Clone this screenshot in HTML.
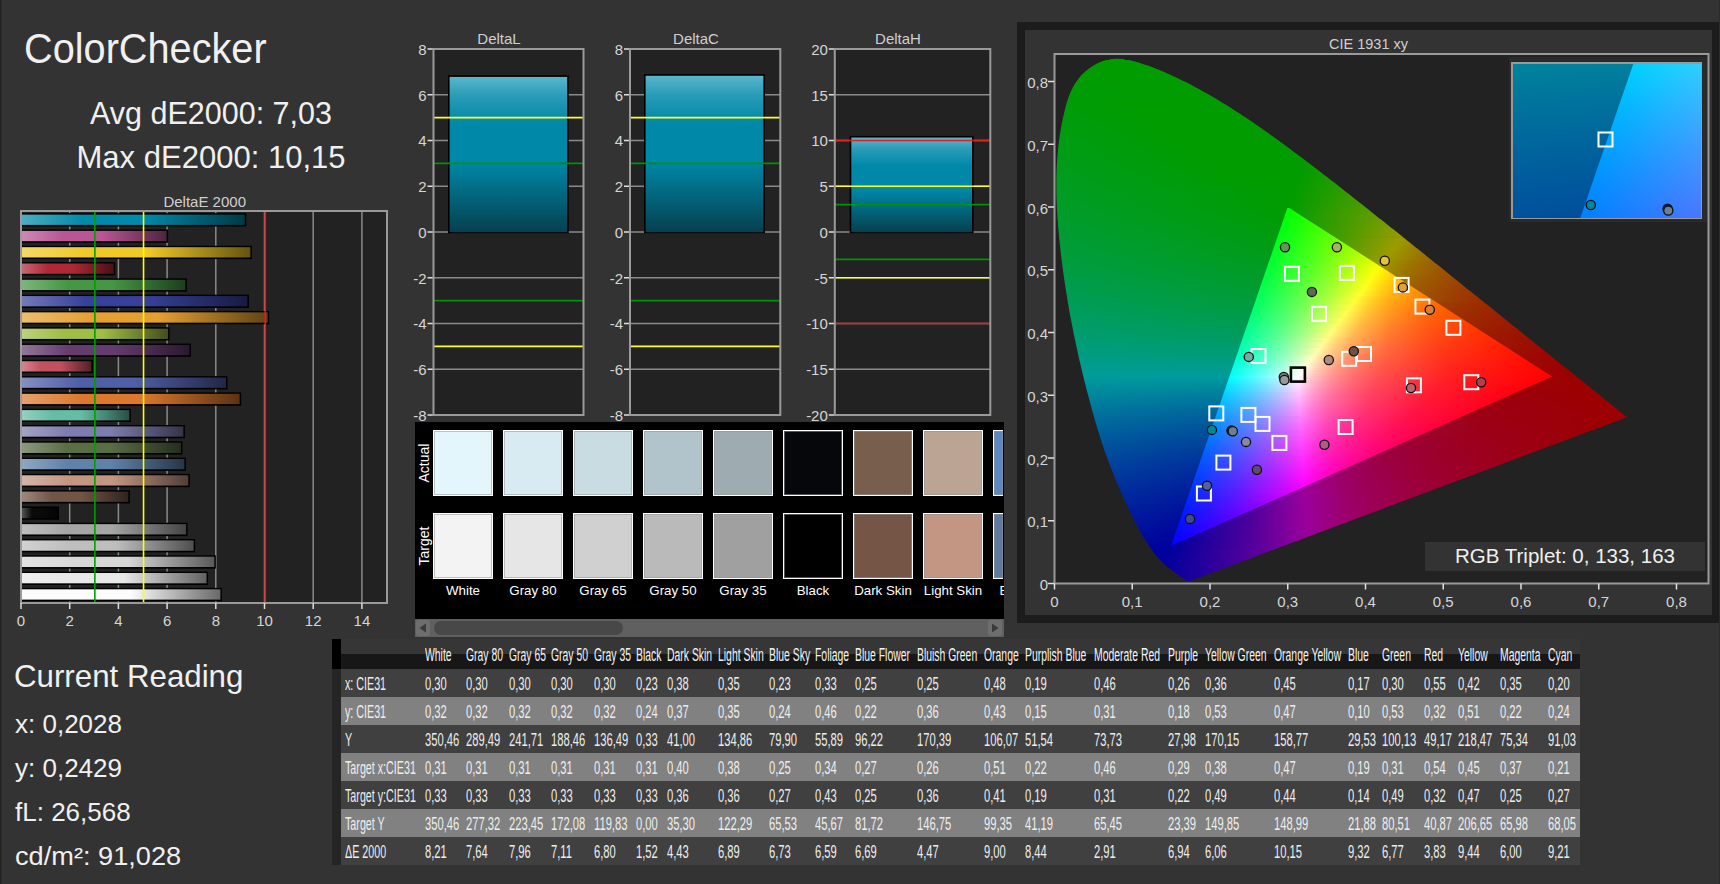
<!DOCTYPE html>
<html><head><meta charset="utf-8"><style>
html,body{margin:0;padding:0}
body{width:1720px;height:884px;background:#333;position:relative;overflow:hidden;font-family:"Liberation Sans", sans-serif}
div{position:absolute}
.t{white-space:nowrap;line-height:1}
svg{position:absolute;left:0;top:0}
</style></head><body>
<div style="left:0;top:0;width:1px;height:884px;background:#222"></div>
<div style="left:1px;top:0;width:1px;height:884px;background:#2b2b2b"></div>
<div style="left:415px;top:422px;width:589px;height:197px;background:#000"></div>
<div style="left:433px;top:430px;width:58px;height:64px;background:#e2f6fc;border:1px solid #fff;border-right-width:1px;box-shadow:inset 0 0 0 1px rgba(150,150,150,0.55)"></div>
<div style="left:433px;top:513px;width:58px;height:64px;background:#f3f3f3;border:1px solid #fff;border-right-width:1px;box-shadow:inset 0 0 0 1px rgba(150,150,150,0.55)"></div>
<div style="left:503px;top:430px;width:58px;height:64px;background:#d8ebf3;border:1px solid #fff;border-right-width:1px;box-shadow:inset 0 0 0 1px rgba(150,150,150,0.55)"></div>
<div style="left:503px;top:513px;width:58px;height:64px;background:#e6e6e6;border:1px solid #fff;border-right-width:1px;box-shadow:inset 0 0 0 1px rgba(150,150,150,0.55)"></div>
<div style="left:573px;top:430px;width:58px;height:64px;background:#c8dce2;border:1px solid #fff;border-right-width:1px;box-shadow:inset 0 0 0 1px rgba(150,150,150,0.55)"></div>
<div style="left:573px;top:513px;width:58px;height:64px;background:#d0d0d0;border:1px solid #fff;border-right-width:1px;box-shadow:inset 0 0 0 1px rgba(150,150,150,0.55)"></div>
<div style="left:643px;top:430px;width:58px;height:64px;background:#b2c4cb;border:1px solid #fff;border-right-width:1px;box-shadow:inset 0 0 0 1px rgba(150,150,150,0.55)"></div>
<div style="left:643px;top:513px;width:58px;height:64px;background:#bababa;border:1px solid #fff;border-right-width:1px;box-shadow:inset 0 0 0 1px rgba(150,150,150,0.55)"></div>
<div style="left:713px;top:430px;width:58px;height:64px;background:#9eabb0;border:1px solid #fff;border-right-width:1px;box-shadow:inset 0 0 0 1px rgba(150,150,150,0.55)"></div>
<div style="left:713px;top:513px;width:58px;height:64px;background:#a0a0a0;border:1px solid #fff;border-right-width:1px;box-shadow:inset 0 0 0 1px rgba(150,150,150,0.55)"></div>
<div style="left:783px;top:430px;width:58px;height:64px;background:#05070b;border:1px solid #fff;border-right-width:1px;box-shadow:inset 0 0 0 1px rgba(150,150,150,0.55)"></div>
<div style="left:783px;top:513px;width:58px;height:64px;background:#000000;border:1px solid #fff;border-right-width:1px;box-shadow:inset 0 0 0 1px rgba(150,150,150,0.55)"></div>
<div style="left:853px;top:430px;width:58px;height:64px;background:#785e4c;border:1px solid #fff;border-right-width:1px;box-shadow:inset 0 0 0 1px rgba(150,150,150,0.55)"></div>
<div style="left:853px;top:513px;width:58px;height:64px;background:#745546;border:1px solid #fff;border-right-width:1px;box-shadow:inset 0 0 0 1px rgba(150,150,150,0.55)"></div>
<div style="left:923px;top:430px;width:58px;height:64px;background:#bca494;border:1px solid #fff;border-right-width:1px;box-shadow:inset 0 0 0 1px rgba(150,150,150,0.55)"></div>
<div style="left:923px;top:513px;width:58px;height:64px;background:#c29682;border:1px solid #fff;border-right-width:1px;box-shadow:inset 0 0 0 1px rgba(150,150,150,0.55)"></div>
<div style="left:993px;top:430px;width:9px;height:64px;background:#5a88c0;border:1px solid #fff;border-right-width:0px;box-shadow:inset 0 0 0 1px rgba(150,150,150,0.55)"></div>
<div style="left:993px;top:513px;width:9px;height:64px;background:#5f7aa0;border:1px solid #fff;border-right-width:0px;box-shadow:inset 0 0 0 1px rgba(150,150,150,0.55)"></div>
<div style="left:415px;top:619px;width:589px;height:18px;background:#606060"></div>
<div style="left:416px;top:620px;width:14px;height:16px;background:#6e6e6e;border-radius:3px"></div>
<div style="left:433.5px;top:621px;width:189px;height:14px;background:#484848;border-radius:7px"></div>
<div style="left:988px;top:620px;width:14px;height:16px;background:#6e6e6e;border-radius:3px"></div>
<div style="left:1017px;top:22px;width:702px;height:600.5px;background:#1c1c1c"></div>
<div style="left:1719px;top:0;width:1px;height:884px;background:#2b2b2b"></div>
<div style="left:1025px;top:30px;width:687px;height:585px;background:#333"></div>
<div style="left:1054px;top:54px;width:655px;height:530px;background:#222"></div>
<div style="left:1054px;top:54px;width:655px;height:530px;clip-path:polygon(135.4px 527.2px,132.3px 526.5px,129.6px 524.8px,127.0px 522.9px,124.4px 521.0px,121.8px 519.2px,119.2px 517.3px,116.6px 515.5px,114.2px 513.5px,111.8px 511.5px,109.5px 509.4px,107.3px 507.2px,105.1px 505.0px,103.1px 502.7px,101.2px 500.4px,99.4px 498.0px,97.6px 495.6px,95.9px 493.2px,94.2px 490.7px,92.6px 488.2px,91.0px 485.8px,89.5px 483.2px,88.0px 480.7px,86.5px 478.2px,85.1px 475.6px,83.7px 473.1px,82.3px 470.5px,81.0px 467.9px,79.6px 465.3px,78.3px 462.8px,77.1px 460.2px,75.8px 457.5px,74.6px 454.9px,73.4px 452.3px,72.1px 449.7px,71.0px 447.1px,69.8px 444.4px,68.6px 441.8px,67.4px 439.2px,66.3px 436.5px,65.1px 433.9px,64.0px 431.2px,62.9px 428.6px,61.8px 425.9px,60.7px 423.3px,59.6px 420.6px,58.5px 418.0px,57.5px 415.3px,56.4px 412.6px,55.4px 409.9px,54.4px 407.3px,53.4px 404.6px,52.4px 401.9px,51.5px 399.2px,50.5px 396.5px,49.6px 393.8px,48.7px 391.1px,47.8px 388.4px,46.9px 385.7px,46.1px 383.0px,45.2px 380.3px,44.4px 377.6px,43.5px 374.9px,42.7px 372.1px,41.9px 369.4px,41.1px 366.7px,40.3px 364.0px,39.6px 361.2px,38.8px 358.5px,38.0px 355.8px,37.3px 353.0px,36.5px 350.3px,35.8px 347.6px,35.1px 344.8px,34.3px 342.1px,33.6px 339.4px,32.9px 336.6px,32.2px 333.9px,31.5px 331.1px,30.8px 328.4px,30.1px 325.7px,29.5px 322.9px,28.8px 320.2px,28.1px 317.4px,27.5px 314.7px,26.8px 311.9px,26.2px 309.2px,25.5px 306.4px,24.9px 303.7px,24.3px 300.9px,23.7px 298.2px,23.1px 295.4px,22.5px 292.7px,21.9px 289.9px,21.3px 287.1px,20.7px 284.4px,20.1px 281.6px,19.6px 278.9px,19.0px 276.1px,18.5px 273.3px,17.9px 270.6px,17.4px 267.8px,16.9px 265.0px,16.3px 262.3px,15.8px 259.5px,15.3px 256.7px,14.8px 254.0px,14.4px 251.2px,13.9px 248.4px,13.4px 245.7px,13.0px 242.9px,12.5px 240.1px,12.1px 237.3px,11.6px 234.6px,11.2px 231.8px,10.8px 229.0px,10.4px 226.2px,10.0px 223.5px,9.6px 220.7px,9.2px 217.9px,8.8px 215.1px,8.4px 212.3px,8.1px 209.6px,7.7px 206.8px,7.4px 204.0px,7.1px 201.2px,6.7px 198.4px,6.4px 195.6px,6.1px 192.8px,5.8px 190.0px,5.5px 187.2px,5.2px 184.4px,5.0px 181.6px,4.7px 178.8px,4.5px 176.0px,4.2px 173.2px,4.0px 170.5px,3.8px 167.7px,3.6px 164.9px,3.4px 162.1px,3.2px 159.3px,3.1px 156.5px,2.9px 153.7px,2.8px 150.9px,2.7px 148.1px,2.6px 145.3px,2.5px 142.5px,2.4px 139.7px,2.4px 136.9px,2.4px 134.1px,2.4px 131.3px,2.4px 128.5px,2.4px 125.7px,2.4px 122.9px,2.5px 120.1px,2.6px 117.3px,2.7px 114.5px,2.8px 111.8px,3.0px 109.0px,3.2px 106.2px,3.3px 103.4px,3.6px 100.6px,3.8px 97.9px,4.1px 95.1px,4.4px 92.3px,4.7px 89.5px,5.0px 86.7px,5.4px 84.0px,5.8px 81.2px,6.3px 78.4px,6.7px 75.6px,7.2px 72.8px,7.7px 70.0px,8.3px 67.3px,8.8px 64.5px,9.5px 61.7px,10.1px 58.9px,10.8px 56.1px,11.5px 53.3px,12.2px 50.5px,13.1px 47.8px,14.0px 45.0px,14.9px 42.3px,16.0px 39.6px,17.1px 36.9px,18.4px 34.3px,19.8px 31.7px,21.3px 29.2px,23.0px 26.7px,24.8px 24.3px,26.7px 22.0px,28.9px 19.7px,31.2px 17.6px,33.7px 15.5px,36.4px 13.5px,39.2px 11.7px,42.1px 10.0px,45.2px 8.6px,48.3px 7.3px,51.5px 6.2px,54.8px 5.5px,58.2px 4.9px,61.6px 4.7px,65.0px 4.7px,68.4px 5.0px,71.9px 5.5px,75.3px 6.1px,78.7px 6.9px,82.1px 7.8px,85.5px 8.8px,88.8px 9.9px,92.1px 11.0px,95.3px 12.1px,98.5px 13.3px,101.6px 14.5px,104.7px 15.7px,107.8px 17.0px,110.8px 18.3px,113.9px 19.7px,116.9px 21.0px,119.8px 22.4px,122.8px 23.8px,125.8px 25.2px,128.7px 26.7px,131.7px 28.1px,134.6px 29.6px,137.6px 31.1px,140.5px 32.7px,143.4px 34.2px,146.3px 35.8px,149.1px 37.4px,152.0px 39.0px,154.8px 40.6px,157.6px 42.2px,160.4px 43.8px,163.2px 45.5px,166.0px 47.2px,168.8px 48.9px,171.5px 50.6px,174.3px 52.3px,177.0px 54.0px,179.7px 55.7px,182.4px 57.5px,185.1px 59.2px,187.8px 61.0px,190.5px 62.8px,193.2px 64.5px,195.8px 66.3px,198.5px 68.1px,201.1px 69.9px,203.8px 71.8px,206.4px 73.6px,209.0px 75.4px,211.6px 77.3px,214.2px 79.1px,216.8px 81.0px,219.4px 82.8px,222.0px 84.7px,224.6px 86.6px,227.2px 88.4px,229.7px 90.3px,232.3px 92.2px,234.8px 94.1px,237.4px 96.0px,239.9px 97.9px,242.5px 99.8px,245.0px 101.7px,247.6px 103.6px,250.1px 105.5px,252.6px 107.4px,255.1px 109.3px,257.7px 111.3px,260.2px 113.2px,262.7px 115.1px,265.2px 117.0px,267.7px 119.0px,270.2px 120.9px,272.7px 122.8px,275.2px 124.8px,277.7px 126.7px,280.2px 128.6px,282.7px 130.6px,285.2px 132.5px,287.7px 134.5px,290.2px 136.4px,292.7px 138.4px,295.2px 140.3px,297.6px 142.3px,300.1px 144.2px,302.6px 146.2px,305.1px 148.2px,307.5px 150.1px,310.0px 152.1px,312.5px 154.0px,315.0px 156.0px,317.4px 158.0px,319.9px 159.9px,322.4px 161.9px,324.8px 163.9px,327.3px 165.8px,329.8px 167.8px,332.3px 169.8px,334.7px 171.7px,337.2px 173.7px,339.7px 175.6px,342.1px 177.6px,344.6px 179.6px,347.1px 181.5px,349.5px 183.5px,352.0px 185.5px,354.4px 187.5px,356.9px 189.4px,359.4px 191.4px,361.8px 193.4px,364.3px 195.3px,366.7px 197.3px,369.2px 199.3px,371.6px 201.3px,374.1px 203.2px,376.6px 205.2px,379.0px 207.2px,381.5px 209.2px,383.9px 211.1px,386.4px 213.1px,388.8px 215.1px,391.3px 217.1px,393.7px 219.1px,396.2px 221.0px,398.6px 223.0px,401.1px 225.0px,403.6px 227.0px,406.0px 228.9px,408.5px 230.9px,410.9px 232.9px,413.4px 234.9px,415.8px 236.8px,418.3px 238.8px,420.7px 240.8px,423.2px 242.8px,425.7px 244.7px,428.1px 246.7px,430.6px 248.7px,433.0px 250.6px,435.5px 252.6px,438.0px 254.6px,440.4px 256.6px,442.9px 258.5px,445.3px 260.5px,447.8px 262.5px,450.2px 264.5px,452.7px 266.4px,455.1px 268.4px,457.6px 270.4px,460.1px 272.4px,462.5px 274.3px,465.0px 276.3px,467.4px 278.3px,469.9px 280.3px,472.3px 282.3px,474.8px 284.2px,477.2px 286.2px,479.7px 288.2px,482.1px 290.2px,484.6px 292.1px,487.0px 294.1px,489.5px 296.1px,492.0px 298.1px,494.4px 300.0px,496.9px 302.0px,499.3px 304.0px,501.8px 305.9px,504.2px 307.9px,506.7px 309.9px,509.2px 311.9px,511.6px 313.8px,514.1px 315.8px,516.6px 317.8px,519.0px 319.7px,521.5px 321.7px,523.9px 323.7px,526.4px 325.7px,528.8px 327.6px,531.3px 329.6px,533.7px 331.6px,536.2px 333.6px,538.6px 335.6px,541.1px 337.5px,543.6px 339.5px,546.0px 341.5px,548.5px 343.4px,550.9px 345.4px,553.4px 347.4px,555.8px 349.4px,558.3px 351.3px,560.7px 353.3px,563.2px 355.3px,565.7px 357.2px,568.1px 359.2px,570.6px 361.2px,573.0px 363.2px)"><div style="left:54.8px;top:4px;width:16.5px;height:2px;background:linear-gradient(90deg,#009c00 0.0px,#009c00 16.5px)"></div><div style="left:46.2px;top:6px;width:36.0px;height:2px;background:linear-gradient(90deg,#009c00 0.0px,#009c00 35.9px)"></div><div style="left:41.2px;top:8px;width:47.9px;height:2px;background:linear-gradient(90deg,#009c00 0.0px,#009c00 47.9px)"></div><div style="left:37.4px;top:10px;width:57.8px;height:2px;background:linear-gradient(90deg,#009c00 0.0px,#009c00 57.8px)"></div><div style="left:34.2px;top:12px;width:66.6px;height:2px;background:linear-gradient(90deg,#009c00 0.0px,#009c00 66.6px)"></div><div style="left:31.4px;top:14px;width:74.5px;height:2px;background:linear-gradient(90deg,#009c00 0.0px,#009c00 74.5px)"></div><div style="left:28.9px;top:16px;width:81.9px;height:2px;background:linear-gradient(90deg,#009c00 0.0px,#009c00 81.9px)"></div><div style="left:26.7px;top:18px;width:88.7px;height:2px;background:linear-gradient(90deg,#009c00 0.0px,#009c00 88.7px)"></div><div style="left:24.7px;top:20px;width:95.1px;height:2px;background:linear-gradient(90deg,#009c00 0.0px,#009c00 95.1px)"></div><div style="left:22.9px;top:22px;width:101.2px;height:2px;background:linear-gradient(90deg,#009c01 0.0px,#009c00 101.2px)"></div><div style="left:21.3px;top:24px;width:107.1px;height:2px;background:linear-gradient(90deg,#009c02 0.0px,#009c00 107.0px)"></div><div style="left:19.8px;top:26px;width:112.6px;height:2px;background:linear-gradient(90deg,#009c02 0.0px,#009c00 112.6px)"></div><div style="left:18.4px;top:28px;width:117.9px;height:2px;background:linear-gradient(90deg,#009c03 0.0px,#009c00 117.9px)"></div><div style="left:17.2px;top:30px;width:123.1px;height:2px;background:linear-gradient(90deg,#009c04 0.0px,#009c00 123.1px)"></div><div style="left:16.1px;top:32px;width:128.0px;height:2px;background:linear-gradient(90deg,#009c04 0.0px,#009c00 128.0px)"></div><div style="left:15.1px;top:34px;width:132.8px;height:2px;background:linear-gradient(90deg,#009c05 0.0px,#009c00 132.7px)"></div><div style="left:14.1px;top:36px;width:137.4px;height:2px;background:linear-gradient(90deg,#009c05 0.0px,#009c00 137.4px)"></div><div style="left:13.2px;top:38px;width:141.8px;height:2px;background:linear-gradient(90deg,#009c06 0.0px,#009c00 141.8px)"></div><div style="left:12.4px;top:40px;width:146.1px;height:2px;background:linear-gradient(90deg,#009c06 0.0px,#009c00 146.1px)"></div><div style="left:11.7px;top:42px;width:150.3px;height:2px;background:linear-gradient(90deg,#009c07 0.0px,#009c00 150.3px)"></div><div style="left:11.0px;top:44px;width:154.4px;height:2px;background:linear-gradient(90deg,#009c08 0.0px,#009c00 154.4px)"></div><div style="left:10.3px;top:46px;width:158.4px;height:2px;background:linear-gradient(90deg,#009c08 0.0px,#009c00 57.4px,#009c00 158.4px)"></div><div style="left:9.7px;top:48px;width:162.3px;height:2px;background:linear-gradient(90deg,#009c09 0.0px,#009c00 61.4px,#009c00 162.3px)"></div><div style="left:9.1px;top:50px;width:166.1px;height:2px;background:linear-gradient(90deg,#009c09 0.0px,#009c00 65.3px,#009c00 166.1px)"></div><div style="left:8.6px;top:52px;width:169.9px;height:2px;background:linear-gradient(90deg,#009c0a 0.0px,#009c00 69.9px,#009c00 169.8px)"></div><div style="left:8.1px;top:54px;width:173.5px;height:2px;background:linear-gradient(90deg,#009c0a 0.0px,#009c00 73.8px,#009c00 173.5px)"></div><div style="left:7.6px;top:56px;width:177.2px;height:2px;background:linear-gradient(90deg,#009c0b 0.0px,#009c00 75.6px,#009c00 177.1px)"></div><div style="left:7.1px;top:58px;width:180.7px;height:2px;background:linear-gradient(90deg,#009c0b 0.0px,#009c00 79.4px,#009c00 180.7px)"></div><div style="left:6.6px;top:60px;width:184.2px;height:2px;background:linear-gradient(90deg,#009c0c 0.0px,#009c00 83.2px,#009c00 184.2px)"></div><div style="left:6.2px;top:62px;width:187.7px;height:2px;background:linear-gradient(90deg,#009c0c 0.0px,#009c00 87.9px,#009c00 187.7px)"></div><div style="left:5.7px;top:64px;width:191.1px;height:2px;background:linear-gradient(90deg,#009c0d 0.0px,#009c00 91.6px,#009c00 191.1px)"></div><div style="left:5.3px;top:66px;width:194.5px;height:2px;background:linear-gradient(90deg,#009c0e 0.0px,#009c00 95.3px,#009c00 194.5px)"></div><div style="left:4.9px;top:68px;width:197.8px;height:2px;background:linear-gradient(90deg,#009c0e 0.0px,#009c00 97.9px,#009c00 197.8px)"></div><div style="left:4.5px;top:70px;width:201.1px;height:2px;background:linear-gradient(90deg,#009c0f 0.0px,#009c00 101.6px,#009c00 201.1px)"></div><div style="left:4.2px;top:72px;width:204.4px;height:2px;background:linear-gradient(90deg,#009c0f 0.0px,#009c00 105.2px,#009c00 204.4px)"></div><div style="left:3.8px;top:74px;width:207.6px;height:2px;background:linear-gradient(90deg,#009c10 0.0px,#009c00 107.8px,#009c00 207.6px)"></div><div style="left:3.5px;top:76px;width:210.8px;height:2px;background:linear-gradient(90deg,#009c10 0.0px,#009c00 111.4px,#009c00 210.8px)"></div><div style="left:3.2px;top:78px;width:213.9px;height:2px;background:linear-gradient(90deg,#009c11 0.0px,#009c00 116.0px,#009c00 213.9px)"></div><div style="left:2.8px;top:80px;width:217.1px;height:2px;background:linear-gradient(90deg,#009c12 0.0px,#009c00 119.5px,#009c00 217.0px)"></div><div style="left:2.6px;top:82px;width:220.1px;height:2px;background:linear-gradient(90deg,#009c12 0.0px,#009c00 123.0px,#009c00 220.1px)"></div><div style="left:2.3px;top:84px;width:223.2px;height:2px;background:linear-gradient(90deg,#009c13 0.0px,#009c00 125.5px,#009c00 223.2px)"></div><div style="left:2.0px;top:86px;width:226.2px;height:2px;background:linear-gradient(90deg,#009c13 0.0px,#009c00 129.0px,#009c00 226.2px)"></div><div style="left:1.8px;top:88px;width:229.2px;height:2px;background:linear-gradient(90deg,#009c14 0.0px,#009c00 131.5px,#009c00 229.2px)"></div><div style="left:1.5px;top:90px;width:232.1px;height:2px;background:linear-gradient(90deg,#009c15 0.0px,#009c00 134.9px,#009c00 232.1px)"></div><div style="left:1.3px;top:92px;width:235.1px;height:2px;background:linear-gradient(90deg,#009c15 0.0px,#009c00 139.5px,#009c00 235.1px)"></div><div style="left:1.1px;top:94px;width:238.0px;height:2px;background:linear-gradient(90deg,#009c16 0.0px,#009c00 142.0px,#009c00 238.0px)"></div><div style="left:0.9px;top:96px;width:240.9px;height:2px;background:linear-gradient(90deg,#009c16 0.0px,#009c00 145.3px,#009c00 240.9px)"></div><div style="left:0.7px;top:98px;width:243.7px;height:2px;background:linear-gradient(90deg,#009c17 0.0px,#009c00 147.8px,#009c00 243.7px)"></div><div style="left:0.5px;top:100px;width:246.6px;height:2px;background:linear-gradient(90deg,#009c18 0.0px,#009c00 151.1px,#009c00 246.6px)"></div><div style="left:0.4px;top:102px;width:249.4px;height:2px;background:linear-gradient(90deg,#009c18 0.0px,#009c00 155.6px,#009c00 249.4px)"></div><div style="left:0.2px;top:104px;width:252.2px;height:2px;background:linear-gradient(90deg,#009c19 0.0px,#009c00 158.9px,#029c00 252.2px)"></div><div style="left:0.1px;top:106px;width:255.0px;height:2px;background:linear-gradient(90deg,#009c19 0.0px,#009c00 161.3px,#049c00 254.9px)"></div><div style="left:0.0px;top:108px;width:257.7px;height:2px;background:linear-gradient(90deg,#009c1a 0.0px,#009c00 165.8px,#009c00 247.7px,#079c00 257.7px)"></div><div style="left:0.0px;top:110px;width:260.3px;height:2px;background:linear-gradient(90deg,#009c1b 0.0px,#009c00 168.9px,#009c00 248.4px,#0a9c00 260.3px)"></div><div style="left:0.0px;top:112px;width:262.9px;height:2px;background:linear-gradient(90deg,#009c1b 0.0px,#009c00 171.3px,#009c00 247.0px,#0d9c00 262.9px)"></div><div style="left:0.0px;top:114px;width:265.6px;height:2px;background:linear-gradient(90deg,#009c1c 0.0px,#009c00 173.7px,#009c00 245.6px,#0f9c00 265.5px)"></div><div style="left:0.0px;top:116px;width:268.2px;height:2px;background:linear-gradient(90deg,#009c1d 0.0px,#009c00 176.8px,#009c00 246.3px,#129c00 268.1px)"></div><div style="left:0.0px;top:118px;width:270.8px;height:2px;background:linear-gradient(90deg,#009c1d 0.0px,#009c00 181.2px,#009c00 244.9px,#159c00 270.8px)"></div><div style="left:0.0px;top:120px;width:273.4px;height:2px;background:linear-gradient(90deg,#009c1e 0.0px,#009c00 183.6px,#009c00 243.4px,#189c00 273.3px)"></div><div style="left:0.0px;top:122px;width:275.9px;height:2px;background:linear-gradient(90deg,#009c1e 0.0px,#009c00 186.0px,#009c00 243.9px,#1b9c00 275.9px)"></div><div style="left:0.0px;top:124px;width:278.5px;height:2px;background:linear-gradient(90deg,#009c1f 0.0px,#009c00 189.0px,#009c00 242.7px,#1e9c00 278.5px)"></div><div style="left:0.0px;top:126px;width:281.1px;height:2px;background:linear-gradient(90deg,#009c20 0.0px,#009c00 193.4px,#009c00 241.2px,#229c00 281.1px)"></div><div style="left:0.0px;top:128px;width:283.7px;height:2px;background:linear-gradient(90deg,#009c20 0.0px,#009c00 195.8px,#009c00 241.7px,#259c00 283.7px)"></div><div style="left:0.0px;top:130px;width:286.3px;height:2px;background:linear-gradient(90deg,#009c21 0.0px,#009c00 198.8px,#009c00 240.5px,#289c00 286.2px)"></div><div style="left:0.0px;top:132px;width:288.8px;height:2px;background:linear-gradient(90deg,#009c22 0.0px,#009c00 203.2px,#009c00 239.0px,#2c9c00 288.8px)"></div><div style="left:0.0px;top:134px;width:291.4px;height:2px;background:linear-gradient(90deg,#009c22 0.0px,#009c00 239.5px,#2f9c00 291.4px)"></div><div style="left:0.0px;top:136px;width:293.9px;height:2px;background:linear-gradient(90deg,#009c23 0.0px,#009c00 237.9px,#339c00 293.9px)"></div><div style="left:0.0px;top:138px;width:296.5px;height:2px;background:linear-gradient(90deg,#009c24 0.0px,#009c00 238.8px,#369c00 296.5px)"></div><div style="left:0.0px;top:140px;width:299.0px;height:2px;background:linear-gradient(90deg,#009c25 0.0px,#009c00 237.2px,#3a9c00 299.0px)"></div><div style="left:0.0px;top:142px;width:301.5px;height:2px;background:linear-gradient(90deg,#009c25 0.0px,#009c00 237.6px,#3e9c00 301.5px)"></div><div style="left:0.0px;top:144px;width:304.1px;height:2px;background:linear-gradient(90deg,#009c26 0.0px,#009c00 236.5px,#429c00 304.1px)"></div><div style="left:0.0px;top:146px;width:306.6px;height:2px;background:linear-gradient(90deg,#009c27 0.0px,#009c00 234.9px,#459c00 306.6px)"></div><div style="left:0.0px;top:148px;width:309.1px;height:2px;background:linear-gradient(90deg,#009c27 0.0px,#009c00 235.3px,#4a9c00 309.1px)"></div><div style="left:0.0px;top:150px;width:311.6px;height:2px;background:linear-gradient(90deg,#009c28 0.0px,#009c00 233.7px,#4e9c00 311.6px)"></div><div style="left:0.0px;top:152px;width:314.2px;height:2px;background:linear-gradient(90deg,#009c29 0.0px,#009c00 232.6px,#529c00 314.2px)"></div><div style="left:0.0px;top:154px;width:316.7px;height:2px;background:linear-gradient(90deg,#009c2a 0.0px,#009c01 233.0px,#569c00 316.7px)"></div><div style="left:0.1px;top:156px;width:319.1px;height:2px;background:linear-gradient(90deg,#009c2a 0.0px,#009c02 231.3px,#5b9c00 319.1px)"></div><div style="left:0.2px;top:158px;width:321.5px;height:2px;background:linear-gradient(90deg,#009c2b 0.0px,#009c03 231.6px,#5f9c00 321.5px)"></div><div style="left:0.3px;top:160px;width:323.9px;height:2px;background:linear-gradient(90deg,#009c2c 0.0px,#009c04 229.9px,#649c00 323.9px)"></div><div style="left:0.5px;top:162px;width:326.3px;height:2px;background:linear-gradient(90deg,#009c2d 0.0px,#009c05 228.8px,#699c00 326.3px)"></div><div style="left:0.6px;top:164px;width:328.7px;height:2px;background:linear-gradient(90deg,#009c2e 0.0px,#009c06 229.1px,#6e9c00 328.7px)"></div><div style="left:0.7px;top:166px;width:331.0px;height:2px;background:linear-gradient(90deg,#009c2e 0.0px,#009c07 227.3px,#349c00 279.2px,#739c00 331.0px)"></div><div style="left:0.9px;top:168px;width:333.4px;height:2px;background:linear-gradient(90deg,#009c2f 0.0px,#009c08 227.6px,#3a9c00 283.5px,#789c00 333.4px)"></div><div style="left:1.1px;top:170px;width:335.8px;height:2px;background:linear-gradient(90deg,#009c30 0.0px,#009c09 225.8px,#399c00 281.8px,#7d9c00 335.8px)"></div><div style="left:1.2px;top:172px;width:338.1px;height:2px;background:linear-gradient(90deg,#009c31 0.0px,#009c0a 224.8px,#3b9c00 282.4px,#839c00 338.1px)"></div><div style="left:1.4px;top:174px;width:340.5px;height:2px;background:linear-gradient(90deg,#009c32 0.0px,#009c0b 225.0px,#429c00 286.7px,#889c00 340.5px)"></div><div style="left:1.6px;top:176px;width:342.8px;height:2px;background:linear-gradient(90deg,#009c32 0.0px,#009c0c 223.2px,#419c00 285.0px,#8e9c00 342.8px)"></div><div style="left:1.7px;top:178px;width:345.1px;height:2px;background:linear-gradient(90deg,#009c33 0.0px,#009c0d 223.4px,#459c00 287.3px,#949c00 345.1px)"></div><div style="left:1.9px;top:180px;width:347.5px;height:2px;background:linear-gradient(90deg,#009c34 0.0px,#009c0e 221.7px,#479c00 287.5px,#9a9c00 347.4px)"></div><div style="left:2.1px;top:182px;width:349.8px;height:2px;background:linear-gradient(90deg,#009c35 0.0px,#019c0f 221.9px,#3d9c00 277.8px,#9c9700 349.8px)"></div><div style="left:2.3px;top:184px;width:352.1px;height:2px;background:linear-gradient(90deg,#009c36 0.0px,#009c10 220.8px,#499c00 286.4px,#9a9c00 344.1px,#9c9100 352.1px)"></div><div style="left:2.5px;top:186px;width:354.4px;height:2px;background:linear-gradient(90deg,#009c37 0.0px,#009c11 219.0px,#469c00 282.7px,#9a9c00 342.4px,#9c8b00 354.4px)"></div><div style="left:2.7px;top:188px;width:356.7px;height:2px;background:linear-gradient(90deg,#009c38 0.0px,#019c12 219.2px,#489c01 282.9px,#9a9c00 340.7px,#9c8600 356.6px)"></div><div style="left:2.9px;top:190px;width:358.9px;height:2px;background:linear-gradient(90deg,#009c39 0.0px,#009c14 217.4px,#489c03 281.2px,#9a9c00 339.0px,#9c8100 358.9px)"></div><div style="left:3.1px;top:192px;width:361.2px;height:2px;background:linear-gradient(90deg,#009c39 0.0px,#019c14 217.5px,#4a9c04 281.4px,#9a9c00 337.3px,#9c7c00 361.2px)"></div><div style="left:3.4px;top:194px;width:363.5px;height:2px;background:linear-gradient(90deg,#009c3a 0.0px,#009c16 215.7px,#499c05 279.6px,#9a9c00 335.5px,#9c7700 363.5px)"></div><div style="left:3.6px;top:196px;width:365.8px;height:2px;background:linear-gradient(90deg,#009c3b 0.0px,#019c17 215.9px,#489c06 277.8px,#9a9c00 333.8px,#9c7300 365.7px)"></div><div style="left:3.8px;top:198px;width:368.0px;height:2px;background:linear-gradient(90deg,#009c3c 0.0px,#019c18 214.8px,#489c08 276.5px,#9b9c00 332.2px,#9c6e00 368.0px)"></div><div style="left:4.0px;top:200px;width:370.3px;height:2px;background:linear-gradient(90deg,#009c3d 0.0px,#009c19 213.0px,#489c09 274.7px,#9a9c00 330.4px,#9c6a00 370.3px)"></div><div style="left:4.3px;top:202px;width:372.5px;height:2px;background:linear-gradient(90deg,#009c3e 0.0px,#009c1b 211.2px,#459c0b 270.9px,#9a9c00 328.7px,#9c6600 372.5px)"></div><div style="left:4.5px;top:204px;width:374.8px;height:2px;background:linear-gradient(90deg,#009c3f 0.0px,#009c1c 211.3px,#499c0c 273.1px,#9a9c00 326.9px,#9c6300 374.7px)"></div><div style="left:4.8px;top:206px;width:377.0px;height:2px;background:linear-gradient(90deg,#009c40 0.0px,#009c1d 209.4px,#469c0e 269.3px,#9a9c00 325.1px,#9c7a00 349.1px,#9c5f00 377.0px)"></div><div style="left:5.0px;top:208px;width:379.2px;height:2px;background:linear-gradient(90deg,#009c41 0.0px,#009c1e 209.6px,#489c0f 269.5px,#9a9c00 323.3px,#9c7800 349.3px,#9c5b00 379.2px)"></div><div style="left:5.3px;top:210px;width:381.5px;height:2px;background:linear-gradient(90deg,#009c42 0.0px,#009c20 207.7px,#479c11 267.6px,#9a9c00 321.5px,#9c7500 349.5px,#9c5800 381.5px)"></div><div style="left:5.5px;top:212px;width:383.7px;height:2px;background:linear-gradient(90deg,#009c43 0.0px,#009c21 207.8px,#4a9c12 267.8px,#9a9c01 319.7px,#9c7300 349.7px,#9c5500 383.7px)"></div><div style="left:5.8px;top:214px;width:385.9px;height:2px;background:linear-gradient(90deg,#009c44 0.0px,#009c23 206.0px,#469c14 263.9px,#9a9c03 317.9px,#9c7100 349.9px,#9c5200 385.9px)"></div><div style="left:6.1px;top:216px;width:388.1px;height:2px;background:linear-gradient(90deg,#009c45 0.0px,#009c24 205.0px,#469c15 262.7px,#9b9c04 316.5px,#9c7000 348.3px,#9c4f00 388.1px)"></div><div style="left:6.3px;top:218px;width:390.3px;height:2px;background:linear-gradient(90deg,#009c46 0.0px,#009c25 205.1px,#499c17 262.9px,#9a9c06 314.7px,#9c6e00 348.5px,#9c4c00 390.3px)"></div><div style="left:6.6px;top:220px;width:392.5px;height:2px;background:linear-gradient(90deg,#009c47 0.0px,#009c27 203.2px,#489c18 261.0px,#9a9c08 312.8px,#9c6c00 348.7px,#9c4900 392.5px)"></div><div style="left:6.9px;top:222px;width:394.7px;height:2px;background:linear-gradient(90deg,#009c48 0.0px,#019c28 203.4px,#4a9c19 261.2px,#9a9c0a 311.0px,#9c6900 348.9px,#9c4600 394.7px)"></div><div style="left:7.2px;top:224px;width:396.9px;height:2px;background:linear-gradient(90deg,#009c4a 0.0px,#009c2a 201.5px,#479c1c 257.3px,#9a9c0b 309.2px,#9c6900 347.1px,#9c4300 396.9px)"></div><div style="left:7.5px;top:226px;width:399.1px;height:2px;background:linear-gradient(90deg,#009c4b 0.0px,#009c2b 199.6px,#469c1e 255.4px,#9a9c0d 307.3px,#9c6700 347.2px,#9c4100 399.1px)"></div><div style="left:7.8px;top:228px;width:401.3px;height:2px;background:linear-gradient(90deg,#009c4c 0.0px,#009c2d 199.7px,#459c1f 253.6px,#9c990e 307.5px,#9c6500 347.4px,#9c3e00 401.3px)"></div><div style="left:8.1px;top:230px;width:403.5px;height:2px;background:linear-gradient(90deg,#009c4d 0.0px,#009c2e 197.8px,#429c22 249.7px,#9c9a10 305.6px,#9c6200 347.6px,#9c3c00 403.5px)"></div><div style="left:8.4px;top:232px;width:405.7px;height:2px;background:linear-gradient(90deg,#009c4e 0.0px,#009c30 197.8px,#479c23 251.8px,#9c9a12 303.8px,#9c6201 345.7px,#9c3a00 405.7px)"></div><div style="left:8.7px;top:234px;width:407.9px;height:2px;background:linear-gradient(90deg,#009c4f 0.0px,#009c31 195.9px,#439c25 247.9px,#9c9a14 301.9px,#9c7a0a 321.9px,#9c6002 345.9px,#9c3700 407.8px)"></div><div style="left:9.0px;top:236px;width:410.0px;height:2px;background:linear-gradient(90deg,#009c50 0.0px,#009c33 195.1px,#469c26 248.8px,#9a9c17 298.6px,#9c7a0c 320.5px,#9c5f03 344.3px,#9c3500 410.0px)"></div><div style="left:9.3px;top:238px;width:412.2px;height:2px;background:linear-gradient(90deg,#009c52 0.0px,#009c34 195.1px,#499c28 248.9px,#9a9c19 296.7px,#9c7a0d 318.6px,#9c5d04 344.5px,#9c3300 412.2px)"></div><div style="left:9.6px;top:240px;width:414.4px;height:2px;background:linear-gradient(90deg,#009c53 0.0px,#009c36 193.2px,#489c2a 247.0px,#9a9c1b 294.8px,#9c770e 318.7px,#9c5b05 344.6px,#9c3100 414.3px)"></div><div style="left:10.0px;top:242px;width:416.5px;height:2px;background:linear-gradient(90deg,#009c54 0.0px,#019c38 193.3px,#479c2c 245.1px,#9a9c1d 293.0px,#9c7710 316.9px,#9c5b06 342.8px,#9c2f00 416.5px)"></div><div style="left:10.3px;top:244px;width:418.7px;height:2px;background:linear-gradient(90deg,#009c55 0.0px,#009c3a 191.4px,#479c2e 243.2px,#9a9c20 291.1px,#9c7612 315.0px,#9c5907 342.9px,#9c2d00 418.7px)"></div><div style="left:10.6px;top:246px;width:420.8px;height:2px;background:linear-gradient(90deg,#009c57 0.0px,#019c3b 191.5px,#499c2f 243.3px,#9a9c22 289.2px,#9c7412 315.1px,#9c5707 343.1px,#9c2b00 420.8px)"></div><div style="left:11.0px;top:248px;width:423.0px;height:2px;background:linear-gradient(90deg,#009c58 0.0px,#009c3d 189.6px,#489c31 241.4px,#9a9c24 287.3px,#9c7314 313.3px,#9c5609 341.2px,#9c4000 373.1px,#9c2900 423.0px)"></div><div style="left:11.3px;top:250px;width:425.2px;height:2px;background:linear-gradient(90deg,#009c59 0.0px,#009c3f 187.6px,#459c34 237.5px,#9a9c26 285.4px,#9c7316 311.4px,#9c5409 341.3px,#9c3d00 375.2px,#9c2800 425.1px)"></div><div style="left:11.7px;top:252px;width:427.3px;height:2px;background:linear-gradient(90deg,#009c5b 0.0px,#009c41 187.7px,#479c35 237.6px,#9a9c29 283.5px,#9c7016 311.5px,#9c520a 341.4px,#9c3b00 377.4px,#9c2600 427.3px)"></div><div style="left:12.0px;top:254px;width:429.4px;height:2px;background:linear-gradient(90deg,#009c5c 0.0px,#009c43 185.8px,#469c38 235.7px,#9a9c2b 281.6px,#9c7018 309.6px,#9c520b 339.6px,#9c3700 381.5px,#9c2400 429.4px)"></div><div style="left:12.4px;top:256px;width:431.6px;height:2px;background:linear-gradient(90deg,#009c5d 0.0px,#009c44 185.8px,#499c39 235.8px,#999c2d 279.7px,#9c701a 307.7px,#9c500c 339.7px,#9c3500 383.6px,#9c2200 431.6px)"></div><div style="left:12.7px;top:258px;width:433.7px;height:2px;background:linear-gradient(90deg,#009c5f 0.0px,#009c46 183.9px,#459c3c 231.8px,#999c30 277.8px,#9c701c 305.8px,#9c500d 337.8px,#9c3300 385.7px,#9c2100 433.7px)"></div><div style="left:13.1px;top:260px;width:435.8px;height:2px;background:linear-gradient(90deg,#009c60 0.0px,#019c48 183.9px,#479c3e 231.9px,#999c32 275.9px,#9c6f1e 303.9px,#9c4e0e 337.9px,#9c3000 387.9px,#9c1f00 435.8px)"></div><div style="left:13.5px;top:262px;width:438.0px;height:2px;background:linear-gradient(90deg,#009c62 0.0px,#009c4a 182.0px,#469c40 230.0px,#999c35 274.0px,#9c6f1f 302.0px,#9c4d0f 336.0px,#9c2d00 392.0px,#9c1e00 437.9px)"></div><div style="left:13.9px;top:264px;width:440.1px;height:2px;background:linear-gradient(90deg,#009c63 0.0px,#009c4c 181.2px,#479c42 229.0px,#9b9c37 272.8px,#9c6e21 300.7px,#9c4b10 336.5px,#9c2b00 394.3px,#9c1c00 440.1px)"></div><div style="left:14.2px;top:266px;width:442.2px;height:2px;background:linear-gradient(90deg,#009c65 0.0px,#009c4e 179.3px,#479c45 227.1px,#9a9c3a 270.9px,#9c6e23 298.8px,#9c4b11 334.6px,#9c2900 396.4px,#9c1b00 442.2px)"></div><div style="left:14.6px;top:268px;width:444.3px;height:2px;background:linear-gradient(90deg,#009c66 0.0px,#009c50 179.3px,#499c47 227.1px,#9a9c3c 268.9px,#9c6b23 298.8px,#9c4912 334.7px,#9c2700 400.4px,#9c1900 444.3px)"></div><div style="left:15.0px;top:270px;width:446.4px;height:2px;background:linear-gradient(90deg,#009c68 0.0px,#009c52 177.3px,#459c4a 223.2px,#9a9c3f 267.0px,#9c6b25 296.9px,#9c4813 332.8px,#9c2500 402.5px,#9c1800 446.3px)"></div><div style="left:15.4px;top:272px;width:448.4px;height:2px;background:linear-gradient(90deg,#009c69 0.0px,#009c54 177.4px,#489c4c 223.2px,#9a9c42 265.1px,#9c6b27 295.0px,#9c4613 332.8px,#9c2300 404.6px,#9c1700 448.4px)"></div><div style="left:15.8px;top:274px;width:450.5px;height:2px;background:linear-gradient(90deg,#009c6b 0.0px,#009c57 175.4px,#479c4e 221.3px,#9a9c45 263.1px,#9c6a29 293.0px,#9c4615 330.9px,#9c2100 406.7px,#9c1500 450.5px)"></div><div style="left:16.2px;top:276px;width:452.6px;height:2px;background:linear-gradient(90deg,#009c6c 0.0px,#019c59 175.5px,#4a9c51 221.3px,#9a9c48 261.2px,#9c682a 293.1px,#9c4415 331.0px,#9c1f00 410.7px,#9c1400 452.6px)"></div><div style="left:16.6px;top:278px;width:454.7px;height:2px;background:linear-gradient(90deg,#009c6e 0.0px,#009c5b 173.5px,#499c53 219.4px,#9a9c4a 259.2px,#9c672c 291.1px,#9c4417 329.0px,#9c1e01 408.8px,#9c1300 454.7px)"></div><div style="left:17.0px;top:280px;width:456.7px;height:2px;background:linear-gradient(90deg,#009c70 0.0px,#009c5e 171.5px,#449c56 215.4px,#9a9c4d 257.3px,#9c672e 289.2px,#9c4217 329.1px,#9c1d01 408.9px,#9c1100 456.7px)"></div><div style="left:17.4px;top:282px;width:458.8px;height:2px;background:linear-gradient(90deg,#009c71 0.0px,#009c60 171.6px,#479c59 215.4px,#999c50 255.3px,#9c6730 287.3px,#9c4119 327.2px,#9c1d02 406.9px,#9c1000 458.8px)"></div><div style="left:17.8px;top:284px;width:460.9px;height:2px;background:linear-gradient(90deg,#009c73 0.0px,#009c62 169.6px,#469c5c 213.5px,#999c53 253.4px,#9c6632 285.3px,#9c4019 327.2px,#9c1c03 407.0px,#9c0f00 460.9px)"></div><div style="left:18.3px;top:286px;width:463.0px;height:2px;background:linear-gradient(90deg,#009c75 0.0px,#009c65 169.6px,#499c5e 213.5px,#999c57 251.4px,#9c6634 283.4px,#9c3f1b 325.3px,#9c2308 383.1px,#9c0e00 462.9px)"></div><div style="left:18.7px;top:288px;width:465.0px;height:2px;background:linear-gradient(90deg,#009c77 0.0px,#009c67 167.6px,#459c61 209.6px,#999c5a 249.5px,#9c6334 283.4px,#9c3d1b 325.3px,#9c1b04 405.1px,#9c0d00 465.0px)"></div><div style="left:19.1px;top:290px;width:467.1px;height:2px;background:linear-gradient(90deg,#009c79 0.0px,#019c6a 167.7px,#489c64 209.6px,#999c5d 247.5px,#9c6336 281.4px,#9c3d1c 323.4px,#9c2009 383.2px,#9c0c00 467.1px)"></div><div style="left:19.5px;top:292px;width:469.1px;height:2px;background:linear-gradient(90deg,#009c7a 0.0px,#009c6d 165.7px,#479c67 207.6px,#999c60 245.5px,#9c6238 279.5px,#9c3b1d 323.4px,#9c1905 403.3px,#9c0b00 469.1px)"></div><div style="left:20.0px;top:294px;width:471.2px;height:2px;background:linear-gradient(90deg,#009c7c 0.0px,#019c6f 165.7px,#4a9c6a 207.6px,#999c64 243.6px,#9c623a 277.5px,#9c3b1e 321.4px,#9c1e0a 383.3px,#9c0900 471.2px)"></div><div style="left:20.4px;top:296px;width:473.2px;height:2px;background:linear-gradient(90deg,#009c7e 0.0px,#009c72 163.7px,#459c6d 203.7px,#9c9965 243.6px,#9c623d 275.6px,#9c391f 321.5px,#9c1806 401.3px,#9c0800 473.2px)"></div><div style="left:20.9px;top:298px;width:475.3px;height:2px;background:linear-gradient(90deg,#009c80 0.0px,#009c75 161.8px,#419c70 199.7px,#9c9969 241.6px,#9c613f 273.6px,#9c3820 319.5px,#9c1707 399.4px,#9c0700 475.3px)"></div><div style="left:21.3px;top:300px;width:477.3px;height:2px;background:linear-gradient(90deg,#009c82 0.0px,#009c77 161.8px,#489c73 201.7px,#9c9a6d 239.7px,#9c7853 255.6px,#9c5e3f 273.6px,#9c3721 319.5px,#9c1608 399.4px,#9c0600 477.3px)"></div><div style="left:21.8px;top:302px;width:479.4px;height:2px;background:linear-gradient(90deg,#009c84 0.0px,#009c7a 159.8px,#439c77 197.7px,#9c9a70 237.7px,#9c6043 269.6px,#9c3622 317.6px,#9c1609 397.5px,#9c0500 479.3px)"></div><div style="left:22.2px;top:304px;width:481.4px;height:2px;background:linear-gradient(90deg,#009c86 0.0px,#019c7d 159.8px,#469c7a 197.8px,#9c9a74 235.7px,#9c7b5c 249.7px,#9c6046 267.7px,#9c3623 315.6px,#9c1509 397.5px,#9c0400 481.4px)"></div><div style="left:22.7px;top:306px;width:483.4px;height:2px;background:linear-gradient(90deg,#009c88 0.0px,#009c80 157.8px,#459c7d 195.8px,#9c9a78 233.7px,#9c785c 249.7px,#9c5d46 267.7px,#9c3424 315.6px,#9c1409 397.5px,#9c0300 483.4px)"></div><div style="left:23.1px;top:308px;width:485.5px;height:2px;background:linear-gradient(90deg,#009c8b 0.0px,#009c84 155.8px,#409c81 191.8px,#9c9a7c 231.7px,#9c775f 247.7px,#9c5d48 265.7px,#9c3325 313.6px,#9c130a 395.6px,#9c0300 485.5px)"></div><div style="left:23.6px;top:310px;width:487.5px;height:2px;background:linear-gradient(90deg,#009c8d 0.0px,#009c87 155.8px,#479c84 193.8px,#9c9a80 229.8px,#9c7762 245.7px,#9c5c4a 263.7px,#9c3327 311.7px,#9c130b 393.6px,#9c0200 487.5px)"></div><div style="left:24.1px;top:312px;width:489.5px;height:2px;background:linear-gradient(90deg,#009c8f 0.0px,#009c8a 153.9px,#429c88 189.8px,#9c9a84 227.8px,#9c7765 243.8px,#9c5c4d 261.8px,#9c3127 311.7px,#9c110b 395.6px,#9c0100 489.5px)"></div><div style="left:24.5px;top:314px;width:491.6px;height:2px;background:linear-gradient(90deg,#009c91 0.0px,#019c8d 153.9px,#469c8c 189.8px,#9c9a88 225.8px,#9c7668 241.8px,#9c5b4f 259.8px,#9c3129 309.7px,#9c110c 393.7px,#9c0000 491.6px)"></div><div style="left:25.0px;top:316px;width:493.6px;height:2px;background:linear-gradient(90deg,#009c94 0.0px,#009c91 151.9px,#459c8f 187.9px,#9c9a8c 223.8px,#9c766b 239.8px,#9c5b52 257.8px,#9c2f29 309.7px,#9c100c 393.7px,#9c0000 493.6px)"></div><div style="left:25.5px;top:318px;width:495.6px;height:2px;background:linear-gradient(90deg,#009c96 0.0px,#019c94 151.9px,#489c93 187.9px,#9c9a91 221.8px,#9c766e 237.8px,#9c5a54 255.8px,#9c2e2a 307.8px,#9c100d 391.7px,#9c0000 495.6px)"></div><div style="left:26.0px;top:320px;width:497.6px;height:2px;background:linear-gradient(90deg,#009c98 0.0px,#009c98 149.9px,#479c97 185.9px,#9c9a95 219.8px,#9c7572 235.8px,#9c5754 255.8px,#9c2d2b 307.8px,#9c0e0d 393.7px,#9c0000 497.6px)"></div><div style="left:26.5px;top:322px;width:499.6px;height:2px;background:linear-gradient(90deg,#009c9b 0.0px,#009c9b 147.9px,#429c9b 181.9px,#9c9a9a 217.8px,#9c7575 233.8px,#9c5757 253.8px,#9c2c2c 305.8px,#9c0e0e 391.7px,#9c0000 499.6px)"></div><div style="left:27.0px;top:324px;width:501.6px;height:2px;background:linear-gradient(90deg,#009a9c 0.0px,#01989c 147.9px,#44989c 181.9px,#9c9499 217.8px,#9c7175 233.8px,#9c5457 253.8px,#9c292c 307.8px,#9c0b0d 397.7px,#9c0000 501.6px)"></div><div style="left:27.5px;top:326px;width:503.6px;height:2px;background:linear-gradient(90deg,#00979c 0.0px,#00959c 145.9px,#41949c 179.9px,#9c8f98 217.8px,#9c6d74 233.8px,#9c5157 253.8px,#9c282c 307.7px,#9c0a0c 401.7px,#9c0000 503.6px)"></div><div style="left:28.0px;top:328px;width:505.6px;height:2px;background:linear-gradient(90deg,#00959c 0.0px,#01919c 145.9px,#4c909c 183.8px,#9b8e9c 215.8px,#9c6d78 231.8px,#9c5059 251.8px,#9c272d 305.7px,#9c080c 403.6px,#9c0000 505.5px)"></div><div style="left:28.5px;top:330px;width:507.5px;height:2px;background:linear-gradient(90deg,#00929c 0.0px,#008e9c 143.9px,#498c9c 181.8px,#9c899b 215.8px,#9c6977 231.8px,#9c4e59 251.8px,#9c252d 307.7px,#9c060c 409.6px,#9c0000 507.5px)"></div><div style="left:29.0px;top:332px;width:509.5px;height:2px;background:linear-gradient(90deg,#00909c 0.0px,#008b9c 141.9px,#42889c 177.8px,#9c849a 215.8px,#9c6577 231.8px,#9c4b59 251.7px,#9c232d 307.7px,#9c050b 413.6px,#9c0000 509.5px)"></div><div style="left:29.5px;top:334px;width:511.5px;height:2px;background:linear-gradient(90deg,#008e9c 0.0px,#00879c 141.9px,#44859c 177.8px,#9c7f99 215.8px,#9c6177 231.8px,#9c4859 251.7px,#9c222d 307.7px,#9c030b 417.6px,#9c0000 511.4px)"></div><div style="left:30.0px;top:336px;width:513.4px;height:2px;background:linear-gradient(90deg,#008b9c 0.0px,#00849c 139.9px,#41819c 175.8px,#9c7b98 215.8px,#9c5b73 233.7px,#9c4357 253.7px,#9c1f2d 309.7px,#9c010a 425.5px,#9c0000 513.4px)"></div><div style="left:30.5px;top:338px;width:515.4px;height:2px;background:linear-gradient(90deg,#00899c 0.0px,#01819c 139.9px,#437e9c 175.8px,#9c7697 215.8px,#9c5772 233.7px,#9c4157 253.7px,#9c1e2d 309.7px,#9c0009 429.5px,#9c0000 515.4px)"></div><div style="left:31.1px;top:340px;width:517.4px;height:2px;background:linear-gradient(90deg,#00879c 0.0px,#007e9c 137.8px,#497a9c 177.8px,#9c759b 213.8px,#9c5775 231.7px,#9c4059 251.7px,#9c1c2d 309.6px,#9c000a 425.5px,#9c0000 517.4px)"></div><div style="left:31.6px;top:342px;width:519.4px;height:2px;background:linear-gradient(90deg,#00849c 0.0px,#007b9c 135.8px,#42779c 173.8px,#9c719a 213.7px,#9c5475 231.7px,#9c3e5a 251.7px,#9c1b2e 309.6px,#9c000c 419.5px,#9c0000 519.4px)"></div><div style="left:32.1px;top:344px;width:521.3px;height:2px;background:linear-gradient(90deg,#00829c 0.0px,#00789c 135.8px,#44749c 173.8px,#9c6c99 213.7px,#9c5075 231.7px,#9c3b5a 251.7px,#9c1a2e 309.6px,#9c000d 415.5px,#9c0000 521.3px)"></div><div style="left:32.6px;top:346px;width:523.3px;height:2px;background:linear-gradient(90deg,#00809c 0.0px,#00759c 133.8px,#41719c 171.8px,#9c6898 213.7px,#9c4d74 231.7px,#9c3757 253.6px,#9c172d 311.6px,#9c000e 409.4px,#9c0000 523.3px)"></div><div style="left:33.2px;top:348px;width:525.2px;height:2px;background:linear-gradient(90deg,#007e9c 0.0px,#01729c 133.8px,#436e9c 171.7px,#9c6497 213.7px,#9c4a74 231.7px,#9c3557 253.6px,#9c162d 311.5px,#9c000f 405.4px,#9c0000 525.2px)"></div><div style="left:33.7px;top:350px;width:527.1px;height:2px;background:linear-gradient(90deg,#007b9c 0.0px,#00709c 131.8px,#486a9c 173.7px,#9c639b 211.7px,#9c4977 229.6px,#9c345a 251.6px,#9c152e 311.5px,#9c0011 399.3px,#9c0000 527.1px)"></div><div style="left:34.3px;top:352px;width:529.1px;height:2px;background:linear-gradient(90deg,#00799c 0.0px,#006d9c 129.8px,#42689c 169.7px,#9c5f9a 211.6px,#9c4677 229.6px,#9c325a 251.6px,#9c132e 311.5px,#9c0012 395.3px,#9c0000 529.1px)"></div><div style="left:34.8px;top:354px;width:531.1px;height:2px;background:linear-gradient(90deg,#00779c 0.0px,#016a9c 129.8px,#44649c 169.7px,#9c5b99 211.6px,#9c4376 229.6px,#9c305a 251.6px,#9c122e 311.5px,#9c0014 389.3px,#9c0000 531.1px)"></div><div style="left:35.4px;top:356px;width:533.0px;height:2px;background:linear-gradient(90deg,#00759c 0.0px,#00689c 127.8px,#42629c 167.7px,#9c5798 211.6px,#9c4076 229.6px,#9c2e5a 251.5px,#9c102e 313.4px,#9c0015 385.3px,#9c0000 533.0px)"></div><div style="left:35.9px;top:358px;width:534.9px;height:2px;background:linear-gradient(90deg,#00739c 0.0px,#01659c 127.8px,#4b5e9c 171.7px,#9b569c 209.6px,#9c3e76 229.5px,#9c2b5a 251.5px,#9c102f 311.4px,#9c0017 379.2px,#9c0000 534.9px)"></div><div style="left:36.5px;top:360px;width:536.9px;height:2px;background:linear-gradient(90deg,#00719c 0.0px,#00639c 125.7px,#495c9c 169.6px,#9c539b 209.6px,#9c3d78 227.5px,#9c295a 251.5px,#9c0e2f 311.3px,#9c0018 375.2px,#9c0000 536.8px)"></div><div style="left:37.1px;top:362px;width:538.8px;height:2px;background:linear-gradient(90deg,#006f9c 0.0px,#00609c 123.7px,#43599c 165.6px,#9c4f9a 209.5px,#9c3a78 227.5px,#9c275a 251.4px,#9c0d2f 313.3px,#9c001a 369.1px,#9c0011 409.1px,#9c0000 538.8px)"></div><div style="left:37.6px;top:364px;width:533.6px;height:2px;background:linear-gradient(90deg,#006d9c 0.0px,#015e9c 123.9px,#45569c 165.9px,#9c4b98 209.8px,#9c3777 227.8px,#9c2559 251.8px,#9c0c30 311.7px,#9c0012 403.7px,#9c0000 533.6px)"></div><div style="left:38.2px;top:366px;width:527.7px;height:2px;background:linear-gradient(90deg,#006b9c 0.0px,#005c9c 121.9px,#4a539c 167.9px,#9b4a9c 207.9px,#9c3477 227.9px,#9c245b 249.8px,#9c0b31 309.8px,#9c0014 397.7px,#9c0000 527.6px)"></div><div style="left:38.8px;top:368px;width:521.7px;height:2px;background:linear-gradient(90deg,#00699c 0.0px,#00599c 119.9px,#44519c 163.9px,#9c479b 207.9px,#9c3379 225.9px,#9c235d 247.9px,#9c0b32 307.8px,#9c0015 393.8px,#9c0001 521.7px)"></div><div style="left:39.4px;top:370px;width:515.8px;height:2px;background:linear-gradient(90deg,#00679c 0.0px,#01579c 120.0px,#464f9c 163.9px,#9c439a 207.9px,#9c3179 225.9px,#9c215d 247.9px,#9c0a33 305.9px,#9c0016 391.8px,#9c0002 515.8px)"></div><div style="left:40.0px;top:372px;width:509.9px;height:2px;background:linear-gradient(90deg,#00659c 0.0px,#00559c 118.0px,#444c9c 162.0px,#9c4099 208.0px,#9c2e78 225.9px,#9c1f5d 247.9px,#9c0933 305.9px,#9c0017 389.9px,#9c0003 509.9px)"></div><div style="left:40.6px;top:374px;width:503.9px;height:2px;background:linear-gradient(90deg,#00639c 0.0px,#00539c 116.0px,#464a9c 162.0px,#9b3f9c 206.0px,#9c2d7b 224.0px,#9c1e5f 246.0px,#9c0835 302.0px,#9c0018 383.9px,#9c0004 503.9px)"></div><div style="left:41.2px;top:376px;width:498.0px;height:2px;background:linear-gradient(90deg,#00619c 0.0px,#01509c 116.0px,#47479c 162.0px,#9c3c9b 206.0px,#9c2b7a 224.0px,#9c1c5e 246.0px,#9c0736 302.0px,#9c0019 382.0px,#9c0005 498.0px)"></div><div style="left:41.8px;top:378px;width:492.0px;height:2px;background:linear-gradient(90deg,#005f9c 0.0px,#004f9c 113.6px,#48459c 161.4px,#9c399b 205.2px,#9c297b 223.1px,#9c1c61 243.0px,#9c0737 298.8px,#9c001a 378.5px,#9c0006 492.0px)"></div><div style="left:42.4px;top:380px;width:486.1px;height:2px;background:linear-gradient(90deg,#005d9c 0.0px,#014c9c 113.6px,#49429c 161.4px,#9c369a 205.2px,#9c1a61 243.0px,#9c0638 298.8px,#9c001b 376.5px,#9c0007 486.1px)"></div><div style="left:43.1px;top:382px;width:480.1px;height:2px;background:linear-gradient(90deg,#005b9c 0.0px,#004a9c 111.6px,#44419c 157.4px,#9c3399 205.2px,#9c1861 243.0px,#9c0539 296.8px,#9c001c 372.5px,#9c0008 480.1px)"></div><div style="left:43.7px;top:384px;width:474.1px;height:2px;background:linear-gradient(90deg,#00599c 0.0px,#00489c 109.6px,#423f9c 155.4px,#9c3098 205.2px,#9c1661 243.0px,#9c0439 296.8px,#9c001d 370.5px,#9c0009 474.1px)"></div><div style="left:44.4px;top:386px;width:468.1px;height:2px;background:linear-gradient(90deg,#00579c 0.0px,#01469c 109.6px,#4a3b9c 159.4px,#9c2f9b 203.2px,#9c1563 241.0px,#9c043b 292.8px,#9c001e 366.5px,#9c000a 468.1px)"></div><div style="left:45.0px;top:388px;width:462.1px;height:2px;background:linear-gradient(90deg,#00569c 0.0px,#00449c 107.6px,#453a9c 155.4px,#9c2c9a 203.2px,#9c1565 239.0px,#9c033c 290.8px,#9c0020 362.5px,#9c000b 462.1px)"></div><div style="left:45.7px;top:390px;width:456.2px;height:2px;background:linear-gradient(90deg,#00549c 0.0px,#00439c 105.6px,#44389c 153.4px,#9c2999 203.2px,#9c1364 239.0px,#9c023d 290.8px,#9c0021 360.5px,#9c000c 456.1px)"></div><div style="left:46.3px;top:392px;width:450.1px;height:2px;background:linear-gradient(90deg,#00529c 0.0px,#01419c 105.6px,#48359c 155.4px,#9b289c 201.2px,#9c1266 237.0px,#9c013f 286.8px,#9c0023 354.5px,#9c000d 450.1px)"></div><div style="left:47.0px;top:394px;width:444.1px;height:2px;background:linear-gradient(90deg,#00509c 0.0px,#003f9c 103.6px,#47339c 153.4px,#9c259b 201.2px,#9c1066 237.0px,#9c003f 286.8px,#9c0023 352.5px,#9c000f 444.1px)"></div><div style="left:47.7px;top:396px;width:438.1px;height:2px;background:linear-gradient(90deg,#004e9c 0.0px,#003d9c 101.6px,#45329c 151.3px,#9c239a 201.1px,#9c0e66 237.0px,#9c0040 284.8px,#9c0024 350.5px,#9c0010 438.1px)"></div><div style="left:48.4px;top:398px;width:432.1px;height:2px;background:linear-gradient(90deg,#004d9c 0.0px,#013b9c 101.5px,#462f9c 151.3px,#9c2099 201.1px,#9c0d68 234.9px,#9c0042 282.7px,#9c0026 346.4px,#9c0011 432.0px)"></div><div style="left:49.1px;top:400px;width:426.0px;height:2px;background:linear-gradient(90deg,#004b9c 0.0px,#00399c 99.5px,#482d9c 151.3px,#9c1f9c 199.1px,#9c0c6a 232.9px,#9c0043 280.7px,#9c0027 342.4px,#9c0013 426.0px)"></div><div style="left:49.8px;top:402px;width:420.0px;height:2px;background:linear-gradient(90deg,#00499c 0.0px,#00389c 98.0px,#442c9c 148.0px,#9c1c99 200.0px,#9c0a68 234.0px,#9c0043 280.0px,#9c0028 340.0px,#9c0014 419.9px)"></div><div style="left:50.6px;top:404px;width:413.9px;height:2px;background:linear-gradient(90deg,#00479c 0.0px,#00369c 96.0px,#462a9c 148.0px,#9c1a9b 197.9px,#9c096a 231.9px,#9c0046 275.9px,#9c002a 335.9px,#9c0015 413.9px)"></div><div style="left:51.3px;top:406px;width:407.8px;height:2px;background:linear-gradient(90deg,#00469c 0.0px,#01349c 96.0px,#47289c 147.9px,#9c189a 197.9px,#9c086c 229.9px,#9c0047 273.9px,#9c002b 331.8px,#9c0017 407.8px)"></div><div style="left:52.1px;top:408px;width:401.7px;height:2px;background:linear-gradient(90deg,#00449c 0.0px,#00339c 93.9px,#46269c 145.9px,#9c1699 197.9px,#9c076b 229.8px,#9c0047 273.8px,#9c002c 329.8px,#9c0018 401.7px)"></div><div style="left:52.8px;top:410px;width:395.6px;height:2px;background:linear-gradient(90deg,#00429c 0.0px,#00319c 91.9px,#47249c 145.9px,#9b149c 195.8px,#9c066d 227.8px,#9c004a 269.7px,#9c002f 323.7px,#9c001a 395.6px)"></div><div style="left:53.6px;top:412px;width:389.5px;height:2px;background:linear-gradient(90deg,#00419c 0.0px,#012f9c 91.9px,#49229c 145.8px,#9c129b 195.8px,#9c046d 227.7px,#9c004b 267.7px,#9c0030 321.6px,#9c001b 389.5px)"></div><div style="left:54.4px;top:414px;width:383.4px;height:2px;background:linear-gradient(90deg,#003f9c 0.0px,#012e9c 89.9px,#47209c 143.8px,#9c109a 195.7px,#9c036f 225.7px,#9c004c 265.6px,#9c0031 317.5px,#9c001d 383.4px)"></div><div style="left:55.1px;top:416px;width:377.3px;height:2px;background:linear-gradient(90deg,#003d9c 0.0px,#002c9c 87.8px,#491e9c 143.7px,#9b0f9c 193.6px,#9c016e 225.6px,#9c004e 263.5px,#9c0033 313.4px,#9c001f 377.3px)"></div><div style="left:55.9px;top:418px;width:371.2px;height:2px;background:linear-gradient(90deg,#003c9c 0.0px,#002b9c 85.8px,#471d9c 141.7px,#9c0c9b 193.6px,#9c0070 223.5px,#9c004f 261.4px,#9c0035 309.3px,#9c0020 371.2px)"></div><div style="left:56.7px;top:420px;width:365.0px;height:2px;background:linear-gradient(90deg,#003a9c 0.0px,#01299c 85.8px,#461c9c 139.6px,#9c0a9a 193.5px,#9c0070 223.4px,#9c0050 259.3px,#9c0037 305.2px,#9c0022 365.0px)"></div><div style="left:57.6px;top:422px;width:358.9px;height:2px;background:linear-gradient(90deg,#00389c 0.0px,#01289c 83.7px,#451a9c 137.6px,#9c0899 193.4px,#9c0072 221.3px,#9c0052 257.2px,#9c0038 303.0px,#9c0024 358.9px)"></div><div style="left:58.4px;top:424px;width:352.7px;height:2px;background:linear-gradient(90deg,#00379c 0.0px,#00279c 81.7px,#49189c 139.5px,#9c079b 191.3px,#9c0073 219.2px,#9c0054 253.1px,#9c003b 296.9px,#9c0026 352.7px)"></div><div style="left:59.2px;top:426px;width:346.5px;height:2px;background:linear-gradient(90deg,#00359c 0.0px,#02259c 81.7px,#47169c 137.4px,#9c059a 191.2px,#9c0073 219.1px,#9c0054 252.9px,#9c0028 346.5px)"></div><div style="left:60.0px;top:428px;width:340.4px;height:2px;background:linear-gradient(90deg,#00349c 0.0px,#01249c 79.6px,#46159c 135.4px,#9c0399 191.1px,#9c0075 217.0px,#9c0056 250.8px,#9c002a 340.4px)"></div><div style="left:60.9px;top:430px;width:334.2px;height:2px;background:linear-gradient(90deg,#00329c 0.0px,#00229c 77.6px,#4a139c 137.3px,#9b029c 189.0px,#9c0077 214.8px,#9c0058 246.7px,#9c002c 334.2px)"></div><div style="left:61.7px;top:432px;width:328.0px;height:2px;background:linear-gradient(90deg,#00309c 0.0px,#00219c 76.0px,#4a119c 136.0px,#9b009c 188.0px,#9c0077 214.0px,#9c005a 244.0px,#9c002e 328.0px)"></div><div style="left:62.6px;top:434px;width:321.8px;height:2px;background:linear-gradient(90deg,#002f9c 0.0px,#00209c 74.0px,#49109c 133.9px,#9c009b 187.9px,#9c0079 211.9px,#9c005c 241.8px,#9c0031 321.8px)"></div><div style="left:63.5px;top:436px;width:315.6px;height:2px;background:linear-gradient(90deg,#002d9c 0.0px,#011e9c 73.9px,#480f9c 131.8px,#9c009a 187.8px,#9c0078 211.7px,#9c005d 239.7px,#9c0033 315.6px)"></div><div style="left:64.4px;top:438px;width:309.4px;height:2px;background:linear-gradient(90deg,#002c9c 0.0px,#011d9c 71.9px,#490d9c 131.7px,#9b009c 185.6px,#9c007a 209.6px,#9c005f 237.5px,#9c0036 309.4px)"></div><div style="left:65.2px;top:440px;width:303.2px;height:2px;background:linear-gradient(90deg,#002a9c 0.0px,#001c9c 69.8px,#480c9c 129.6px,#9c009b 185.5px,#9c0062 233.3px,#9c0038 303.1px)"></div><div style="left:66.1px;top:442px;width:296.9px;height:2px;background:linear-gradient(90deg,#00299c 0.0px,#001a9c 67.8px,#490a9c 129.5px,#9a009c 183.3px,#9c0063 231.2px,#9c003b 296.9px)"></div><div style="left:67.0px;top:444px;width:290.7px;height:2px;background:linear-gradient(90deg,#00279c 0.0px,#02199c 67.7px,#4a089c 129.4px,#9b009c 183.2px,#9c0065 229.0px,#9c003e 290.7px)"></div><div style="left:67.9px;top:446px;width:284.5px;height:2px;background:linear-gradient(90deg,#00269c 0.0px,#01189c 65.6px,#49079c 127.3px,#9c009b 183.0px,#9c0066 226.8px,#9c0040 284.4px)"></div><div style="left:68.8px;top:448px;width:278.2px;height:2px;background:linear-gradient(90deg,#00249c 0.0px,#01179c 63.6px,#48069c 125.2px,#99009c 180.8px,#9c0068 224.5px,#9c0043 278.2px)"></div><div style="left:69.8px;top:450px;width:272.0px;height:2px;background:linear-gradient(90deg,#00239c 0.0px,#01159c 62.0px,#48059c 124.0px,#99009c 180.0px,#9c006a 222.0px,#9c0047 271.9px)"></div><div style="left:70.7px;top:452px;width:265.7px;height:2px;background:linear-gradient(90deg,#00219c 0.0px,#00149c 59.9px,#49039c 123.9px,#9a009c 179.8px,#9c006d 217.7px,#9c004a 265.7px)"></div><div style="left:71.6px;top:454px;width:259.4px;height:2px;background:linear-gradient(90deg,#00209c 0.0px,#02139c 59.9px,#4b019c 123.7px,#9b009c 179.6px,#9c006f 215.5px,#9c004d 259.4px)"></div><div style="left:72.6px;top:456px;width:253.1px;height:2px;background:linear-gradient(90deg,#001e9c 0.0px,#01129c 57.8px,#49009c 121.6px,#99009c 177.4px,#9c0070 213.3px,#9c0051 253.1px)"></div><div style="left:73.5px;top:458px;width:246.8px;height:2px;background:linear-gradient(90deg,#001d9c 0.0px,#01119c 55.7px,#48009c 119.4px,#9a009c 177.2px,#9c0074 209.0px,#9c0055 246.8px)"></div><div style="left:74.5px;top:460px;width:240.5px;height:2px;background:linear-gradient(90deg,#001b9c 0.0px,#00109c 53.7px,#4a009c 119.3px,#9b009c 176.9px,#9c0076 206.7px,#9c0059 240.5px)"></div><div style="left:75.5px;top:462px;width:234.2px;height:2px;background:linear-gradient(90deg,#001a9c 0.0px,#000f9c 51.6px,#49009c 117.1px,#99009c 174.7px,#9c0077 204.4px,#9c005d 234.2px)"></div><div style="left:76.5px;top:464px;width:227.9px;height:2px;background:linear-gradient(90deg,#00199c 0.0px,#000d9c 50.0px,#49009c 115.9px,#99009c 173.9px,#9c0061 227.9px)"></div><div style="left:77.5px;top:466px;width:221.5px;height:2px;background:linear-gradient(90deg,#00179c 0.0px,#020c9c 49.9px,#4a009c 115.8px,#9a009c 173.6px,#9c0066 221.5px)"></div><div style="left:78.5px;top:468px;width:215.2px;height:2px;background:linear-gradient(90deg,#00169c 0.0px,#010b9c 47.8px,#49009c 113.6px,#9b009c 173.3px,#9c006b 215.1px)"></div><div style="left:79.6px;top:470px;width:208.8px;height:2px;background:linear-gradient(90deg,#00149c 0.0px,#010a9c 45.7px,#48009c 111.3px,#99009c 171.0px,#9c0070 208.8px)"></div><div style="left:80.6px;top:472px;width:202.4px;height:2px;background:linear-gradient(90deg,#00139c 0.0px,#01099c 43.7px,#49009c 111.1px,#9a009c 170.6px,#9c0076 202.4px)"></div><div style="left:81.7px;top:474px;width:195.9px;height:2px;background:linear-gradient(90deg,#00129c 0.0px,#01089c 42.0px,#49009c 110.0px,#9a009c 169.9px,#9c007b 195.9px)"></div><div style="left:82.8px;top:476px;width:189.5px;height:2px;background:linear-gradient(90deg,#00109c 0.0px,#00079c 39.9px,#48009c 107.7px,#9b009c 169.5px,#9c0082 189.5px)"></div><div style="left:84.0px;top:478px;width:183.0px;height:2px;background:linear-gradient(90deg,#000f9c 0.0px,#00069c 37.8px,#47009c 105.4px,#99009c 167.1px,#9c0088 183.0px)"></div><div style="left:85.1px;top:480px;width:176.5px;height:2px;background:linear-gradient(90deg,#000d9c 0.0px,#00059c 35.7px,#49009c 105.1px,#9a009c 166.6px,#9c008f 176.5px)"></div><div style="left:86.3px;top:482px;width:170.0px;height:2px;background:linear-gradient(90deg,#000c9c 0.0px,#00049c 34.0px,#42009c 98.0px,#9c0097 170.0px)"></div><div style="left:87.6px;top:484px;width:163.4px;height:2px;background:linear-gradient(90deg,#000b9c 0.0px,#06029c 37.9px,#4a009c 103.6px,#98009c 163.4px)"></div><div style="left:88.8px;top:486px;width:156.8px;height:2px;background:linear-gradient(90deg,#00099c 0.0px,#03019c 33.8px,#47009c 99.3px,#91009c 156.8px)"></div><div style="left:90.1px;top:488px;width:150.2px;height:2px;background:linear-gradient(90deg,#00089c 0.0px,#01019c 29.7px,#42009c 92.9px,#89009c 150.2px)"></div><div style="left:91.4px;top:490px;width:143.6px;height:2px;background:linear-gradient(90deg,#00069c 0.0px,#02009c 27.9px,#3e009c 87.7px,#82009c 143.5px)"></div><div style="left:92.8px;top:492px;width:136.9px;height:2px;background:linear-gradient(90deg,#00059c 0.0px,#02009c 25.8px,#3b009c 83.3px,#7b009c 136.8px)"></div><div style="left:94.2px;top:494px;width:130.1px;height:2px;background:linear-gradient(90deg,#00049c 0.0px,#02009c 23.7px,#38009c 78.9px,#74009c 130.1px)"></div><div style="left:95.6px;top:496px;width:123.3px;height:2px;background:linear-gradient(90deg,#00029c 0.0px,#00009c 19.9px,#6d009c 123.3px)"></div><div style="left:97.1px;top:498px;width:116.5px;height:2px;background:linear-gradient(90deg,#00019c 0.0px,#00009c 17.8px,#67009c 116.5px)"></div><div style="left:98.7px;top:500px;width:109.6px;height:2px;background:linear-gradient(90deg,#00009c 0.0px,#01009c 15.9px,#60009c 109.6px)"></div><div style="left:100.4px;top:502px;width:102.6px;height:2px;background:linear-gradient(90deg,#00009c 0.0px,#03009c 15.8px,#5a009c 102.6px)"></div><div style="left:102.1px;top:504px;width:95.5px;height:2px;background:linear-gradient(90deg,#00009c 0.0px,#07009c 17.9px,#54009c 95.5px)"></div><div style="left:104.0px;top:506px;width:88.2px;height:2px;background:linear-gradient(90deg,#00009c 0.0px,#0a009c 19.6px,#4f009c 88.2px)"></div><div style="left:106.1px;top:508px;width:80.9px;height:2px;background:linear-gradient(90deg,#00009c 0.0px,#10009c 23.7px,#49009c 80.9px)"></div><div style="left:108.3px;top:510px;width:73.3px;height:2px;background:linear-gradient(90deg,#00009c 0.0px,#44009c 73.3px)"></div><div style="left:110.6px;top:512px;width:65.7px;height:2px;background:linear-gradient(90deg,#01009c 0.0px,#3e009c 65.7px)"></div><div style="left:113.1px;top:514px;width:57.9px;height:2px;background:linear-gradient(90deg,#03009c 0.0px,#39009c 57.8px)"></div><div style="left:115.7px;top:516px;width:49.9px;height:2px;background:linear-gradient(90deg,#06009c 0.0px,#34009c 49.8px)"></div><div style="left:118.5px;top:518px;width:41.7px;height:2px;background:linear-gradient(90deg,#09009c 0.0px,#2f009c 41.7px)"></div><div style="left:121.4px;top:520px;width:33.5px;height:2px;background:linear-gradient(90deg,#0c009c 0.0px,#2b009c 33.5px)"></div><div style="left:124.2px;top:522px;width:25.4px;height:2px;background:linear-gradient(90deg,#0f009c 0.0px,#26009c 25.3px)"></div><div style="left:127.0px;top:524px;width:17.3px;height:2px;background:linear-gradient(90deg,#12009c 0.0px,#21009c 17.3px)"></div><div style="left:131.5px;top:526px;width:7.4px;height:2px;background:linear-gradient(90deg,#16009c 0.0px,#1d009c 7.4px)"></div></div>
<div style="left:1054px;top:54px;width:655px;height:530px;clip-path:polygon(498.10px 322.42px,233.75px 153.00px,117.12px 491.85px)"><div style="left:229.1px;top:154px;width:11.8px;height:2px;background:linear-gradient(90deg,#00ff03 0.0px,#0cff00 11.8px)"></div><div style="left:228.4px;top:156px;width:15.6px;height:2px;background:linear-gradient(90deg,#00ff05 0.0px,#11ff00 15.6px)"></div><div style="left:227.7px;top:158px;width:19.4px;height:2px;background:linear-gradient(90deg,#00ff06 0.0px,#18ff00 19.4px)"></div><div style="left:227.0px;top:160px;width:23.2px;height:2px;background:linear-gradient(90deg,#00ff08 0.0px,#1eff00 23.2px)"></div><div style="left:226.3px;top:162px;width:27.0px;height:2px;background:linear-gradient(90deg,#00ff09 0.0px,#00ff08 3.9px,#24ff00 27.0px)"></div><div style="left:225.6px;top:164px;width:30.9px;height:2px;background:linear-gradient(90deg,#00ff0b 0.0px,#00ff09 3.9px,#2bff00 30.8px)"></div><div style="left:224.9px;top:166px;width:34.7px;height:2px;background:linear-gradient(90deg,#00ff0c 0.0px,#03ff0a 5.8px,#31ff00 34.7px)"></div><div style="left:224.2px;top:168px;width:38.5px;height:2px;background:linear-gradient(90deg,#00ff0e 0.0px,#03ff0c 5.8px,#38ff00 38.5px)"></div><div style="left:223.6px;top:170px;width:42.3px;height:2px;background:linear-gradient(90deg,#00ff10 0.0px,#03ff0d 5.8px,#3fff00 42.3px)"></div><div style="left:222.9px;top:172px;width:46.1px;height:2px;background:linear-gradient(90deg,#00ff11 0.0px,#03ff0f 5.8px,#46ff00 46.1px)"></div><div style="left:222.2px;top:174px;width:49.9px;height:2px;background:linear-gradient(90deg,#00ff13 0.0px,#00ff12 4.0px,#4eff00 49.9px)"></div><div style="left:221.5px;top:176px;width:53.7px;height:2px;background:linear-gradient(90deg,#00ff15 0.0px,#03ff12 6.0px,#55ff00 53.7px)"></div><div style="left:220.8px;top:178px;width:57.5px;height:2px;background:linear-gradient(90deg,#00ff17 0.0px,#09ff13 9.9px,#5dff00 57.5px)"></div><div style="left:220.1px;top:180px;width:61.3px;height:2px;background:linear-gradient(90deg,#00ff18 0.0px,#10ff13 13.9px,#65ff00 61.3px)"></div><div style="left:219.4px;top:182px;width:65.1px;height:2px;background:linear-gradient(90deg,#00ff1a 0.0px,#00ff19 4.0px,#17ff13 17.8px,#6dff00 65.1px)"></div><div style="left:218.7px;top:184px;width:68.9px;height:2px;background:linear-gradient(90deg,#00ff1c 0.0px,#00ff1a 3.9px,#1dff13 21.7px,#76ff00 68.9px)"></div><div style="left:218.0px;top:186px;width:72.8px;height:2px;background:linear-gradient(90deg,#00ff1e 0.0px,#00ff1c 3.9px,#21ff14 23.6px,#7fff00 72.7px)"></div><div style="left:217.4px;top:188px;width:76.6px;height:2px;background:linear-gradient(90deg,#00ff20 0.0px,#00ff1e 3.9px,#28ff15 27.5px,#88ff00 76.6px)"></div><div style="left:216.7px;top:190px;width:80.4px;height:2px;background:linear-gradient(90deg,#00ff21 0.0px,#00ff20 3.9px,#2cff16 29.4px,#91ff00 80.4px)"></div><div style="left:216.0px;top:192px;width:84.2px;height:2px;background:linear-gradient(90deg,#00ff23 0.0px,#00ff22 3.9px,#33ff16 33.3px,#9bff00 84.2px)"></div><div style="left:215.3px;top:194px;width:88.0px;height:2px;background:linear-gradient(90deg,#00ff25 0.0px,#00ff24 4.0px,#39ff17 36.0px,#a5ff00 88.0px)"></div><div style="left:214.6px;top:196px;width:91.8px;height:2px;background:linear-gradient(90deg,#00ff27 0.0px,#00ff26 4.0px,#3dff18 37.9px,#afff00 91.8px)"></div><div style="left:213.9px;top:198px;width:95.6px;height:2px;background:linear-gradient(90deg,#00ff29 0.0px,#00ff28 4.0px,#45ff18 41.8px,#b9ff00 95.6px)"></div><div style="left:213.2px;top:200px;width:99.4px;height:2px;background:linear-gradient(90deg,#00ff2b 0.0px,#00ff2a 4.0px,#49ff19 43.7px,#c4ff00 99.4px)"></div><div style="left:212.5px;top:202px;width:103.2px;height:2px;background:linear-gradient(90deg,#00ff2d 0.0px,#00ff2c 4.0px,#4dff1b 45.7px,#d0ff00 103.2px)"></div><div style="left:211.9px;top:204px;width:107.0px;height:2px;background:linear-gradient(90deg,#00ff2f 0.0px,#03ff2d 6.0px,#56ff1b 49.6px,#dbff00 107.0px)"></div><div style="left:211.2px;top:206px;width:110.8px;height:2px;background:linear-gradient(90deg,#00ff31 0.0px,#03ff2f 5.9px,#5aff1c 51.5px,#e7ff00 110.8px)"></div><div style="left:210.5px;top:208px;width:114.6px;height:2px;background:linear-gradient(90deg,#00ff34 0.0px,#0aff30 9.9px,#5fff1e 53.4px,#f4ff00 114.6px)"></div><div style="left:209.8px;top:210px;width:118.5px;height:2px;background:linear-gradient(90deg,#00ff36 0.0px,#0aff32 9.9px,#64ff1f 55.3px,#fffd00 118.4px)"></div><div style="left:209.1px;top:212px;width:122.3px;height:2px;background:linear-gradient(90deg,#00ff38 0.0px,#03ff36 5.9px,#50ff26 45.4px,#a4ff14 82.8px,#fdff01 116.3px,#fff100 122.3px)"></div><div style="left:208.4px;top:214px;width:126.1px;height:2px;background:linear-gradient(90deg,#00ff3a 0.0px,#0eff36 11.8px,#65ff24 55.2px,#afff14 86.7px,#ffff04 116.2px,#ffe500 126.1px)"></div><div style="left:207.7px;top:216px;width:129.9px;height:2px;background:linear-gradient(90deg,#00ff3c 0.0px,#0bff39 10.0px,#64ff26 54.0px,#afff17 85.9px,#fbff07 113.9px,#ffda00 129.9px)"></div><div style="left:207.0px;top:218px;width:133.7px;height:2px;background:linear-gradient(90deg,#00ff3f 0.0px,#0bff3b 10.0px,#64ff29 53.9px,#b0ff19 85.8px,#fdff0a 113.7px,#ffcf00 133.7px)"></div><div style="left:206.3px;top:220px;width:137.5px;height:2px;background:linear-gradient(90deg,#00ff41 0.0px,#0bff3d 10.0px,#65ff2b 53.8px,#b1ff1c 85.7px,#feff0c 113.6px,#ffc500 137.5px)"></div><div style="left:205.7px;top:222px;width:141.3px;height:2px;background:linear-gradient(90deg,#00ff43 0.0px,#07ff40 8.0px,#61ff2f 51.8px,#aeff1f 83.6px,#fbff10 111.5px,#ffbc00 141.3px)"></div><div style="left:205.0px;top:224px;width:145.1px;height:2px;background:linear-gradient(90deg,#00ff46 0.0px,#07ff43 8.0px,#62ff31 51.7px,#afff22 83.5px,#fdff13 111.3px,#ffb300 145.1px)"></div><div style="left:204.3px;top:226px;width:148.9px;height:2px;background:linear-gradient(90deg,#00ff48 0.0px,#07ff45 8.0px,#62ff34 51.6px,#b0ff25 83.4px,#ffff15 111.2px,#ffd109 129.1px,#ffab00 148.9px)"></div><div style="left:203.6px;top:228px;width:152.7px;height:2px;background:linear-gradient(90deg,#00ff4a 0.0px,#07ff48 7.9px,#63ff36 51.6px,#fffd18 111.1px,#ffcb0a 130.9px,#ffa300 152.7px)"></div><div style="left:202.9px;top:230px;width:156.5px;height:2px;background:linear-gradient(90deg,#00ff4d 0.0px,#08ff4a 7.9px,#64ff39 51.5px,#aeff2b 81.2px,#fdff1c 109.0px,#ffc50b 132.8px,#ff9c00 156.5px)"></div><div style="left:202.2px;top:232px;width:160.4px;height:2px;background:linear-gradient(90deg,#00ff4f 0.0px,#0bff4c 9.9px,#65ff3b 51.5px,#afff2e 81.2px,#ffff1f 108.9px,#ffc30d 132.6px,#ff9400 160.3px)"></div><div style="left:201.5px;top:234px;width:164.2px;height:2px;background:linear-gradient(90deg,#00ff52 0.0px,#08ff4f 7.9px,#61ff3f 49.5px,#fffd21 108.8px,#ffbd0d 134.5px,#ff8e00 164.2px)"></div><div style="left:200.8px;top:236px;width:168.0px;height:2px;background:linear-gradient(90deg,#00ff55 0.0px,#08ff52 8.0px,#63ff42 50.0px,#fffd25 108.0px,#ffbd10 134.0px,#ff8700 168.0px)"></div><div style="left:200.2px;top:238px;width:171.8px;height:2px;background:linear-gradient(90deg,#00ff57 0.0px,#08ff55 8.0px,#63ff44 49.9px,#abff38 77.9px,#fdff29 105.9px,#ffb711 135.8px,#ff8100 171.8px)"></div><div style="left:199.5px;top:240px;width:175.6px;height:2px;background:linear-gradient(90deg,#00ff5a 0.0px,#08ff57 8.0px,#64ff47 49.9px,#acff3b 77.8px,#ffff2c 105.8px,#ffb513 135.7px,#ff7b00 175.6px)"></div><div style="left:198.8px;top:242px;width:179.4px;height:2px;background:linear-gradient(90deg,#00ff5d 0.0px,#04ff5b 6.0px,#60ff4b 47.8px,#fffc2f 105.6px,#ffd621 119.6px,#ffb013 137.5px,#ff7500 179.4px)"></div><div style="left:198.1px;top:244px;width:183.2px;height:2px;background:linear-gradient(90deg,#00ff5f 0.0px,#04ff5d 6.0px,#61ff4e 47.8px,#aaff42 75.7px,#fdff34 103.6px,#ffd423 119.5px,#ffae15 137.4px,#ff7000 183.2px)"></div><div style="left:197.4px;top:246px;width:187.0px;height:2px;background:linear-gradient(90deg,#00ff62 0.0px,#04ff60 6.0px,#62ff51 47.8px,#abff45 75.6px,#fffe37 103.5px,#ffd226 119.4px,#ffa916 139.3px,#ff6b00 187.0px)"></div><div style="left:196.7px;top:248px;width:190.8px;height:2px;background:linear-gradient(90deg,#00ff65 0.0px,#04ff63 6.0px,#5eff55 45.7px,#fffc39 103.4px,#ffcb26 121.3px,#ffa417 141.1px,#ff6600 190.8px)"></div><div style="left:196.0px;top:250px;width:194.6px;height:2px;background:linear-gradient(90deg,#00ff68 0.0px,#04ff66 6.0px,#63ff57 47.7px,#aeff4b 75.5px,#feff3e 101.3px,#ffce2a 119.2px,#ffa219 141.0px,#ff800b 164.8px,#ff6100 194.6px)"></div><div style="left:195.3px;top:252px;width:198.4px;height:2px;background:linear-gradient(90deg,#00ff6b 0.0px,#04ff69 6.0px,#5fff5b 45.6px,#aaff4f 73.4px,#fffe42 101.2px,#ffcc2d 119.1px,#ffa01b 140.9px,#ff7c0c 166.7px,#ff5c00 198.4px)"></div><div style="left:194.6px;top:254px;width:202.3px;height:2px;background:linear-gradient(90deg,#00ff6e 0.0px,#04ff6c 6.0px,#5bff5f 43.6px,#fffb44 101.1px,#ffc52d 121.0px,#ff9b1b 142.8px,#ff760b 170.5px,#ff5800 202.2px)"></div><div style="left:194.0px;top:256px;width:206.1px;height:2px;background:linear-gradient(90deg,#00ff71 0.0px,#04ff6f 6.0px,#61ff61 45.6px,#adff56 73.3px,#ffff4a 99.1px,#ffc731 118.9px,#ff991d 142.7px,#ff740d 170.4px,#ff5400 206.1px)"></div><div style="left:193.3px;top:258px;width:209.9px;height:2px;background:linear-gradient(90deg,#00ff74 0.0px,#04ff72 6.0px,#63ff65 46.0px,#abff5a 72.0px,#feff4e 97.9px,#ffc333 119.9px,#ff961e 143.9px,#ff6f0d 173.9px,#ff5000 209.9px)"></div><div style="left:192.6px;top:260px;width:213.7px;height:2px;background:linear-gradient(90deg,#00ff77 0.0px,#00ff76 4.0px,#5eff69 43.9px,#a6ff5e 69.9px,#fffe51 97.9px,#ffc537 117.8px,#ff9420 143.8px,#ff6c0e 175.7px,#ff4c00 213.7px)"></div><div style="left:191.9px;top:262px;width:217.5px;height:2px;background:linear-gradient(90deg,#00ff7b 0.0px,#00ff79 4.0px,#5aff6d 41.9px,#fffb54 97.8px,#ffbf37 119.7px,#ff8f21 145.7px,#ff680e 177.6px,#ff4800 217.5px)"></div><div style="left:191.2px;top:264px;width:221.3px;height:2px;background:linear-gradient(90deg,#00ff7e 0.0px,#00ff7d 4.0px,#60ff70 43.9px,#a9ff66 69.8px,#feff5a 95.7px,#ffc13c 117.6px,#ff8e23 145.5px,#ff650f 179.4px,#ff4400 221.3px)"></div><div style="left:190.5px;top:266px;width:225.1px;height:2px;background:linear-gradient(90deg,#00ff81 0.0px,#04ff80 6.0px,#61ff73 43.8px,#fffd5e 95.6px,#ffbf3e 117.5px,#ff8c25 145.4px,#ff620f 181.3px,#ff4100 225.1px)"></div><div style="left:189.8px;top:268px;width:228.9px;height:2px;background:linear-gradient(90deg,#00ff85 0.0px,#00ff84 4.0px,#5cff78 41.8px,#fffb61 95.5px,#ffb93e 119.4px,#ff8725 147.3px,#ff5e10 183.1px,#ff3d00 228.9px)"></div><div style="left:189.1px;top:270px;width:232.7px;height:2px;background:linear-gradient(90deg,#00ff88 0.0px,#04ff86 6.0px,#62ff7b 43.8px,#aeff71 69.6px,#ffff67 93.5px,#ffbb43 117.4px,#ff8627 147.2px,#ff5b11 185.0px,#ff3a00 232.7px)"></div><div style="left:188.4px;top:272px;width:236.5px;height:2px;background:linear-gradient(90deg,#00ff8c 0.0px,#00ff8b 4.0px,#5eff7f 41.7px,#fffc6a 93.4px,#ffb945 117.3px,#ff8127 149.1px,#ff5811 186.8px,#ff3700 236.5px)"></div><div style="left:187.8px;top:274px;width:240.3px;height:2px;background:linear-gradient(90deg,#00ff8f 0.0px,#05ff8e 6.0px,#5fff83 41.7px,#acff7a 67.5px,#fdff70 91.4px,#ffb748 117.2px,#ff7f29 149.0px,#ff5512 188.7px,#ff3400 240.3px)"></div><div style="left:187.1px;top:276px;width:244.2px;height:2px;background:linear-gradient(90deg,#00ff93 0.0px,#05ff91 6.0px,#60ff87 41.7px,#a7ff7f 65.5px,#fffe74 91.3px,#ffb44a 117.1px,#ff7e2b 148.9px,#ff5212 190.6px,#ff3100 244.1px)"></div><div style="left:186.4px;top:278px;width:248.0px;height:2px;background:linear-gradient(90deg,#00ff97 0.0px,#00ff96 4.0px,#62ff8b 42.0px,#aaff83 66.0px,#feff7a 90.0px,#ffb54e 116.0px,#ff7b2c 150.0px,#ff5013 192.0px,#ff2e00 248.0px)"></div><div style="left:185.7px;top:280px;width:251.8px;height:2px;background:linear-gradient(90deg,#00ff9a 0.0px,#00ff99 4.0px,#5dff90 40.0px,#a6ff88 63.9px,#fffd7d 89.9px,#ffb250 115.9px,#ff792e 149.9px,#ff4d13 193.8px,#ff2b00 251.8px)"></div><div style="left:185.0px;top:282px;width:255.6px;height:2px;background:linear-gradient(90deg,#00ff9e 0.0px,#00ff9d 4.0px,#58ff94 37.9px,#fffa81 89.9px,#ffb053 115.8px,#ff752e 151.7px,#ff4913 197.7px,#ff2800 255.6px)"></div><div style="left:184.3px;top:284px;width:259.4px;height:2px;background:linear-gradient(90deg,#00ffa2 0.0px,#00ffa1 4.0px,#5fff98 39.9px,#a9ff91 63.9px,#ffff89 87.8px,#ffd76f 99.8px,#ffb358 113.7px,#ff7632 149.6px,#ff4714 197.5px,#ff2500 259.4px)"></div><div style="left:183.6px;top:286px;width:263.2px;height:2px;background:linear-gradient(90deg,#00ffa6 0.0px,#00ffa5 4.0px,#5aff9d 37.9px,#fffc8c 87.7px,#ffd472 99.7px,#ffac58 115.6px,#ff7132 151.5px,#ff4515 199.4px,#ff2300 263.2px)"></div><div style="left:182.9px;top:288px;width:267.0px;height:2px;background:linear-gradient(90deg,#00ffaa 0.0px,#00ffa9 4.0px,#55ffa2 35.9px,#a6ff9b 61.8px,#fdff93 85.7px,#fff98f 87.7px,#ffd275 99.6px,#ffaa5a 115.6px,#ff7034 151.4px,#ff4215 201.2px,#ff2000 267.0px)"></div><div style="left:182.3px;top:290px;width:270.8px;height:2px;background:linear-gradient(90deg,#00ffae 0.0px,#00ffae 4.0px,#5cffa6 37.8px,#a8ffa0 61.7px,#fffe98 85.6px,#ffd57c 97.6px,#ffac60 113.5px,#ff6e36 151.3px,#ff4016 203.1px,#ff1e00 270.8px)"></div><div style="left:181.6px;top:292px;width:274.6px;height:2px;background:linear-gradient(90deg,#00ffb3 0.0px,#00ffb2 4.0px,#57ffab 35.8px,#fffb9b 85.6px,#ffd27e 97.5px,#ffaa62 113.4px,#ff6a36 153.2px,#ff3d16 205.0px,#ff1c00 274.6px)"></div><div style="left:180.9px;top:294px;width:278.4px;height:2px;background:linear-gradient(90deg,#00ffb7 0.0px,#00ffb6 4.0px,#5dffaf 37.8px,#abffa9 61.7px,#feffa3 83.5px,#ffd081 97.5px,#ffa765 113.4px,#ff6b39 151.1px,#ff3c18 204.8px,#ff1900 278.4px)"></div><div style="left:180.2px;top:296px;width:282.2px;height:2px;background:linear-gradient(90deg,#00ffbb 0.0px,#00ffbb 4.0px,#58ffb5 35.8px,#9fffb0 57.6px,#fffda7 83.5px,#ffcd84 97.4px,#ffa567 113.3px,#ff6739 153.0px,#ff3918 206.7px,#ff1700 282.2px)"></div><div style="left:179.5px;top:298px;width:286.1px;height:2px;background:linear-gradient(90deg,#00ffc0 0.0px,#00ffbf 4.0px,#53ffba 33.8px,#fffaab 83.4px,#ffca87 97.3px,#ffa36a 113.2px,#ff653b 153.0px,#ff3719 208.6px,#ff1500 286.0px)"></div><div style="left:178.8px;top:300px;width:289.9px;height:2px;background:linear-gradient(90deg,#00ffc5 0.0px,#00ffc4 4.0px,#5bffbe 36.0px,#fffcb3 82.0px,#ffcc8d 96.0px,#ffa36e 111.9px,#ff7f52 131.9px,#ff623c 153.9px,#ff3418 211.9px,#ff1300 289.8px)"></div><div style="left:178.1px;top:302px;width:293.7px;height:2px;background:linear-gradient(90deg,#00ffc9 0.0px,#00ffc9 4.0px,#56ffc4 34.0px,#a6ffbf 57.9px,#fcffbb 79.9px,#fff9b6 81.9px,#ffc990 95.9px,#ffa171 111.9px,#ff7d54 131.9px,#ff613e 153.8px,#ff321a 211.8px,#ff1100 293.7px)"></div><div style="left:177.4px;top:304px;width:297.5px;height:2px;background:linear-gradient(90deg,#00ffce 0.0px,#00ffce 4.0px,#5dffc9 35.9px,#a8ffc5 57.9px,#fffec0 79.9px,#ffcc98 93.8px,#ffa377 109.8px,#ff7e59 129.8px,#ff5f40 153.7px,#ff301a 213.6px,#ff0f00 297.5px)"></div><div style="left:176.7px;top:306px;width:301.3px;height:2px;background:linear-gradient(90deg,#00ffd3 0.0px,#00ffd2 4.0px,#58ffcf 33.9px,#fffbc4 79.8px,#ffc99b 93.8px,#ffa179 109.7px,#ff7c5b 129.7px,#ff5d42 153.6px,#ff2e1a 215.5px,#ff0d00 301.3px)"></div><div style="left:176.1px;top:308px;width:305.1px;height:2px;background:linear-gradient(90deg,#00ffd8 0.0px,#00ffd8 4.0px,#59ffd4 33.9px,#a5ffd1 55.8px,#feffce 77.8px,#ffc79e 93.7px,#ff9e7c 109.7px,#ff7a5d 129.6px,#ff5c43 153.5px,#ff2d1c 215.4px,#ff0b00 305.1px)"></div><div style="left:175.4px;top:310px;width:308.9px;height:2px;background:linear-gradient(90deg,#00ffdd 0.0px,#00ffdd 4.0px,#5affda 33.9px,#a7ffd7 55.8px,#fffdd2 77.7px,#ffcaa6 91.7px,#ff9c7e 109.6px,#ff785f 129.5px,#ff5a45 153.5px,#ff2a1c 217.2px,#ff0900 308.9px)"></div><div style="left:174.7px;top:312px;width:312.7px;height:2px;background:linear-gradient(90deg,#00ffe2 0.0px,#00ffe2 4.0px,#54ffe0 31.9px,#a1ffdd 53.8px,#fbffdb 75.7px,#fffad6 77.7px,#ffc7a9 91.6px,#ff9a81 109.6px,#ff7662 129.5px,#ff5645 155.4px,#ff271c 221.1px,#ff0700 312.7px)"></div><div style="left:174.0px;top:314px;width:316.5px;height:2px;background:linear-gradient(90deg,#00ffe8 0.0px,#00ffe7 4.0px,#5cffe5 33.8px,#abffe4 55.7px,#ffffe2 75.7px,#ffcab2 89.6px,#ff9b87 107.5px,#ff7766 127.4px,#ff5749 153.3px,#ff261d 221.0px,#ff0500 316.5px)"></div><div style="left:173.3px;top:316px;width:320.3px;height:2px;background:linear-gradient(90deg,#00ffed 0.0px,#00ffed 4.0px,#56ffec 31.8px,#9effea 51.7px,#fffce6 75.6px,#ffc7b5 89.5px,#ff998a 107.4px,#ff7266 129.3px,#ff5349 155.2px,#ff241d 222.8px,#ff0400 320.3px)"></div><div style="left:172.6px;top:318px;width:324.1px;height:2px;background:linear-gradient(90deg,#00fff3 0.0px,#00fff3 4.0px,#50fff2 29.8px,#a0fff1 51.7px,#fdfff0 73.6px,#fff8e9 75.6px,#ffc5b8 89.5px,#ff978d 107.4px,#ff7068 129.3px,#ff514b 155.1px,#ff221e 224.7px,#ff0200 324.1px)"></div><div style="left:171.9px;top:320px;width:327.9px;height:2px;background:linear-gradient(90deg,#00fff8 0.0px,#00fff8 4.0px,#52fff8 30.0px,#9bfff8 50.0px,#fffcf4 74.0px,#ffc6c0 88.0px,#ff9792 106.0px,#ff706c 128.0px,#ff514d 154.0px,#ff211f 224.0px,#ff0000 327.9px)"></div><div style="left:171.2px;top:322px;width:329.6px;height:2px;background:linear-gradient(90deg,#00fffe 0.0px,#00fffe 4.0px,#53fffe 30.0px,#a5ffff 51.9px,#fdffff 71.9px,#fff8f8 73.9px,#ffbdbd 89.9px,#ff9191 107.9px,#ff6b6b 129.8px,#ff4d4d 155.8px,#ff1e1f 227.7px,#ff0000 329.6px)"></div><div style="left:170.6px;top:324px;width:325.8px;height:2px;background:linear-gradient(90deg,#00faff 0.0px,#00faff 4.0px,#52f9ff 30.0px,#9bf8ff 50.0px,#fff4fc 74.0px,#ffc0c6 87.9px,#ff9297 105.9px,#ff6c70 127.9px,#ff4d51 153.9px,#ff1f21 223.8px,#ff0001 325.7px)"></div><div style="left:169.9px;top:326px;width:321.9px;height:2px;background:linear-gradient(90deg,#00f4ff 0.0px,#00f4ff 4.0px,#58f3ff 32.0px,#a9f1ff 54.0px,#fff0ff 74.0px,#ffbdc9 88.0px,#ff8f9a 106.0px,#ff6a72 128.0px,#ff4b53 154.0px,#ff1e24 222.0px,#ff0003 321.9px)"></div><div style="left:169.2px;top:328px;width:318.1px;height:2px;background:linear-gradient(90deg,#00eeff 0.0px,#00eeff 4.0px,#56ecff 31.8px,#ffe6fc 75.6px,#ffb5c8 89.5px,#ff8a99 107.4px,#ff6975 127.3px,#ff4a55 153.1px,#ff1e25 220.7px,#ff0005 318.1px)"></div><div style="left:168.5px;top:330px;width:314.3px;height:2px;background:linear-gradient(90deg,#00e9ff 0.0px,#00e9ff 4.0px,#5ce6ff 33.8px,#abe4ff 55.7px,#ffe2ff 75.6px,#ffb2ca 89.5px,#ff879c 107.4px,#ff6677 127.3px,#ff4957 153.2px,#ff1d27 218.8px,#ff0006 314.3px)"></div><div style="left:167.8px;top:332px;width:310.5px;height:2px;background:linear-gradient(90deg,#00e3ff 0.0px,#00e3ff 4.0px,#54e0ff 31.9px,#a2deff 53.8px,#fcdbff 75.6px,#ffd6fa 77.6px,#ffa9c7 91.6px,#ff819a 109.5px,#ff6176 129.4px,#ff4759 153.3px,#ff1d2a 217.0px,#ff0008 310.5px)"></div><div style="left:167.1px;top:334px;width:306.7px;height:2px;background:linear-gradient(90deg,#00deff 0.0px,#00deff 4.0px,#5adaff 33.9px,#a7d8ff 55.8px,#ffd3fd 77.7px,#ffa6ca 91.6px,#ff7e9c 109.5px,#ff5f78 129.5px,#ff455a 153.4px,#ff1c2b 217.1px,#ff000a 306.7px)"></div><div style="left:166.4px;top:336px;width:302.9px;height:2px;background:linear-gradient(90deg,#00d9ff 0.0px,#00d9ff 4.0px,#59d5ff 33.9px,#a5d2ff 55.8px,#feceff 77.7px,#ff9ec7 93.7px,#ff7c9e 109.6px,#ff5d7a 129.5px,#ff435c 153.4px,#ff1b2d 215.2px,#ff000c 302.9px)"></div><div style="left:165.7px;top:338px;width:299.1px;height:2px;background:linear-gradient(90deg,#00d4ff 0.0px,#00d4ff 4.0px,#58cfff 33.9px,#ffc4fb 79.8px,#ff9bc9 93.7px,#ff79a1 109.7px,#ff5b7c 129.6px,#ff415d 153.5px,#ff1b2f 213.4px,#ff000e 299.1px)"></div><div style="left:165.0px;top:340px;width:295.3px;height:2px;background:linear-gradient(90deg,#00cfff 0.0px,#00cfff 4.0px,#5dcaff 35.9px,#a9c6ff 57.9px,#ffc0fe 79.8px,#ff98cc 93.8px,#ff76a3 109.7px,#ff597e 129.7px,#ff4161 151.6px,#ff1b32 211.5px,#ff0010 295.3px)"></div><div style="left:164.4px;top:342px;width:291.5px;height:2px;background:linear-gradient(90deg,#00caff 0.0px,#00caff 4.0px,#56c5ff 33.9px,#a7c0ff 57.9px,#fdbbff 79.9px,#ffb6f9 81.9px,#ff90c9 95.8px,#ff70a1 111.8px,#ff547d 131.8px,#ff3e61 153.7px,#ff1933 211.6px,#ff0012 291.5px)"></div><div style="left:163.7px;top:344px;width:287.7px;height:2px;background:linear-gradient(90deg,#00c6ff 0.0px,#00c5ff 4.0px,#5bbfff 36.0px,#ffb3fc 81.9px,#ff8dcb 95.9px,#ff6ea3 111.9px,#ff3e65 151.8px,#ff1935 209.8px,#ff0014 287.7px)"></div><div style="left:163.0px;top:346px;width:283.9px;height:2px;background:linear-gradient(90deg,#00c1ff 0.0px,#00c0ff 4.0px,#5abaff 36.0px,#aab5ff 60.0px,#ffafff 82.0px,#ff8ace 96.0px,#ff6ba5 111.9px,#ff3c66 151.9px,#ff1837 207.9px,#ff0016 283.9px)"></div><div style="left:162.3px;top:348px;width:280.1px;height:2px;background:linear-gradient(90deg,#00bcff 0.0px,#00bcff 4.0px,#59b5ff 35.8px,#a0b0ff 57.6px,#ffa7fd 83.4px,#ff84cd 97.3px,#ff67a5 113.2px,#ff3967 152.9px,#ff183a 206.6px,#ff0018 280.0px)"></div><div style="left:161.6px;top:350px;width:276.2px;height:2px;background:linear-gradient(90deg,#00b8ff 0.0px,#00b7ff 4.0px,#5eb0ff 37.8px,#acaaff 61.6px,#fea3ff 83.5px,#ff81cf 97.4px,#ff64a7 113.3px,#ff396b 151.0px,#ff173c 204.7px,#ff001a 276.2px)"></div><div style="left:160.9px;top:352px;width:272.4px;height:2px;background:linear-gradient(90deg,#00b4ff 0.0px,#00b3ff 4.0px,#57acff 35.8px,#ff9bfb 85.5px,#ff7ed2 97.4px,#ff62aa 113.4px,#ff376d 151.1px,#ff173f 202.8px,#ff001d 272.4px)"></div><div style="left:160.2px;top:354px;width:268.6px;height:2px;background:linear-gradient(90deg,#00afff 0.0px,#00aeff 4.0px,#5ca6ff 37.8px,#a8a0ff 61.7px,#ff97fe 85.6px,#ff7bd5 97.5px,#ff5fac 113.4px,#ff356e 151.2px,#ff1641 201.0px,#ff001f 268.6px)"></div><div style="left:159.5px;top:356px;width:264.8px;height:2px;background:linear-gradient(90deg,#00abff 0.0px,#00aaff 4.0px,#61a1ff 39.8px,#ad9aff 63.7px,#fd93ff 85.6px,#ff74d1 99.6px,#ff5dae 113.5px,#ff3370 151.3px,#ff1644 199.1px,#ff0021 264.8px)"></div><div style="left:158.8px;top:358px;width:261.0px;height:2px;background:linear-gradient(90deg,#00a7ff 0.0px,#00a6ff 4.0px,#5a9dff 37.9px,#ff8cfc 87.7px,#ff71d4 99.6px,#ff57ac 115.6px,#ff3171 151.4px,#ff1445 199.2px,#ff0024 261.0px)"></div><div style="left:158.2px;top:360px;width:257.2px;height:2px;background:linear-gradient(90deg,#00a3ff 0.0px,#00a2ff 4.0px,#5f98ff 39.9px,#a991ff 63.8px,#ff88ff 87.7px,#ff6fd6 99.7px,#ff58b2 113.6px,#ff3176 149.5px,#ff1549 195.4px,#ff0027 257.2px)"></div><div style="left:157.5px;top:362px;width:253.4px;height:2px;background:linear-gradient(90deg,#009fff 0.0px,#009eff 4.0px,#5895ff 37.9px,#ff80fa 89.8px,#ff53b0 115.7px,#ff2f77 149.6px,#ff134a 195.5px,#ff0029 253.4px)"></div><div style="left:156.8px;top:364px;width:249.6px;height:2px;background:linear-gradient(90deg,#009bff 0.0px,#009aff 4.0px,#5d90ff 39.9px,#ff7dfd 89.9px,#ff50b2 115.8px,#ff2d79 149.7px,#ff134d 193.7px,#ff002c 249.6px)"></div><div style="left:156.1px;top:366px;width:245.8px;height:2px;background:linear-gradient(90deg,#0097ff 0.0px,#0096ff 4.0px,#628bff 42.0px,#ab83ff 65.9px,#fe7aff 89.9px,#ff4eb4 115.9px,#ff2d7d 147.9px,#ff1351 189.8px,#ff002f 245.8px)"></div><div style="left:155.4px;top:368px;width:242.0px;height:2px;background:linear-gradient(90deg,#0093ff 0.0px,#0092ff 4.0px,#5b88ff 40.0px,#ff72fb 92.0px,#ff4bb7 116.0px,#ff2b7f 148.0px,#ff1253 190.0px,#ff0032 242.0px)"></div><div style="left:154.7px;top:370px;width:238.2px;height:2px;background:linear-gradient(90deg,#0090ff 0.0px,#058eff 6.0px,#5f83ff 41.7px,#ac7aff 67.5px,#fd70ff 91.3px,#ff47b6 117.1px,#ff2a82 146.9px,#ff1257 186.5px,#ff0035 238.1px)"></div><div style="left:154.0px;top:372px;width:234.3px;height:2px;background:linear-gradient(90deg,#008cff 0.0px,#048aff 6.0px,#5e7fff 41.7px,#ff6afc 93.3px,#ff45b9 117.2px,#ff2884 147.0px,#ff115a 184.7px,#ff0038 234.3px)"></div><div style="left:153.3px;top:374px;width:230.5px;height:2px;background:linear-gradient(90deg,#0089ff 0.0px,#0487ff 6.0px,#637bff 43.7px,#af71ff 69.6px,#ff67ff 93.4px,#ff43bb 117.3px,#ff2686 147.1px,#ff105b 184.8px,#ff003b 230.5px)"></div><div style="left:152.7px;top:376px;width:226.7px;height:2px;background:linear-gradient(90deg,#0085ff 0.0px,#0084ff 4.0px,#5778ff 39.8px,#ff60fa 95.5px,#ff3eb8 119.3px,#ff2487 147.2px,#ff0f5f 183.0px,#ff003f 226.7px)"></div><div style="left:152.0px;top:378px;width:222.9px;height:2px;background:linear-gradient(90deg,#0082ff 0.0px,#0081ff 4.0px,#5c74ff 41.8px,#a56aff 67.7px,#ff5dfd 95.5px,#ff3ebf 117.4px,#ff248c 145.3px,#ff1064 179.1px,#ff0042 222.9px)"></div><div style="left:151.3px;top:380px;width:219.1px;height:2px;background:linear-gradient(90deg,#007eff 0.0px,#047dff 6.0px,#6070ff 43.8px,#aa66ff 69.7px,#ff5aff 95.6px,#ff3bc1 117.5px,#ff228d 145.4px,#ff0e65 179.3px,#ff0046 219.1px)"></div><div style="left:150.6px;top:382px;width:215.3px;height:2px;background:linear-gradient(90deg,#007bff 0.0px,#007aff 4.0px,#5a6dff 41.9px,#ff54fb 97.7px,#ff37be 119.6px,#ff208f 145.5px,#ff0d68 177.4px,#ff0049 215.3px)"></div><div style="left:149.9px;top:384px;width:211.5px;height:2px;background:linear-gradient(90deg,#0078ff 0.0px,#0077ff 4.0px,#5f69ff 43.9px,#a75eff 69.8px,#ff51fe 97.8px,#ff36c5 117.7px,#ff2094 143.7px,#ff0e6e 173.6px,#ff004d 211.5px)"></div><div style="left:149.2px;top:386px;width:207.7px;height:2px;background:linear-gradient(90deg,#0075ff 0.0px,#0473ff 6.0px,#6365ff 45.9px,#ab5aff 71.9px,#fe4dff 97.9px,#ff34c7 117.8px,#ff1f99 141.8px,#ff0d71 171.7px,#ff0051 207.7px)"></div><div style="left:148.5px;top:388px;width:203.9px;height:2px;background:linear-gradient(90deg,#0071ff 0.0px,#0070ff 4.0px,#5d62ff 44.0px,#ff48fc 99.9px,#ff30c4 119.9px,#ff1d9a 141.9px,#ff0c75 169.9px,#ff0055 203.9px)"></div><div style="left:147.8px;top:390px;width:200.1px;height:2px;background:linear-gradient(90deg,#006eff 0.0px,#046cff 6.0px,#605eff 45.6px,#ac52ff 73.3px,#fd46ff 99.0px,#ff2ec9 118.8px,#ff1c9e 140.6px,#ff0c78 168.4px,#ff005a 200.1px)"></div><div style="left:147.1px;top:392px;width:196.3px;height:2px;background:linear-gradient(90deg,#006bff 0.0px,#0469ff 6.0px,#5f5bff 45.6px,#ff41fd 101.1px,#ff2ccb 118.9px,#ff1aa0 140.7px,#ff0b7c 166.5px,#ff005e 196.2px)"></div><div style="left:146.5px;top:394px;width:192.4px;height:2px;background:linear-gradient(90deg,#0068ff 0.0px,#0466ff 6.0px,#6457ff 47.6px,#af4bff 75.4px,#fe3eff 101.2px,#ff2acd 119.0px,#ff19a5 138.9px,#ff0b82 162.7px,#ff0063 192.4px)"></div><div style="left:145.8px;top:396px;width:188.6px;height:2px;background:linear-gradient(90deg,#0065ff 0.0px,#0463ff 6.0px,#5e55ff 45.7px,#ff39fb 103.3px,#ff27cf 119.1px,#ff17a7 139.0px,#ff0068 188.6px)"></div><div style="left:145.1px;top:398px;width:184.8px;height:2px;background:linear-gradient(90deg,#0063ff 0.0px,#0460ff 6.0px,#6251ff 47.7px,#ff36fe 103.3px,#ff25d1 119.2px,#ff17ac 137.1px,#ff006d 184.8px)"></div><div style="left:144.4px;top:400px;width:181.0px;height:2px;background:linear-gradient(90deg,#0060ff 0.0px,#045eff 6.0px,#614eff 47.7px,#aa41ff 75.6px,#fe33ff 103.4px,#ff22d3 119.4px,#ff15ae 137.3px,#ff0072 181.0px)"></div><div style="left:143.7px;top:402px;width:177.2px;height:2px;background:linear-gradient(90deg,#005dff 0.0px,#045bff 6.0px,#604bff 47.8px,#ff2efc 105.5px,#ff20d5 119.5px,#ff13af 137.4px,#ff0077 177.2px)"></div><div style="left:143.0px;top:404px;width:173.4px;height:2px;background:linear-gradient(90deg,#005aff 0.0px,#0857ff 8.0px,#6547ff 49.8px,#ff2bfe 105.6px,#ff12b5 135.5px,#ff007d 173.4px)"></div><div style="left:142.3px;top:406px;width:169.6px;height:2px;background:linear-gradient(90deg,#0057ff 0.0px,#0855ff 8.0px,#6444ff 49.9px,#ab37ff 77.8px,#fe28ff 105.7px,#ff11ba 133.7px,#ff0083 169.6px)"></div><div style="left:141.6px;top:408px;width:165.8px;height:2px;background:linear-gradient(90deg,#0055ff 0.0px,#0453ff 6.0px,#5e42ff 47.9px,#ff24fc 107.9px,#ff0fbc 133.8px,#ff008a 165.8px)"></div><div style="left:141.0px;top:410px;width:162.0px;height:2px;background:linear-gradient(90deg,#0052ff 0.0px,#084fff 8.0px,#623eff 50.0px,#ae30ff 80.0px,#ff21fe 108.0px,#ff0ec2 132.0px,#ff0090 162.0px)"></div><div style="left:140.3px;top:412px;width:158.2px;height:2px;background:linear-gradient(90deg,#004fff 0.0px,#084dff 7.9px,#653bff 51.4px,#af2dff 81.1px,#ff1eff 108.7px,#ff0dc7 130.5px,#ff0097 158.2px)"></div><div style="left:139.6px;top:414px;width:154.4px;height:2px;background:linear-gradient(90deg,#004dff 0.0px,#084aff 7.9px,#6438ff 51.5px,#ae2aff 81.1px,#fd1bff 108.8px,#ff0bc9 130.6px,#ff009e 154.3px)"></div><div style="left:138.9px;top:416px;width:150.5px;height:2px;background:linear-gradient(90deg,#004aff 0.0px,#0448ff 6.0px,#5f37ff 49.5px,#ff17fd 110.9px,#ff0acf 128.8px,#ff00a6 150.5px)"></div><div style="left:138.2px;top:418px;width:146.7px;height:2px;background:linear-gradient(90deg,#0048ff 0.0px,#0745ff 7.9px,#6333ff 51.6px,#ab25ff 81.3px,#ff14ff 111.0px,#ff09d5 126.9px,#ff00ae 146.7px)"></div><div style="left:137.5px;top:420px;width:142.9px;height:2px;background:linear-gradient(90deg,#0046ff 0.0px,#0743ff 7.9px,#6231ff 51.6px,#af21ff 83.4px,#fd12ff 111.2px,#ff00b7 142.9px)"></div><div style="left:136.8px;top:422px;width:139.1px;height:2px;background:linear-gradient(90deg,#0043ff 0.0px,#0740ff 8.0px,#612eff 51.7px,#ae1fff 83.5px,#fb0fff 111.3px,#ff00c0 139.1px)"></div><div style="left:136.1px;top:424px;width:135.3px;height:2px;background:linear-gradient(90deg,#0041ff 0.0px,#0b3dff 10.0px,#652bff 53.7px,#b21bff 85.6px,#ff0bff 113.4px,#ff00c9 135.3px)"></div><div style="left:135.4px;top:426px;width:131.5px;height:2px;background:linear-gradient(90deg,#003eff 0.0px,#0b3bff 10.0px,#6428ff 53.8px,#b118ff 85.7px,#fd09ff 113.6px,#ff00d3 131.5px)"></div><div style="left:134.8px;top:428px;width:127.7px;height:2px;background:linear-gradient(90deg,#003cff 0.0px,#0b38ff 10.0px,#6426ff 53.9px,#af16ff 85.8px,#fb06ff 113.7px,#ff00de 127.7px)"></div><div style="left:134.1px;top:430px;width:123.9px;height:2px;background:linear-gradient(90deg,#003aff 0.0px,#0b36ff 10.0px,#6323ff 54.0px,#ae14ff 85.9px,#ff02ff 115.9px,#ff00e9 123.9px)"></div><div style="left:133.4px;top:432px;width:120.1px;height:2px;background:linear-gradient(90deg,#0038ff 0.0px,#0335ff 5.9px,#5823ff 49.2px,#aa12ff 84.6px,#fe00ff 116.1px,#ff00f5 120.1px)"></div><div style="left:132.7px;top:434px;width:116.3px;height:2px;background:linear-gradient(90deg,#0035ff 0.0px,#0a32ff 9.9px,#641eff 55.2px,#ad0fff 86.7px,#fc00ff 116.3px)"></div><div style="left:132.0px;top:436px;width:112.5px;height:2px;background:linear-gradient(90deg,#0033ff 0.0px,#0730ff 7.9px,#5f1dff 53.3px,#ef00ff 112.4px)"></div><div style="left:131.3px;top:438px;width:108.7px;height:2px;background:linear-gradient(90deg,#0031ff 0.0px,#032fff 5.9px,#571cff 49.4px,#e200ff 108.6px)"></div><div style="left:130.6px;top:440px;width:104.8px;height:2px;background:linear-gradient(90deg,#002fff 0.0px,#032dff 5.9px,#521bff 47.5px,#d600ff 104.8px)"></div><div style="left:129.9px;top:442px;width:101.0px;height:2px;background:linear-gradient(90deg,#002dff 0.0px,#032bff 6.0px,#4d1aff 45.6px,#cb00ff 101.0px)"></div><div style="left:129.2px;top:444px;width:97.2px;height:2px;background:linear-gradient(90deg,#002bff 0.0px,#0029ff 4.0px,#451aff 41.7px,#c000ff 97.2px)"></div><div style="left:128.6px;top:446px;width:93.4px;height:2px;background:linear-gradient(90deg,#0029ff 0.0px,#0027ff 4.0px,#4118ff 39.8px,#b500ff 93.4px)"></div><div style="left:127.9px;top:448px;width:89.6px;height:2px;background:linear-gradient(90deg,#0027ff 0.0px,#0025ff 4.0px,#3918ff 35.8px,#aa00ff 89.6px)"></div><div style="left:127.2px;top:450px;width:85.8px;height:2px;background:linear-gradient(90deg,#0025ff 0.0px,#0023ff 4.0px,#3517ff 33.9px,#a000ff 85.8px)"></div><div style="left:126.5px;top:452px;width:82.0px;height:2px;background:linear-gradient(90deg,#0023ff 0.0px,#0021ff 4.0px,#2d17ff 30.0px,#9600ff 82.0px)"></div><div style="left:125.8px;top:454px;width:78.2px;height:2px;background:linear-gradient(90deg,#0021ff 0.0px,#001fff 3.9px,#2816ff 27.4px,#8d00ff 78.2px)"></div><div style="left:125.1px;top:456px;width:74.4px;height:2px;background:linear-gradient(90deg,#001fff 0.0px,#001eff 3.9px,#2515ff 25.4px,#8400ff 74.4px)"></div><div style="left:124.4px;top:458px;width:70.6px;height:2px;background:linear-gradient(90deg,#001dff 0.0px,#001cff 3.9px,#1e14ff 21.6px,#7b00ff 70.6px)"></div><div style="left:123.7px;top:460px;width:66.8px;height:2px;background:linear-gradient(90deg,#001bff 0.0px,#001aff 3.9px,#1a13ff 19.6px,#7200ff 66.7px)"></div><div style="left:123.1px;top:462px;width:62.9px;height:2px;background:linear-gradient(90deg,#001aff 0.0px,#1313ff 15.7px,#6a00ff 62.9px)"></div><div style="left:122.4px;top:464px;width:59.1px;height:2px;background:linear-gradient(90deg,#0018ff 0.0px,#0d13ff 11.8px,#6100ff 59.1px)"></div><div style="left:121.7px;top:466px;width:55.3px;height:2px;background:linear-gradient(90deg,#0016ff 0.0px,#0613ff 7.9px,#5900ff 55.3px)"></div><div style="left:121.0px;top:468px;width:51.5px;height:2px;background:linear-gradient(90deg,#0014ff 0.0px,#0312ff 6.0px,#5200ff 51.5px)"></div><div style="left:120.3px;top:470px;width:47.7px;height:2px;background:linear-gradient(90deg,#0012ff 0.0px,#0011ff 4.0px,#4a00ff 47.7px)"></div><div style="left:119.6px;top:472px;width:43.9px;height:2px;background:linear-gradient(90deg,#0011ff 0.0px,#000fff 4.0px,#4300ff 43.9px)"></div><div style="left:118.9px;top:474px;width:40.1px;height:2px;background:linear-gradient(90deg,#000fff 0.0px,#030dff 5.7px,#3c00ff 40.1px)"></div><div style="left:118.2px;top:476px;width:36.3px;height:2px;background:linear-gradient(90deg,#000dff 0.0px,#030bff 5.7px,#3500ff 36.3px)"></div><div style="left:117.5px;top:478px;width:32.5px;height:2px;background:linear-gradient(90deg,#000cff 0.0px,#0309ff 5.7px,#2e00ff 32.5px)"></div><div style="left:116.9px;top:480px;width:28.7px;height:2px;background:linear-gradient(90deg,#000aff 0.0px,#0009ff 3.8px,#2700ff 28.7px)"></div><div style="left:116.2px;top:482px;width:24.9px;height:2px;background:linear-gradient(90deg,#0008ff 0.0px,#0007ff 3.8px,#2100ff 24.8px)"></div><div style="left:115.5px;top:484px;width:21.0px;height:2px;background:linear-gradient(90deg,#0007ff 0.0px,#1a00ff 21.0px)"></div><div style="left:114.8px;top:486px;width:17.2px;height:2px;background:linear-gradient(90deg,#0005ff 0.0px,#1400ff 17.2px)"></div><div style="left:114.1px;top:488px;width:13.4px;height:2px;background:linear-gradient(90deg,#0004ff 0.0px,#0e00ff 13.4px)"></div><div style="left:113.4px;top:490px;width:9.6px;height:2px;background:linear-gradient(90deg,#0002ff 0.0px,#0800ff 9.6px)"></div></div>
<div style="left:1509px;top:57px;width:198px;height:165px;background:#2a2a2a"></div>
<div style="left:1511px;top:62px;width:191px;height:157px;background:#999"></div>
<div style="left:1512.5px;top:63.5px;width:188px;height:154px;overflow:hidden"><div style="left:0;top:0px;width:188px;height:2px;background:linear-gradient(90deg,#00829c 0.0px,#007f9c 120.0px,#1e7e9c 188.0px)"></div><div style="left:0;top:2px;width:188px;height:2px;background:linear-gradient(90deg,#00819c 0.0px,#007f9c 120.0px,#1e7d9c 188.0px)"></div><div style="left:0;top:4px;width:188px;height:2px;background:linear-gradient(90deg,#00809c 0.0px,#007e9c 118.0px,#1e7c9c 188.0px)"></div><div style="left:0;top:6px;width:188px;height:2px;background:linear-gradient(90deg,#00809c 0.0px,#007d9c 118.0px,#1e7b9c 188.0px)"></div><div style="left:0;top:8px;width:188px;height:2px;background:linear-gradient(90deg,#007f9c 0.0px,#007c9c 118.0px,#1f7b9c 188.0px)"></div><div style="left:0;top:10px;width:188px;height:2px;background:linear-gradient(90deg,#007e9c 0.0px,#007c9c 116.0px,#1f7a9c 188.0px)"></div><div style="left:0;top:12px;width:188px;height:2px;background:linear-gradient(90deg,#007d9c 0.0px,#007b9c 116.0px,#1f799c 188.0px)"></div><div style="left:0;top:14px;width:188px;height:2px;background:linear-gradient(90deg,#007d9c 0.0px,#007a9c 116.0px,#1f789c 188.0px)"></div><div style="left:0;top:16px;width:188px;height:2px;background:linear-gradient(90deg,#007c9c 0.0px,#00799c 114.0px,#1f779c 188.0px)"></div><div style="left:0;top:18px;width:188px;height:2px;background:linear-gradient(90deg,#007b9c 0.0px,#00799c 114.0px,#20779c 188.0px)"></div><div style="left:0;top:20px;width:188px;height:2px;background:linear-gradient(90deg,#007b9c 0.0px,#00789c 114.0px,#20769c 188.0px)"></div><div style="left:0;top:22px;width:188px;height:2px;background:linear-gradient(90deg,#007a9c 0.0px,#00779c 112.0px,#20759c 188.0px)"></div><div style="left:0;top:24px;width:188px;height:2px;background:linear-gradient(90deg,#00799c 0.0px,#00769c 112.0px,#20749c 188.0px)"></div><div style="left:0;top:26px;width:188px;height:2px;background:linear-gradient(90deg,#00789c 0.0px,#00769c 112.0px,#21739c 188.0px)"></div><div style="left:0;top:28px;width:188px;height:2px;background:linear-gradient(90deg,#00789c 0.0px,#00759c 110.0px,#21739c 188.0px)"></div><div style="left:0;top:30px;width:188px;height:2px;background:linear-gradient(90deg,#00779c 0.0px,#00749c 110.0px,#21729c 188.0px)"></div><div style="left:0;top:32px;width:188px;height:2px;background:linear-gradient(90deg,#00769c 0.0px,#00739c 110.0px,#21719c 188.0px)"></div><div style="left:0;top:34px;width:188px;height:2px;background:linear-gradient(90deg,#00769c 0.0px,#00739c 108.0px,#21709c 188.0px)"></div><div style="left:0;top:36px;width:188px;height:2px;background:linear-gradient(90deg,#00759c 0.0px,#00729c 108.0px,#22709c 188.0px)"></div><div style="left:0;top:38px;width:188px;height:2px;background:linear-gradient(90deg,#00749c 0.0px,#00719c 108.0px,#226f9c 188.0px)"></div><div style="left:0;top:40px;width:188px;height:2px;background:linear-gradient(90deg,#00749c 0.0px,#00719c 106.0px,#226e9c 188.0px)"></div><div style="left:0;top:42px;width:188px;height:2px;background:linear-gradient(90deg,#00739c 0.0px,#00709c 106.0px,#226d9c 188.0px)"></div><div style="left:0;top:44px;width:188px;height:2px;background:linear-gradient(90deg,#00729c 0.0px,#006f9c 106.0px,#226d9c 188.0px)"></div><div style="left:0;top:46px;width:188px;height:2px;background:linear-gradient(90deg,#00729c 0.0px,#006f9c 104.0px,#236c9c 188.0px)"></div><div style="left:0;top:48px;width:188px;height:2px;background:linear-gradient(90deg,#00719c 0.0px,#006e9c 104.0px,#236b9c 188.0px)"></div><div style="left:0;top:50px;width:188px;height:2px;background:linear-gradient(90deg,#00709c 0.0px,#006d9c 104.0px,#236a9c 188.0px)"></div><div style="left:0;top:52px;width:188px;height:2px;background:linear-gradient(90deg,#00709c 0.0px,#006d9c 102.0px,#236a9c 188.0px)"></div><div style="left:0;top:54px;width:188px;height:2px;background:linear-gradient(90deg,#006f9c 0.0px,#006c9c 102.0px,#24699c 188.0px)"></div><div style="left:0;top:56px;width:188px;height:2px;background:linear-gradient(90deg,#006e9c 0.0px,#006b9c 102.0px,#24689c 188.0px)"></div><div style="left:0;top:58px;width:188px;height:2px;background:linear-gradient(90deg,#006e9c 0.0px,#006b9c 100.0px,#24679c 188.0px)"></div><div style="left:0;top:60px;width:188px;height:2px;background:linear-gradient(90deg,#006d9c 0.0px,#006a9c 100.0px,#24679c 188.0px)"></div><div style="left:0;top:62px;width:188px;height:2px;background:linear-gradient(90deg,#006c9c 0.0px,#00699c 100.0px,#24669c 188.0px)"></div><div style="left:0;top:64px;width:188px;height:2px;background:linear-gradient(90deg,#006c9c 0.0px,#00699c 98.0px,#25659c 188.0px)"></div><div style="left:0;top:66px;width:188px;height:2px;background:linear-gradient(90deg,#006b9c 0.0px,#00689c 98.0px,#25649c 188.0px)"></div><div style="left:0;top:68px;width:188px;height:2px;background:linear-gradient(90deg,#006a9c 0.0px,#00679c 98.0px,#25649c 188.0px)"></div><div style="left:0;top:70px;width:188px;height:2px;background:linear-gradient(90deg,#006a9c 0.0px,#00679c 96.0px,#25639c 188.0px)"></div><div style="left:0;top:72px;width:188px;height:2px;background:linear-gradient(90deg,#00699c 0.0px,#00669c 96.0px,#25629c 188.0px)"></div><div style="left:0;top:74px;width:188px;height:2px;background:linear-gradient(90deg,#00689c 0.0px,#00659c 96.0px,#26629c 188.0px)"></div><div style="left:0;top:76px;width:188px;height:2px;background:linear-gradient(90deg,#00689c 0.0px,#00659c 94.0px,#26619c 188.0px)"></div><div style="left:0;top:78px;width:188px;height:2px;background:linear-gradient(90deg,#00679c 0.0px,#00649c 94.0px,#26609c 188.0px)"></div><div style="left:0;top:80px;width:188px;height:2px;background:linear-gradient(90deg,#00679c 0.0px,#00639c 94.0px,#26609c 188.0px)"></div><div style="left:0;top:82px;width:188px;height:2px;background:linear-gradient(90deg,#00669c 0.0px,#00639c 92.0px,#265f9c 188.0px)"></div><div style="left:0;top:84px;width:188px;height:2px;background:linear-gradient(90deg,#00659c 0.0px,#00629c 92.0px,#265e9c 188.0px)"></div><div style="left:0;top:86px;width:188px;height:2px;background:linear-gradient(90deg,#00659c 0.0px,#00619c 92.0px,#275d9c 188.0px)"></div><div style="left:0;top:88px;width:188px;height:2px;background:linear-gradient(90deg,#00649c 0.0px,#00619c 90.0px,#275d9c 188.0px)"></div><div style="left:0;top:90px;width:188px;height:2px;background:linear-gradient(90deg,#00639c 0.0px,#00609c 90.0px,#275c9c 188.0px)"></div><div style="left:0;top:92px;width:188px;height:2px;background:linear-gradient(90deg,#00639c 0.0px,#00609c 90.0px,#275b9c 188.0px)"></div><div style="left:0;top:94px;width:188px;height:2px;background:linear-gradient(90deg,#00629c 0.0px,#005f9c 88.0px,#275b9c 188.0px)"></div><div style="left:0;top:96px;width:188px;height:2px;background:linear-gradient(90deg,#00629c 0.0px,#005e9c 88.0px,#285a9c 188.0px)"></div><div style="left:0;top:98px;width:188px;height:2px;background:linear-gradient(90deg,#00619c 0.0px,#005e9c 88.0px,#28599c 188.0px)"></div><div style="left:0;top:100px;width:188px;height:2px;background:linear-gradient(90deg,#00609c 0.0px,#005d9c 86.0px,#28599c 188.0px)"></div><div style="left:0;top:102px;width:188px;height:2px;background:linear-gradient(90deg,#00609c 0.0px,#005d9c 86.0px,#28589c 188.0px)"></div><div style="left:0;top:104px;width:188px;height:2px;background:linear-gradient(90deg,#005f9c 0.0px,#005c9c 84.0px,#28579c 188.0px)"></div><div style="left:0;top:106px;width:188px;height:2px;background:linear-gradient(90deg,#005f9c 0.0px,#005b9c 84.0px,#29579c 188.0px)"></div><div style="left:0;top:108px;width:188px;height:2px;background:linear-gradient(90deg,#005e9c 0.0px,#005b9c 84.0px,#29569c 188.0px)"></div><div style="left:0;top:110px;width:188px;height:2px;background:linear-gradient(90deg,#005d9c 0.0px,#005a9c 82.0px,#29559c 188.0px)"></div><div style="left:0;top:112px;width:188px;height:2px;background:linear-gradient(90deg,#005d9c 0.0px,#005a9c 82.0px,#29559c 188.0px)"></div><div style="left:0;top:114px;width:188px;height:2px;background:linear-gradient(90deg,#005c9c 0.0px,#00599c 82.0px,#29549c 188.0px)"></div><div style="left:0;top:116px;width:188px;height:2px;background:linear-gradient(90deg,#005c9c 0.0px,#00589c 80.0px,#29549c 188.0px)"></div><div style="left:0;top:118px;width:188px;height:2px;background:linear-gradient(90deg,#005b9c 0.0px,#00589c 80.0px,#2a539c 188.0px)"></div><div style="left:0;top:120px;width:188px;height:2px;background:linear-gradient(90deg,#005b9c 0.0px,#00579c 80.0px,#2a529c 188.0px)"></div><div style="left:0;top:122px;width:188px;height:2px;background:linear-gradient(90deg,#005a9c 0.0px,#00579c 78.0px,#2a529c 188.0px)"></div><div style="left:0;top:124px;width:188px;height:2px;background:linear-gradient(90deg,#00599c 0.0px,#00569c 78.0px,#2a519c 188.0px)"></div><div style="left:0;top:126px;width:188px;height:2px;background:linear-gradient(90deg,#00599c 0.0px,#00569c 78.0px,#2a509c 188.0px)"></div><div style="left:0;top:128px;width:188px;height:2px;background:linear-gradient(90deg,#00589c 0.0px,#00559c 76.0px,#2b509c 188.0px)"></div><div style="left:0;top:130px;width:188px;height:2px;background:linear-gradient(90deg,#00589c 0.0px,#00549c 76.0px,#2b4f9c 188.0px)"></div><div style="left:0;top:132px;width:188px;height:2px;background:linear-gradient(90deg,#00579c 0.0px,#00549c 76.0px,#2b4e9c 188.0px)"></div><div style="left:0;top:134px;width:188px;height:2px;background:linear-gradient(90deg,#00569c 0.0px,#00539c 74.0px,#2b4e9c 188.0px)"></div><div style="left:0;top:136px;width:188px;height:2px;background:linear-gradient(90deg,#00569c 0.0px,#00539c 74.0px,#2b4d9c 188.0px)"></div><div style="left:0;top:138px;width:188px;height:2px;background:linear-gradient(90deg,#00559c 0.0px,#00529c 74.0px,#2b4d9c 188.0px)"></div><div style="left:0;top:140px;width:188px;height:2px;background:linear-gradient(90deg,#00559c 0.0px,#00529c 72.0px,#2c4c9c 188.0px)"></div><div style="left:0;top:142px;width:188px;height:2px;background:linear-gradient(90deg,#00549c 0.0px,#00519c 72.0px,#2c4b9c 188.0px)"></div><div style="left:0;top:144px;width:188px;height:2px;background:linear-gradient(90deg,#00549c 0.0px,#00509c 72.0px,#2c4b9c 188.0px)"></div><div style="left:0;top:146px;width:188px;height:2px;background:linear-gradient(90deg,#00539c 0.0px,#00509c 70.0px,#2c4a9c 188.0px)"></div><div style="left:0;top:148px;width:188px;height:2px;background:linear-gradient(90deg,#00539c 0.0px,#004f9c 70.0px,#2c4a9c 188.0px)"></div><div style="left:0;top:150px;width:188px;height:2px;background:linear-gradient(90deg,#00529c 0.0px,#004f9c 70.0px,#2c499c 188.0px)"></div><div style="left:0;top:152px;width:188px;height:2px;background:linear-gradient(90deg,#00519c 0.0px,#004e9c 68.0px,#2d489c 188.0px)"></div><div style="left:0;top:0;width:188px;height:154px;clip-path:polygon(1402.62px -67.70px,371.66px -728.46px,-83.18px 593.06px)"><div style="left:0;top:0px;width:188px;height:2px;background:linear-gradient(90deg,#00d5ff 0.0px,#00d1ff 120.0px,#31ceff 188.0px)"></div><div style="left:0;top:2px;width:188px;height:2px;background:linear-gradient(90deg,#00d4ff 0.0px,#00d0ff 120.0px,#31cdff 188.0px)"></div><div style="left:0;top:4px;width:188px;height:2px;background:linear-gradient(90deg,#00d2ff 0.0px,#00ceff 118.0px,#31ccff 188.0px)"></div><div style="left:0;top:6px;width:188px;height:2px;background:linear-gradient(90deg,#00d1ff 0.0px,#00cdff 118.0px,#32caff 188.0px)"></div><div style="left:0;top:8px;width:188px;height:2px;background:linear-gradient(90deg,#00d0ff 0.0px,#00ccff 118.0px,#32c9ff 188.0px)"></div><div style="left:0;top:10px;width:188px;height:2px;background:linear-gradient(90deg,#00cfff 0.0px,#00cbff 116.0px,#32c8ff 188.0px)"></div><div style="left:0;top:12px;width:188px;height:2px;background:linear-gradient(90deg,#00ceff 0.0px,#00c9ff 116.0px,#33c6ff 188.0px)"></div><div style="left:0;top:14px;width:188px;height:2px;background:linear-gradient(90deg,#00ccff 0.0px,#00c8ff 116.0px,#33c5ff 188.0px)"></div><div style="left:0;top:16px;width:188px;height:2px;background:linear-gradient(90deg,#00cbff 0.0px,#00c7ff 114.0px,#34c4ff 188.0px)"></div><div style="left:0;top:18px;width:188px;height:2px;background:linear-gradient(90deg,#00caff 0.0px,#00c6ff 114.0px,#34c2ff 188.0px)"></div><div style="left:0;top:20px;width:188px;height:2px;background:linear-gradient(90deg,#00c9ff 0.0px,#00c4ff 114.0px,#34c1ff 188.0px)"></div><div style="left:0;top:22px;width:188px;height:2px;background:linear-gradient(90deg,#00c8ff 0.0px,#00c3ff 112.0px,#35c0ff 188.0px)"></div><div style="left:0;top:24px;width:188px;height:2px;background:linear-gradient(90deg,#00c7ff 0.0px,#00c2ff 112.0px,#35bfff 188.0px)"></div><div style="left:0;top:26px;width:188px;height:2px;background:linear-gradient(90deg,#00c6ff 0.0px,#00c1ff 112.0px,#35bdff 188.0px)"></div><div style="left:0;top:28px;width:188px;height:2px;background:linear-gradient(90deg,#00c4ff 0.0px,#00c0ff 110.0px,#36bcff 188.0px)"></div><div style="left:0;top:30px;width:188px;height:2px;background:linear-gradient(90deg,#00c3ff 0.0px,#00bfff 110.0px,#36bbff 188.0px)"></div><div style="left:0;top:32px;width:188px;height:2px;background:linear-gradient(90deg,#00c2ff 0.0px,#00bdff 110.0px,#36b9ff 188.0px)"></div><div style="left:0;top:34px;width:188px;height:2px;background:linear-gradient(90deg,#00c1ff 0.0px,#00bcff 108.0px,#37b8ff 188.0px)"></div><div style="left:0;top:36px;width:188px;height:2px;background:linear-gradient(90deg,#00c0ff 0.0px,#00bbff 108.0px,#37b7ff 188.0px)"></div><div style="left:0;top:38px;width:188px;height:2px;background:linear-gradient(90deg,#00bfff 0.0px,#00baff 108.0px,#37b6ff 188.0px)"></div><div style="left:0;top:40px;width:188px;height:2px;background:linear-gradient(90deg,#00beff 0.0px,#00b9ff 106.0px,#38b4ff 188.0px)"></div><div style="left:0;top:42px;width:188px;height:2px;background:linear-gradient(90deg,#00bcff 0.0px,#00b8ff 106.0px,#38b3ff 188.0px)"></div><div style="left:0;top:44px;width:188px;height:2px;background:linear-gradient(90deg,#00bbff 0.0px,#00b6ff 106.0px,#39b2ff 188.0px)"></div><div style="left:0;top:46px;width:188px;height:2px;background:linear-gradient(90deg,#00baff 0.0px,#00b5ff 104.0px,#39b1ff 188.0px)"></div><div style="left:0;top:48px;width:188px;height:2px;background:linear-gradient(90deg,#00b9ff 0.0px,#00b4ff 104.0px,#39afff 188.0px)"></div><div style="left:0;top:50px;width:188px;height:2px;background:linear-gradient(90deg,#00b8ff 0.0px,#00b3ff 104.0px,#3aaeff 188.0px)"></div><div style="left:0;top:52px;width:188px;height:2px;background:linear-gradient(90deg,#00b7ff 0.0px,#00b2ff 102.0px,#3aadff 188.0px)"></div><div style="left:0;top:54px;width:188px;height:2px;background:linear-gradient(90deg,#00b6ff 0.0px,#00b1ff 102.0px,#3aacff 188.0px)"></div><div style="left:0;top:56px;width:188px;height:2px;background:linear-gradient(90deg,#00b5ff 0.0px,#00b0ff 102.0px,#3babff 188.0px)"></div><div style="left:0;top:58px;width:188px;height:2px;background:linear-gradient(90deg,#00b4ff 0.0px,#00afff 100.0px,#3ba9ff 188.0px)"></div><div style="left:0;top:60px;width:188px;height:2px;background:linear-gradient(90deg,#00b3ff 0.0px,#00adff 100.0px,#3ba8ff 188.0px)"></div><div style="left:0;top:62px;width:188px;height:2px;background:linear-gradient(90deg,#00b2ff 0.0px,#00acff 100.0px,#3ca7ff 188.0px)"></div><div style="left:0;top:64px;width:188px;height:2px;background:linear-gradient(90deg,#00b1ff 0.0px,#00abff 98.0px,#3ca6ff 188.0px)"></div><div style="left:0;top:66px;width:188px;height:2px;background:linear-gradient(90deg,#00b0ff 0.0px,#00aaff 98.0px,#3ca5ff 188.0px)"></div><div style="left:0;top:68px;width:188px;height:2px;background:linear-gradient(90deg,#00aeff 0.0px,#00a9ff 98.0px,#3da4ff 188.0px)"></div><div style="left:0;top:70px;width:188px;height:2px;background:linear-gradient(90deg,#00adff 0.0px,#00a8ff 96.0px,#3da2ff 188.0px)"></div><div style="left:0;top:72px;width:188px;height:2px;background:linear-gradient(90deg,#00acff 0.0px,#00a7ff 96.0px,#3da1ff 188.0px)"></div><div style="left:0;top:74px;width:188px;height:2px;background:linear-gradient(90deg,#00abff 0.0px,#01a6ff 96.0px,#3ea0ff 188.0px)"></div><div style="left:0;top:76px;width:188px;height:2px;background:linear-gradient(90deg,#00aaff 0.0px,#00a5ff 94.0px,#3e9fff 188.0px)"></div><div style="left:0;top:78px;width:188px;height:2px;background:linear-gradient(90deg,#00a9ff 0.0px,#00a4ff 94.0px,#3e9eff 188.0px)"></div><div style="left:0;top:80px;width:188px;height:2px;background:linear-gradient(90deg,#00a8ff 0.0px,#01a3ff 94.0px,#3e9dff 188.0px)"></div><div style="left:0;top:82px;width:188px;height:2px;background:linear-gradient(90deg,#00a7ff 0.0px,#00a2ff 92.0px,#3f9bff 188.0px)"></div><div style="left:0;top:84px;width:188px;height:2px;background:linear-gradient(90deg,#00a6ff 0.0px,#00a1ff 92.0px,#3f9aff 188.0px)"></div><div style="left:0;top:86px;width:188px;height:2px;background:linear-gradient(90deg,#00a5ff 0.0px,#01a0ff 92.0px,#3f99ff 188.0px)"></div><div style="left:0;top:88px;width:188px;height:2px;background:linear-gradient(90deg,#00a4ff 0.0px,#009fff 90.0px,#4098ff 188.0px)"></div><div style="left:0;top:90px;width:188px;height:2px;background:linear-gradient(90deg,#00a3ff 0.0px,#009eff 90.0px,#4097ff 188.0px)"></div><div style="left:0;top:92px;width:188px;height:2px;background:linear-gradient(90deg,#00a2ff 0.0px,#019dff 90.0px,#4096ff 188.0px)"></div><div style="left:0;top:94px;width:188px;height:2px;background:linear-gradient(90deg,#00a1ff 0.0px,#009cff 88.0px,#4195ff 188.0px)"></div><div style="left:0;top:96px;width:188px;height:2px;background:linear-gradient(90deg,#00a0ff 0.0px,#009bff 88.0px,#4194ff 188.0px)"></div><div style="left:0;top:98px;width:188px;height:2px;background:linear-gradient(90deg,#009fff 0.0px,#019aff 88.0px,#4193ff 188.0px)"></div><div style="left:0;top:100px;width:188px;height:2px;background:linear-gradient(90deg,#009eff 0.0px,#0099ff 86.0px,#4291ff 188.0px)"></div><div style="left:0;top:102px;width:188px;height:2px;background:linear-gradient(90deg,#009dff 0.0px,#0098ff 86.0px,#4290ff 188.0px)"></div><div style="left:0;top:104px;width:188px;height:2px;background:linear-gradient(90deg,#009cff 0.0px,#0097ff 84.0px,#428fff 188.0px)"></div><div style="left:0;top:106px;width:188px;height:2px;background:linear-gradient(90deg,#009bff 0.0px,#0096ff 84.0px,#438eff 188.0px)"></div><div style="left:0;top:108px;width:188px;height:2px;background:linear-gradient(90deg,#009aff 0.0px,#0095ff 84.0px,#438dff 188.0px)"></div><div style="left:0;top:110px;width:188px;height:2px;background:linear-gradient(90deg,#0099ff 0.0px,#0094ff 82.0px,#438cff 188.0px)"></div><div style="left:0;top:112px;width:188px;height:2px;background:linear-gradient(90deg,#0098ff 0.0px,#0093ff 82.0px,#438bff 188.0px)"></div><div style="left:0;top:114px;width:188px;height:2px;background:linear-gradient(90deg,#0097ff 0.0px,#0092ff 82.0px,#448aff 188.0px)"></div><div style="left:0;top:116px;width:188px;height:2px;background:linear-gradient(90deg,#0096ff 0.0px,#0091ff 80.0px,#4489ff 188.0px)"></div><div style="left:0;top:118px;width:188px;height:2px;background:linear-gradient(90deg,#0095ff 0.0px,#0090ff 80.0px,#4488ff 188.0px)"></div><div style="left:0;top:120px;width:188px;height:2px;background:linear-gradient(90deg,#0094ff 0.0px,#008fff 80.0px,#4587ff 188.0px)"></div><div style="left:0;top:122px;width:188px;height:2px;background:linear-gradient(90deg,#0093ff 0.0px,#008eff 78.0px,#4586ff 188.0px)"></div><div style="left:0;top:124px;width:188px;height:2px;background:linear-gradient(90deg,#0092ff 0.0px,#008dff 78.0px,#4585ff 188.0px)"></div><div style="left:0;top:126px;width:188px;height:2px;background:linear-gradient(90deg,#0092ff 0.0px,#008cff 78.0px,#4584ff 188.0px)"></div><div style="left:0;top:128px;width:188px;height:2px;background:linear-gradient(90deg,#0091ff 0.0px,#008bff 76.0px,#4683ff 188.0px)"></div><div style="left:0;top:130px;width:188px;height:2px;background:linear-gradient(90deg,#0090ff 0.0px,#008aff 76.0px,#4682ff 188.0px)"></div><div style="left:0;top:132px;width:188px;height:2px;background:linear-gradient(90deg,#008fff 0.0px,#0089ff 76.0px,#4681ff 188.0px)"></div><div style="left:0;top:134px;width:188px;height:2px;background:linear-gradient(90deg,#008eff 0.0px,#0089ff 74.0px,#4780ff 188.0px)"></div><div style="left:0;top:136px;width:188px;height:2px;background:linear-gradient(90deg,#008dff 0.0px,#0088ff 74.0px,#477fff 188.0px)"></div><div style="left:0;top:138px;width:188px;height:2px;background:linear-gradient(90deg,#008cff 0.0px,#0187ff 74.0px,#477eff 188.0px)"></div><div style="left:0;top:140px;width:188px;height:2px;background:linear-gradient(90deg,#008bff 0.0px,#0086ff 72.0px,#477dff 188.0px)"></div><div style="left:0;top:142px;width:188px;height:2px;background:linear-gradient(90deg,#008aff 0.0px,#0085ff 72.0px,#487cff 188.0px)"></div><div style="left:0;top:144px;width:188px;height:2px;background:linear-gradient(90deg,#0089ff 0.0px,#0184ff 72.0px,#487bff 188.0px)"></div><div style="left:0;top:146px;width:188px;height:2px;background:linear-gradient(90deg,#0088ff 0.0px,#0083ff 70.0px,#487aff 188.0px)"></div><div style="left:0;top:148px;width:188px;height:2px;background:linear-gradient(90deg,#0087ff 0.0px,#0082ff 70.0px,#4979ff 188.0px)"></div><div style="left:0;top:150px;width:188px;height:2px;background:linear-gradient(90deg,#0086ff 0.0px,#0181ff 70.0px,#4978ff 188.0px)"></div><div style="left:0;top:152px;width:188px;height:2px;background:linear-gradient(90deg,#0086ff 0.0px,#0081ff 68.0px,#4977ff 188.0px)"></div></div></div>
<div style="left:1425px;top:541.5px;width:280px;height:29px;background:#333"></div>
<div style="left:332px;top:639px;width:1248px;height:15px;background:#363636"></div>
<div style="left:332px;top:654px;width:1248px;height:15px;background:#171717"></div>
<div style="left:332px;top:639px;width:9px;height:30px;background:#000"></div>
<div style="left:332px;top:669px;width:1248px;height:28px;background:#404040"></div>
<div style="left:332px;top:669px;width:9px;height:28px;background:#252525"></div>
<div style="left:332px;top:697px;width:1248px;height:28px;background:#818181"></div>
<div style="left:332px;top:697px;width:9px;height:28px;background:#252525"></div>
<div style="left:332px;top:725px;width:1248px;height:28px;background:#404040"></div>
<div style="left:332px;top:725px;width:9px;height:28px;background:#252525"></div>
<div style="left:332px;top:753px;width:1248px;height:28px;background:#818181"></div>
<div style="left:332px;top:753px;width:9px;height:28px;background:#252525"></div>
<div style="left:332px;top:781px;width:1248px;height:28px;background:#404040"></div>
<div style="left:332px;top:781px;width:9px;height:28px;background:#252525"></div>
<div style="left:332px;top:809px;width:1248px;height:28px;background:#818181"></div>
<div style="left:332px;top:809px;width:9px;height:28px;background:#252525"></div>
<div style="left:332px;top:837px;width:1248px;height:28px;background:#404040"></div>
<div style="left:332px;top:837px;width:9px;height:28px;background:#252525"></div>
<svg width="1720" height="884" viewBox="0 0 1720 884"><defs><linearGradient id="g0" x1="0" x2="1" y1="0" y2="0"><stop offset="0" stop-color="rgb(76, 172, 194)"/><stop offset="0.28" stop-color="rgb(0, 137, 168)"/><stop offset="0.55" stop-color="rgb(0, 137, 168)"/><stop offset="1" stop-color="rgb(0, 57, 70)"/></linearGradient><linearGradient id="g1" x1="0" x2="1" y1="0" y2="0"><stop offset="0" stop-color="rgb(207, 136, 181)"/><stop offset="0.28" stop-color="rgb(187, 86, 150)"/><stop offset="0.55" stop-color="rgb(187, 86, 150)"/><stop offset="1" stop-color="rgb(78, 36, 63)"/></linearGradient><linearGradient id="g2" x1="0" x2="1" y1="0" y2="0"><stop offset="0" stop-color="rgb(244, 216, 104)"/><stop offset="0.28" stop-color="rgb(240, 200, 40)"/><stop offset="0.55" stop-color="rgb(240, 200, 40)"/><stop offset="1" stop-color="rgb(100, 84, 16)"/></linearGradient><linearGradient id="g3" x1="0" x2="1" y1="0" y2="0"><stop offset="0" stop-color="rgb(199, 104, 115)"/><stop offset="0.28" stop-color="rgb(175, 40, 55)"/><stop offset="0.55" stop-color="rgb(175, 40, 55)"/><stop offset="1" stop-color="rgb(73, 16, 23)"/></linearGradient><linearGradient id="g4" x1="0" x2="1" y1="0" y2="0"><stop offset="0" stop-color="rgb(125, 181, 125)"/><stop offset="0.28" stop-color="rgb(70, 150, 70)"/><stop offset="0.55" stop-color="rgb(70, 150, 70)"/><stop offset="1" stop-color="rgb(29, 63, 29)"/></linearGradient><linearGradient id="g5" x1="0" x2="1" y1="0" y2="0"><stop offset="0" stop-color="rgb(115, 122, 185)"/><stop offset="0.28" stop-color="rgb(55, 65, 155)"/><stop offset="0.55" stop-color="rgb(55, 65, 155)"/><stop offset="1" stop-color="rgb(23, 27, 65)"/></linearGradient><linearGradient id="g6" x1="0" x2="1" y1="0" y2="0"><stop offset="0" stop-color="rgb(237, 188, 111)"/><stop offset="0.28" stop-color="rgb(230, 160, 50)"/><stop offset="0.55" stop-color="rgb(230, 160, 50)"/><stop offset="1" stop-color="rgb(96, 67, 21)"/></linearGradient><linearGradient id="g7" x1="0" x2="1" y1="0" y2="0"><stop offset="0" stop-color="rgb(188, 209, 125)"/><stop offset="0.28" stop-color="rgb(160, 190, 70)"/><stop offset="0.55" stop-color="rgb(160, 190, 70)"/><stop offset="1" stop-color="rgb(67, 79, 29)"/></linearGradient><linearGradient id="g8" x1="0" x2="1" y1="0" y2="0"><stop offset="0" stop-color="rgb(146, 118, 153)"/><stop offset="0.28" stop-color="rgb(100, 60, 110)"/><stop offset="0.55" stop-color="rgb(100, 60, 110)"/><stop offset="1" stop-color="rgb(42, 25, 46)"/></linearGradient><linearGradient id="g9" x1="0" x2="1" y1="0" y2="0"><stop offset="0" stop-color="rgb(213, 132, 143)"/><stop offset="0.28" stop-color="rgb(195, 80, 95)"/><stop offset="0.55" stop-color="rgb(195, 80, 95)"/><stop offset="1" stop-color="rgb(81, 33, 39)"/></linearGradient><linearGradient id="g10" x1="0" x2="1" y1="0" y2="0"><stop offset="0" stop-color="rgb(132, 143, 195)"/><stop offset="0.28" stop-color="rgb(80, 95, 170)"/><stop offset="0.55" stop-color="rgb(80, 95, 170)"/><stop offset="1" stop-color="rgb(33, 39, 71)"/></linearGradient><linearGradient id="g11" x1="0" x2="1" y1="0" y2="0"><stop offset="0" stop-color="rgb(230, 160, 108)"/><stop offset="0.28" stop-color="rgb(220, 120, 45)"/><stop offset="0.55" stop-color="rgb(220, 120, 45)"/><stop offset="1" stop-color="rgb(92, 50, 18)"/></linearGradient><linearGradient id="g12" x1="0" x2="1" y1="0" y2="0"><stop offset="0" stop-color="rgb(146, 209, 192)"/><stop offset="0.28" stop-color="rgb(100, 190, 165)"/><stop offset="0.55" stop-color="rgb(100, 190, 165)"/><stop offset="1" stop-color="rgb(42, 79, 69)"/></linearGradient><linearGradient id="g13" x1="0" x2="1" y1="0" y2="0"><stop offset="0" stop-color="rgb(164, 164, 199)"/><stop offset="0.28" stop-color="rgb(125, 125, 175)"/><stop offset="0.55" stop-color="rgb(125, 125, 175)"/><stop offset="1" stop-color="rgb(52, 52, 73)"/></linearGradient><linearGradient id="g14" x1="0" x2="1" y1="0" y2="0"><stop offset="0" stop-color="rgb(139, 153, 125)"/><stop offset="0.28" stop-color="rgb(90, 110, 70)"/><stop offset="0.55" stop-color="rgb(90, 110, 70)"/><stop offset="1" stop-color="rgb(37, 46, 29)"/></linearGradient><linearGradient id="g15" x1="0" x2="1" y1="0" y2="0"><stop offset="0" stop-color="rgb(143, 167, 195)"/><stop offset="0.28" stop-color="rgb(95, 130, 170)"/><stop offset="0.55" stop-color="rgb(95, 130, 170)"/><stop offset="1" stop-color="rgb(39, 54, 71)"/></linearGradient><linearGradient id="g16" x1="0" x2="1" y1="0" y2="0"><stop offset="0" stop-color="rgb(213, 181, 167)"/><stop offset="0.28" stop-color="rgb(195, 150, 130)"/><stop offset="0.55" stop-color="rgb(195, 150, 130)"/><stop offset="1" stop-color="rgb(81, 63, 54)"/></linearGradient><linearGradient id="g17" x1="0" x2="1" y1="0" y2="0"><stop offset="0" stop-color="rgb(157, 136, 125)"/><stop offset="0.28" stop-color="rgb(115, 85, 70)"/><stop offset="0.55" stop-color="rgb(115, 85, 70)"/><stop offset="1" stop-color="rgb(48, 35, 29)"/></linearGradient><linearGradient id="g18" x1="0" x2="1" y1="0" y2="0"><stop offset="0" stop-color="rgb(83, 83, 83)"/><stop offset="0.28" stop-color="rgb(10, 10, 10)"/><stop offset="0.55" stop-color="rgb(10, 10, 10)"/><stop offset="1" stop-color="rgb(4, 4, 4)"/></linearGradient><linearGradient id="g19" x1="0" x2="1" y1="0" y2="0"><stop offset="0" stop-color="rgb(192, 192, 192)"/><stop offset="0.28" stop-color="rgb(165, 165, 165)"/><stop offset="0.55" stop-color="rgb(165, 165, 165)"/><stop offset="1" stop-color="rgb(69, 69, 69)"/></linearGradient><linearGradient id="g20" x1="0" x2="1" y1="0" y2="0"><stop offset="0" stop-color="rgb(209, 209, 209)"/><stop offset="0.28" stop-color="rgb(190, 190, 190)"/><stop offset="0.55" stop-color="rgb(190, 190, 190)"/><stop offset="1" stop-color="rgb(79, 79, 79)"/></linearGradient><linearGradient id="g21" x1="0" x2="1" y1="0" y2="0"><stop offset="0" stop-color="rgb(227, 227, 227)"/><stop offset="0.28" stop-color="rgb(215, 215, 215)"/><stop offset="0.55" stop-color="rgb(215, 215, 215)"/><stop offset="1" stop-color="rgb(90, 90, 90)"/></linearGradient><linearGradient id="g22" x1="0" x2="1" y1="0" y2="0"><stop offset="0" stop-color="rgb(238, 238, 238)"/><stop offset="0.28" stop-color="rgb(232, 232, 232)"/><stop offset="0.55" stop-color="rgb(232, 232, 232)"/><stop offset="1" stop-color="rgb(97, 97, 97)"/></linearGradient><linearGradient id="g23" x1="0" x2="1" y1="0" y2="0"><stop offset="0" stop-color="rgb(252, 252, 252)"/><stop offset="0.28" stop-color="rgb(252, 252, 252)"/><stop offset="0.55" stop-color="rgb(252, 252, 252)"/><stop offset="1" stop-color="rgb(105, 105, 105)"/></linearGradient><linearGradient id="vDeltaL" x1="0" x2="0" y1="0" y2="1"><stop offset="0" stop-color="#5ab6cc"/><stop offset="0.12" stop-color="#2a9cb8"/><stop offset="0.3" stop-color="#0088a8"/><stop offset="0.55" stop-color="#0088a8"/><stop offset="1" stop-color="#05404f"/></linearGradient><linearGradient id="vDeltaC" x1="0" x2="0" y1="0" y2="1"><stop offset="0" stop-color="#5ab6cc"/><stop offset="0.12" stop-color="#2a9cb8"/><stop offset="0.3" stop-color="#0088a8"/><stop offset="0.55" stop-color="#0088a8"/><stop offset="1" stop-color="#05404f"/></linearGradient><linearGradient id="vDeltaH" x1="0" x2="0" y1="0" y2="1"><stop offset="0" stop-color="#5ab6cc"/><stop offset="0.12" stop-color="#2a9cb8"/><stop offset="0.3" stop-color="#0088a8"/><stop offset="0.55" stop-color="#0088a8"/><stop offset="1" stop-color="#05404f"/></linearGradient></defs><rect x="21.0" y="212.0" width="366.0" height="391.0" fill="#222"/>
<line x1="69.70" y1="212.0" x2="69.70" y2="603.0" stroke="#8a8a8a" stroke-width="1.5"/>
<line x1="118.40" y1="212.0" x2="118.40" y2="603.0" stroke="#8a8a8a" stroke-width="1.5"/>
<line x1="167.10" y1="212.0" x2="167.10" y2="603.0" stroke="#8a8a8a" stroke-width="1.5"/>
<line x1="215.80" y1="212.0" x2="215.80" y2="603.0" stroke="#8a8a8a" stroke-width="1.5"/>
<line x1="264.50" y1="212.0" x2="264.50" y2="603.0" stroke="#8a8a8a" stroke-width="1.5"/>
<line x1="313.20" y1="212.0" x2="313.20" y2="603.0" stroke="#8a8a8a" stroke-width="1.5"/>
<line x1="361.90" y1="212.0" x2="361.90" y2="603.0" stroke="#8a8a8a" stroke-width="1.5"/>
<rect x="22.0" y="213.20" width="224.26" height="13.3" fill="#000"/>
<rect x="22.0" y="214.60" width="222.76" height="10.3" fill="url(#g0)"/>
<rect x="22.0" y="229.49" width="146.10" height="13.3" fill="#000"/>
<rect x="22.0" y="230.89" width="144.60" height="10.3" fill="url(#g1)"/>
<rect x="22.0" y="245.78" width="229.86" height="13.3" fill="#000"/>
<rect x="22.0" y="247.18" width="228.36" height="10.3" fill="url(#g2)"/>
<rect x="22.0" y="262.07" width="93.26" height="13.3" fill="#000"/>
<rect x="22.0" y="263.48" width="91.76" height="10.3" fill="url(#g3)"/>
<rect x="22.0" y="278.37" width="164.85" height="13.3" fill="#000"/>
<rect x="22.0" y="279.77" width="163.35" height="10.3" fill="url(#g4)"/>
<rect x="22.0" y="294.66" width="226.94" height="13.3" fill="#000"/>
<rect x="22.0" y="296.06" width="225.44" height="10.3" fill="url(#g5)"/>
<rect x="22.0" y="310.95" width="247.15" height="13.3" fill="#000"/>
<rect x="22.0" y="312.35" width="245.65" height="10.3" fill="url(#g6)"/>
<rect x="22.0" y="327.24" width="147.56" height="13.3" fill="#000"/>
<rect x="22.0" y="328.64" width="146.06" height="10.3" fill="url(#g7)"/>
<rect x="22.0" y="343.53" width="168.99" height="13.3" fill="#000"/>
<rect x="22.0" y="344.93" width="167.49" height="10.3" fill="url(#g8)"/>
<rect x="22.0" y="359.82" width="70.86" height="13.3" fill="#000"/>
<rect x="22.0" y="361.23" width="69.36" height="10.3" fill="url(#g9)"/>
<rect x="22.0" y="376.12" width="205.51" height="13.3" fill="#000"/>
<rect x="22.0" y="377.52" width="204.01" height="10.3" fill="url(#g10)"/>
<rect x="22.0" y="392.41" width="219.15" height="13.3" fill="#000"/>
<rect x="22.0" y="393.81" width="217.65" height="10.3" fill="url(#g11)"/>
<rect x="22.0" y="408.70" width="108.84" height="13.3" fill="#000"/>
<rect x="22.0" y="410.10" width="107.34" height="10.3" fill="url(#g12)"/>
<rect x="22.0" y="424.99" width="162.90" height="13.3" fill="#000"/>
<rect x="22.0" y="426.39" width="161.40" height="10.3" fill="url(#g13)"/>
<rect x="22.0" y="441.28" width="160.47" height="13.3" fill="#000"/>
<rect x="22.0" y="442.68" width="158.97" height="10.3" fill="url(#g14)"/>
<rect x="22.0" y="457.57" width="163.88" height="13.3" fill="#000"/>
<rect x="22.0" y="458.98" width="162.38" height="10.3" fill="url(#g15)"/>
<rect x="22.0" y="473.87" width="167.77" height="13.3" fill="#000"/>
<rect x="22.0" y="475.27" width="166.27" height="10.3" fill="url(#g16)"/>
<rect x="22.0" y="490.16" width="107.87" height="13.3" fill="#000"/>
<rect x="22.0" y="491.56" width="106.37" height="10.3" fill="url(#g17)"/>
<rect x="22.0" y="506.45" width="37.01" height="13.3" fill="#000"/>
<rect x="22.0" y="507.85" width="35.51" height="10.3" fill="url(#g18)"/>
<rect x="22.0" y="522.74" width="165.58" height="13.3" fill="#000"/>
<rect x="22.0" y="524.14" width="164.08" height="10.3" fill="url(#g19)"/>
<rect x="22.0" y="539.03" width="173.13" height="13.3" fill="#000"/>
<rect x="22.0" y="540.43" width="171.63" height="10.3" fill="url(#g20)"/>
<rect x="22.0" y="555.33" width="193.83" height="13.3" fill="#000"/>
<rect x="22.0" y="556.73" width="192.33" height="10.3" fill="url(#g21)"/>
<rect x="22.0" y="571.62" width="186.03" height="13.3" fill="#000"/>
<rect x="22.0" y="573.02" width="184.53" height="10.3" fill="url(#g22)"/>
<rect x="22.0" y="587.91" width="199.91" height="13.3" fill="#000"/>
<rect x="22.0" y="589.31" width="198.41" height="10.3" fill="url(#g23)"/>
<line x1="94.85" y1="212.0" x2="94.85" y2="603.0" stroke="#00a000" stroke-width="1.6"/>
<line x1="143.55" y1="212.0" x2="143.55" y2="603.0" stroke="#ffff00" stroke-width="1.6"/>
<line x1="265.30" y1="212.0" x2="265.30" y2="603.0" stroke="#ff1010" stroke-width="1.6"/>
<rect x="21.0" y="211.0" width="366.0" height="392.0" fill="none" stroke="#9a9a9a" stroke-width="2"/>
<line x1="21.00" y1="603.0" x2="21.00" y2="609.0" stroke="#ddd" stroke-width="1.5"/>
<line x1="69.70" y1="603.0" x2="69.70" y2="609.0" stroke="#ddd" stroke-width="1.5"/>
<line x1="118.40" y1="603.0" x2="118.40" y2="609.0" stroke="#ddd" stroke-width="1.5"/>
<line x1="167.10" y1="603.0" x2="167.10" y2="609.0" stroke="#ddd" stroke-width="1.5"/>
<line x1="215.80" y1="603.0" x2="215.80" y2="609.0" stroke="#ddd" stroke-width="1.5"/>
<line x1="264.50" y1="603.0" x2="264.50" y2="609.0" stroke="#ddd" stroke-width="1.5"/>
<line x1="313.20" y1="603.0" x2="313.20" y2="609.0" stroke="#ddd" stroke-width="1.5"/>
<line x1="361.90" y1="603.0" x2="361.90" y2="609.0" stroke="#ddd" stroke-width="1.5"/>
<rect x="433.5" y="49.0" width="150.0" height="366.0" fill="#222"/>
<line x1="427.5" y1="415.00" x2="433.5" y2="415.00" stroke="#e0e0e0" stroke-width="1.5"/>
<line x1="433.5" y1="369.25" x2="583.5" y2="369.25" stroke="#8a8a8a" stroke-width="1.5"/>
<line x1="427.5" y1="369.25" x2="433.5" y2="369.25" stroke="#e0e0e0" stroke-width="1.5"/>
<line x1="433.5" y1="323.50" x2="583.5" y2="323.50" stroke="#8a8a8a" stroke-width="1.5"/>
<line x1="427.5" y1="323.50" x2="433.5" y2="323.50" stroke="#e0e0e0" stroke-width="1.5"/>
<line x1="433.5" y1="277.75" x2="583.5" y2="277.75" stroke="#8a8a8a" stroke-width="1.5"/>
<line x1="427.5" y1="277.75" x2="433.5" y2="277.75" stroke="#e0e0e0" stroke-width="1.5"/>
<line x1="433.5" y1="232.00" x2="583.5" y2="232.00" stroke="#8a8a8a" stroke-width="1.5"/>
<line x1="427.5" y1="232.00" x2="433.5" y2="232.00" stroke="#e0e0e0" stroke-width="1.5"/>
<line x1="433.5" y1="186.25" x2="583.5" y2="186.25" stroke="#8a8a8a" stroke-width="1.5"/>
<line x1="427.5" y1="186.25" x2="433.5" y2="186.25" stroke="#e0e0e0" stroke-width="1.5"/>
<line x1="433.5" y1="140.50" x2="583.5" y2="140.50" stroke="#8a8a8a" stroke-width="1.5"/>
<line x1="427.5" y1="140.50" x2="433.5" y2="140.50" stroke="#e0e0e0" stroke-width="1.5"/>
<line x1="433.5" y1="94.75" x2="583.5" y2="94.75" stroke="#8a8a8a" stroke-width="1.5"/>
<line x1="427.5" y1="94.75" x2="433.5" y2="94.75" stroke="#e0e0e0" stroke-width="1.5"/>
<line x1="427.5" y1="49.00" x2="433.5" y2="49.00" stroke="#e0e0e0" stroke-width="1.5"/>
<rect x="448.0" y="75.31" width="120.80" height="157.89" fill="#000"/>
<rect x="449.6" y="76.91" width="117.60" height="155.29" fill="url(#vDeltaL)"/>
<line x1="433.5" y1="163.38" x2="583.5" y2="163.38" stroke="#00900a" stroke-width="1.7"/>
<line x1="433.5" y1="300.62" x2="583.5" y2="300.62" stroke="#00900a" stroke-width="1.7"/>
<line x1="433.5" y1="117.62" x2="583.5" y2="117.62" stroke="#ffff20" stroke-width="1.7"/>
<line x1="433.5" y1="346.38" x2="583.5" y2="346.38" stroke="#ffff20" stroke-width="1.7"/>
<rect x="433.5" y="49.0" width="150.0" height="366.0" fill="none" stroke="#9a9a9a" stroke-width="2"/>
<rect x="630.0" y="49.0" width="150.29999999999995" height="366.0" fill="#222"/>
<line x1="624.0" y1="415.00" x2="630.0" y2="415.00" stroke="#e0e0e0" stroke-width="1.5"/>
<line x1="630.0" y1="369.25" x2="780.3" y2="369.25" stroke="#8a8a8a" stroke-width="1.5"/>
<line x1="624.0" y1="369.25" x2="630.0" y2="369.25" stroke="#e0e0e0" stroke-width="1.5"/>
<line x1="630.0" y1="323.50" x2="780.3" y2="323.50" stroke="#8a8a8a" stroke-width="1.5"/>
<line x1="624.0" y1="323.50" x2="630.0" y2="323.50" stroke="#e0e0e0" stroke-width="1.5"/>
<line x1="630.0" y1="277.75" x2="780.3" y2="277.75" stroke="#8a8a8a" stroke-width="1.5"/>
<line x1="624.0" y1="277.75" x2="630.0" y2="277.75" stroke="#e0e0e0" stroke-width="1.5"/>
<line x1="630.0" y1="232.00" x2="780.3" y2="232.00" stroke="#8a8a8a" stroke-width="1.5"/>
<line x1="624.0" y1="232.00" x2="630.0" y2="232.00" stroke="#e0e0e0" stroke-width="1.5"/>
<line x1="630.0" y1="186.25" x2="780.3" y2="186.25" stroke="#8a8a8a" stroke-width="1.5"/>
<line x1="624.0" y1="186.25" x2="630.0" y2="186.25" stroke="#e0e0e0" stroke-width="1.5"/>
<line x1="630.0" y1="140.50" x2="780.3" y2="140.50" stroke="#8a8a8a" stroke-width="1.5"/>
<line x1="624.0" y1="140.50" x2="630.0" y2="140.50" stroke="#e0e0e0" stroke-width="1.5"/>
<line x1="630.0" y1="94.75" x2="780.3" y2="94.75" stroke="#8a8a8a" stroke-width="1.5"/>
<line x1="624.0" y1="94.75" x2="630.0" y2="94.75" stroke="#e0e0e0" stroke-width="1.5"/>
<line x1="624.0" y1="49.00" x2="630.0" y2="49.00" stroke="#e0e0e0" stroke-width="1.5"/>
<rect x="644.0" y="74.16" width="121.00" height="159.04" fill="#000"/>
<rect x="645.6" y="75.76" width="117.80" height="156.44" fill="url(#vDeltaC)"/>
<line x1="630.0" y1="163.38" x2="780.3" y2="163.38" stroke="#00900a" stroke-width="1.7"/>
<line x1="630.0" y1="300.62" x2="780.3" y2="300.62" stroke="#00900a" stroke-width="1.7"/>
<line x1="630.0" y1="117.62" x2="780.3" y2="117.62" stroke="#ffff20" stroke-width="1.7"/>
<line x1="630.0" y1="346.38" x2="780.3" y2="346.38" stroke="#ffff20" stroke-width="1.7"/>
<rect x="630.0" y="49.0" width="150.29999999999995" height="366.0" fill="none" stroke="#9a9a9a" stroke-width="2"/>
<rect x="834.8" y="49.0" width="155.5" height="366.0" fill="#222"/>
<line x1="828.8" y1="415.00" x2="834.8" y2="415.00" stroke="#e0e0e0" stroke-width="1.5"/>
<line x1="834.8" y1="369.25" x2="990.3" y2="369.25" stroke="#8a8a8a" stroke-width="1.5"/>
<line x1="828.8" y1="369.25" x2="834.8" y2="369.25" stroke="#e0e0e0" stroke-width="1.5"/>
<line x1="834.8" y1="323.50" x2="990.3" y2="323.50" stroke="#8a8a8a" stroke-width="1.5"/>
<line x1="828.8" y1="323.50" x2="834.8" y2="323.50" stroke="#e0e0e0" stroke-width="1.5"/>
<line x1="834.8" y1="277.75" x2="990.3" y2="277.75" stroke="#8a8a8a" stroke-width="1.5"/>
<line x1="828.8" y1="277.75" x2="834.8" y2="277.75" stroke="#e0e0e0" stroke-width="1.5"/>
<line x1="834.8" y1="232.00" x2="990.3" y2="232.00" stroke="#8a8a8a" stroke-width="1.5"/>
<line x1="828.8" y1="232.00" x2="834.8" y2="232.00" stroke="#e0e0e0" stroke-width="1.5"/>
<line x1="834.8" y1="186.25" x2="990.3" y2="186.25" stroke="#8a8a8a" stroke-width="1.5"/>
<line x1="828.8" y1="186.25" x2="834.8" y2="186.25" stroke="#e0e0e0" stroke-width="1.5"/>
<line x1="834.8" y1="140.50" x2="990.3" y2="140.50" stroke="#8a8a8a" stroke-width="1.5"/>
<line x1="828.8" y1="140.50" x2="834.8" y2="140.50" stroke="#e0e0e0" stroke-width="1.5"/>
<line x1="834.8" y1="94.75" x2="990.3" y2="94.75" stroke="#8a8a8a" stroke-width="1.5"/>
<line x1="828.8" y1="94.75" x2="834.8" y2="94.75" stroke="#e0e0e0" stroke-width="1.5"/>
<line x1="828.8" y1="49.00" x2="834.8" y2="49.00" stroke="#e0e0e0" stroke-width="1.5"/>
<rect x="849.7" y="135.93" width="123.90" height="97.27" fill="#000"/>
<rect x="851.3000000000001" y="137.53" width="120.70" height="94.67" fill="url(#vDeltaH)"/>
<line x1="834.8" y1="204.55" x2="990.3" y2="204.55" stroke="#00900a" stroke-width="1.7"/>
<line x1="834.8" y1="259.45" x2="990.3" y2="259.45" stroke="#00900a" stroke-width="1.7"/>
<line x1="834.8" y1="186.25" x2="990.3" y2="186.25" stroke="#ffff20" stroke-width="1.7"/>
<line x1="834.8" y1="277.75" x2="990.3" y2="277.75" stroke="#ffff20" stroke-width="1.7"/>
<line x1="834.8" y1="140.50" x2="990.3" y2="140.50" stroke="#e02020" stroke-width="1.7"/>
<line x1="834.8" y1="323.50" x2="990.3" y2="323.50" stroke="#e02020" stroke-width="1.7"/>
<rect x="834.8" y="49.0" width="155.5" height="366.0" fill="none" stroke="#9a9a9a" stroke-width="2"/>
<path d="M419.5 628 L426 623.5 L426 632.5 Z" fill="#3a3a3a"/>
<path d="M998.5 628 L992 623.5 L992 632.5 Z" fill="#3a3a3a"/>
<rect x="1054.5" y="54" width="654" height="529.5" fill="none" stroke="#9a9a9a" stroke-width="2"/>
<line x1="1048" y1="583.50" x2="1054" y2="583.50" stroke="#e0e0e0" stroke-width="1.5"/>
<line x1="1054.50" y1="583.5" x2="1054.50" y2="589.5" stroke="#e0e0e0" stroke-width="1.5"/>
<line x1="1048" y1="520.75" x2="1054" y2="520.75" stroke="#e0e0e0" stroke-width="1.5"/>
<line x1="1132.25" y1="583.5" x2="1132.25" y2="589.5" stroke="#e0e0e0" stroke-width="1.5"/>
<line x1="1048" y1="458.00" x2="1054" y2="458.00" stroke="#e0e0e0" stroke-width="1.5"/>
<line x1="1210.00" y1="583.5" x2="1210.00" y2="589.5" stroke="#e0e0e0" stroke-width="1.5"/>
<line x1="1048" y1="395.25" x2="1054" y2="395.25" stroke="#e0e0e0" stroke-width="1.5"/>
<line x1="1287.75" y1="583.5" x2="1287.75" y2="589.5" stroke="#e0e0e0" stroke-width="1.5"/>
<line x1="1048" y1="332.50" x2="1054" y2="332.50" stroke="#e0e0e0" stroke-width="1.5"/>
<line x1="1365.50" y1="583.5" x2="1365.50" y2="589.5" stroke="#e0e0e0" stroke-width="1.5"/>
<line x1="1048" y1="269.75" x2="1054" y2="269.75" stroke="#e0e0e0" stroke-width="1.5"/>
<line x1="1443.25" y1="583.5" x2="1443.25" y2="589.5" stroke="#e0e0e0" stroke-width="1.5"/>
<line x1="1048" y1="207.00" x2="1054" y2="207.00" stroke="#e0e0e0" stroke-width="1.5"/>
<line x1="1521.00" y1="583.5" x2="1521.00" y2="589.5" stroke="#e0e0e0" stroke-width="1.5"/>
<line x1="1048" y1="144.25" x2="1054" y2="144.25" stroke="#e0e0e0" stroke-width="1.5"/>
<line x1="1598.75" y1="583.5" x2="1598.75" y2="589.5" stroke="#e0e0e0" stroke-width="1.5"/>
<line x1="1048" y1="81.50" x2="1054" y2="81.50" stroke="#e0e0e0" stroke-width="1.5"/>
<line x1="1676.50" y1="583.5" x2="1676.50" y2="589.5" stroke="#e0e0e0" stroke-width="1.5"/>
<rect x="1284.9" y="266.8" width="14" height="14" fill="none" stroke="#fff" stroke-width="2"/>
<rect x="1339.9" y="265.9" width="14" height="14" fill="none" stroke="#fff" stroke-width="2"/>
<rect x="1312.0" y="306.8" width="14" height="14" fill="none" stroke="#fff" stroke-width="2"/>
<rect x="1251.5" y="349.0" width="14" height="14" fill="none" stroke="#fff" stroke-width="2"/>
<rect x="1342.2" y="351.8" width="14" height="14" fill="none" stroke="#fff" stroke-width="2"/>
<rect x="1357.0" y="347.0" width="14" height="14" fill="none" stroke="#fff" stroke-width="2"/>
<rect x="1394.6" y="277.9" width="14" height="14" fill="none" stroke="#fff" stroke-width="2"/>
<rect x="1415.4" y="299.6" width="14" height="14" fill="none" stroke="#fff" stroke-width="2"/>
<rect x="1446.4" y="320.8" width="14" height="14" fill="none" stroke="#fff" stroke-width="2"/>
<rect x="1406.9" y="378.3" width="14" height="14" fill="none" stroke="#fff" stroke-width="2"/>
<rect x="1464.3" y="375.2" width="14" height="14" fill="none" stroke="#fff" stroke-width="2"/>
<rect x="1209.3" y="406.4" width="14" height="14" fill="none" stroke="#fff" stroke-width="2"/>
<rect x="1241.4" y="407.9" width="14" height="14" fill="none" stroke="#fff" stroke-width="2"/>
<rect x="1255.5" y="416.9" width="14" height="14" fill="none" stroke="#fff" stroke-width="2"/>
<rect x="1272.4" y="435.9" width="14" height="14" fill="none" stroke="#fff" stroke-width="2"/>
<rect x="1338.6" y="420.0" width="14" height="14" fill="none" stroke="#fff" stroke-width="2"/>
<rect x="1216.4" y="455.6" width="14" height="14" fill="none" stroke="#fff" stroke-width="2"/>
<rect x="1196.9" y="486.5" width="14" height="14" fill="none" stroke="#fff" stroke-width="2"/>
<circle cx="1285" cy="247.3" r="4.6" fill="#5e9a5e" stroke="#111" stroke-width="1.3"/>
<circle cx="1336.9" cy="247.3" r="4.6" fill="#a8b555" stroke="#111" stroke-width="1.3"/>
<circle cx="1311.9" cy="291.9" r="4.6" fill="#5f6a52" stroke="#111" stroke-width="1.3"/>
<circle cx="1248.8" cy="356.9" r="4.6" fill="#70b0a0" stroke="#111" stroke-width="1.3"/>
<circle cx="1328.8" cy="360" r="4.6" fill="#b08a78" stroke="#111" stroke-width="1.3"/>
<circle cx="1353.8" cy="351.2" r="4.6" fill="#6a5248" stroke="#111" stroke-width="1.3"/>
<circle cx="1384.8" cy="260.8" r="4.6" fill="#e8c040" stroke="#111" stroke-width="1.3"/>
<circle cx="1402.9" cy="287.4" r="4.6" fill="#e0a040" stroke="#111" stroke-width="1.3"/>
<circle cx="1429.8" cy="309.8" r="4.6" fill="#d88038" stroke="#111" stroke-width="1.3"/>
<circle cx="1411" cy="388" r="4.6" fill="#c06070" stroke="#111" stroke-width="1.3"/>
<circle cx="1481.2" cy="382.2" r="4.6" fill="#b04050" stroke="#111" stroke-width="1.3"/>
<circle cx="1211.9" cy="429.9" r="4.6" fill="#008a98" stroke="#111" stroke-width="1.3"/>
<circle cx="1231.5" cy="430.5" r="4.6" fill="#303840" stroke="#111" stroke-width="1.3"/>
<circle cx="1232.8" cy="431.2" r="4.6" fill="#6a7f96" stroke="#111" stroke-width="1.3"/>
<circle cx="1246" cy="441.9" r="4.6" fill="#8a86a6" stroke="#111" stroke-width="1.3"/>
<circle cx="1324.4" cy="444.8" r="4.6" fill="#b05a88" stroke="#111" stroke-width="1.3"/>
<circle cx="1256.9" cy="469.7" r="4.6" fill="#604a66" stroke="#111" stroke-width="1.3"/>
<circle cx="1207" cy="485.8" r="4.6" fill="#5060a0" stroke="#111" stroke-width="1.3"/>
<circle cx="1190" cy="518.9" r="4.6" fill="#404a90" stroke="#111" stroke-width="1.3"/>
<circle cx="1283.8" cy="377" r="4.6" fill="#777" stroke="#111" stroke-width="1.3"/>
<circle cx="1284.4" cy="380" r="4.6" fill="#9a9a9a" stroke="#111" stroke-width="1.3"/>
<rect x="1290.9" y="367.6" width="14" height="14" fill="none" stroke="#000" stroke-width="2.6"/>
<rect x="1598.5" y="132.5" width="14" height="14" fill="none" stroke="#fff" stroke-width="2"/>
<circle cx="1590.8" cy="205" r="4.6" fill="#00869a" stroke="#111" stroke-width="1.3"/>
<circle cx="1667.6" cy="208.8" r="4.6" fill="#222" stroke="#111" stroke-width="1.3"/>
<circle cx="1668.3" cy="210.6" r="4.6" fill="#6a7f96" stroke="#111" stroke-width="1.3"/></svg>
<div class="t" style="left:23.8px;top:26.7px;font-size:43px;color:#f0f0f0;transform:scaleX(0.923);transform-origin:left;">ColorChecker</div>
<div class="t" style="left:-289.0px;top:98.4px;width:1000px;text-align:center;font-size:30.5px;color:#f0f0f0;">Avg dE2000: 7,03</div>
<div class="t" style="left:-289.0px;top:142.0px;width:1000px;text-align:center;font-size:30.5px;color:#f0f0f0;transform:scaleX(1.017);transform-origin:center;">Max dE2000: 10,15</div>
<div class="t" style="left:-295.3px;top:193.8px;width:1000px;text-align:center;font-size:15px;color:#cfcfcf;">DeltaE 2000</div>
<div class="t" style="left:-479.0px;top:612.6px;width:1000px;text-align:center;font-size:15px;color:#d6d6d6;">0</div>
<div class="t" style="left:-430.3px;top:612.6px;width:1000px;text-align:center;font-size:15px;color:#d6d6d6;">2</div>
<div class="t" style="left:-381.6px;top:612.6px;width:1000px;text-align:center;font-size:15px;color:#d6d6d6;">4</div>
<div class="t" style="left:-332.9px;top:612.6px;width:1000px;text-align:center;font-size:15px;color:#d6d6d6;">6</div>
<div class="t" style="left:-284.2px;top:612.6px;width:1000px;text-align:center;font-size:15px;color:#d6d6d6;">8</div>
<div class="t" style="left:-235.5px;top:612.6px;width:1000px;text-align:center;font-size:15px;color:#d6d6d6;">10</div>
<div class="t" style="left:-186.8px;top:612.6px;width:1000px;text-align:center;font-size:15px;color:#d6d6d6;">12</div>
<div class="t" style="left:-138.1px;top:612.6px;width:1000px;text-align:center;font-size:15px;color:#d6d6d6;">14</div>
<div class="t" style="left:-1.0px;top:31.1px;width:1000px;text-align:center;font-size:15px;color:#cfcfcf;">DeltaL</div>
<div class="t" style="left:-573.5px;top:407.9px;width:1000px;text-align:right;font-size:15px;color:#d6d6d6;">-8</div>
<div class="t" style="left:-573.5px;top:362.2px;width:1000px;text-align:right;font-size:15px;color:#d6d6d6;">-6</div>
<div class="t" style="left:-573.5px;top:316.4px;width:1000px;text-align:right;font-size:15px;color:#d6d6d6;">-4</div>
<div class="t" style="left:-573.5px;top:270.7px;width:1000px;text-align:right;font-size:15px;color:#d6d6d6;">-2</div>
<div class="t" style="left:-573.5px;top:224.9px;width:1000px;text-align:right;font-size:15px;color:#d6d6d6;">0</div>
<div class="t" style="left:-573.5px;top:179.2px;width:1000px;text-align:right;font-size:15px;color:#d6d6d6;">2</div>
<div class="t" style="left:-573.5px;top:133.4px;width:1000px;text-align:right;font-size:15px;color:#d6d6d6;">4</div>
<div class="t" style="left:-573.5px;top:87.7px;width:1000px;text-align:right;font-size:15px;color:#d6d6d6;">6</div>
<div class="t" style="left:-573.5px;top:41.9px;width:1000px;text-align:right;font-size:15px;color:#d6d6d6;">8</div>
<div class="t" style="left:196.0px;top:31.1px;width:1000px;text-align:center;font-size:15px;color:#cfcfcf;">DeltaC</div>
<div class="t" style="left:-377.0px;top:407.9px;width:1000px;text-align:right;font-size:15px;color:#d6d6d6;">-8</div>
<div class="t" style="left:-377.0px;top:362.2px;width:1000px;text-align:right;font-size:15px;color:#d6d6d6;">-6</div>
<div class="t" style="left:-377.0px;top:316.4px;width:1000px;text-align:right;font-size:15px;color:#d6d6d6;">-4</div>
<div class="t" style="left:-377.0px;top:270.7px;width:1000px;text-align:right;font-size:15px;color:#d6d6d6;">-2</div>
<div class="t" style="left:-377.0px;top:224.9px;width:1000px;text-align:right;font-size:15px;color:#d6d6d6;">0</div>
<div class="t" style="left:-377.0px;top:179.2px;width:1000px;text-align:right;font-size:15px;color:#d6d6d6;">2</div>
<div class="t" style="left:-377.0px;top:133.4px;width:1000px;text-align:right;font-size:15px;color:#d6d6d6;">4</div>
<div class="t" style="left:-377.0px;top:87.7px;width:1000px;text-align:right;font-size:15px;color:#d6d6d6;">6</div>
<div class="t" style="left:-377.0px;top:41.9px;width:1000px;text-align:right;font-size:15px;color:#d6d6d6;">8</div>
<div class="t" style="left:398.0px;top:31.1px;width:1000px;text-align:center;font-size:15px;color:#cfcfcf;">DeltaH</div>
<div class="t" style="left:-172.2px;top:407.9px;width:1000px;text-align:right;font-size:15px;color:#d6d6d6;">-20</div>
<div class="t" style="left:-172.2px;top:362.2px;width:1000px;text-align:right;font-size:15px;color:#d6d6d6;">-15</div>
<div class="t" style="left:-172.2px;top:316.4px;width:1000px;text-align:right;font-size:15px;color:#d6d6d6;">-10</div>
<div class="t" style="left:-172.2px;top:270.7px;width:1000px;text-align:right;font-size:15px;color:#d6d6d6;">-5</div>
<div class="t" style="left:-172.2px;top:224.9px;width:1000px;text-align:right;font-size:15px;color:#d6d6d6;">0</div>
<div class="t" style="left:-172.2px;top:179.2px;width:1000px;text-align:right;font-size:15px;color:#d6d6d6;">5</div>
<div class="t" style="left:-172.2px;top:133.4px;width:1000px;text-align:right;font-size:15px;color:#d6d6d6;">10</div>
<div class="t" style="left:-172.2px;top:87.7px;width:1000px;text-align:right;font-size:15px;color:#d6d6d6;">15</div>
<div class="t" style="left:-172.2px;top:41.9px;width:1000px;text-align:right;font-size:15px;color:#d6d6d6;">20</div>
<div class="t" style="left:-37.0px;top:583.7px;width:1000px;text-align:center;font-size:13.3px;color:#ffffff;">White</div>
<div class="t" style="left:33.0px;top:583.7px;width:1000px;text-align:center;font-size:13.3px;color:#ffffff;">Gray 80</div>
<div class="t" style="left:103.0px;top:583.7px;width:1000px;text-align:center;font-size:13.3px;color:#ffffff;">Gray 65</div>
<div class="t" style="left:173.0px;top:583.7px;width:1000px;text-align:center;font-size:13.3px;color:#ffffff;">Gray 50</div>
<div class="t" style="left:243.0px;top:583.7px;width:1000px;text-align:center;font-size:13.3px;color:#ffffff;">Gray 35</div>
<div class="t" style="left:313.0px;top:583.7px;width:1000px;text-align:center;font-size:13.3px;color:#ffffff;">Black</div>
<div class="t" style="left:383.0px;top:583.7px;width:1000px;text-align:center;font-size:13.3px;color:#ffffff;">Dark Skin</div>
<div class="t" style="left:453.0px;top:583.7px;width:1000px;text-align:center;font-size:13.3px;color:#ffffff;">Light Skin</div>
<div class="t" style="left:404px;top:456px;width:40px;text-align:center;font-size:14px;color:#fff;transform:rotate(-90deg)">Actual</div>
<div class="t" style="left:404px;top:539px;width:40px;text-align:center;font-size:14px;color:#fff;transform:rotate(-90deg)">Target</div>
<div style="left:994px;top:580px;width:10px;height:20px;overflow:hidden"><div class="t" style="left:5.5px;top:3.7px;font-size:13.3px;color:#fff">B</div></div>
<div class="t" style="left:868.5px;top:37.2px;width:1000px;text-align:center;font-size:14.5px;color:#d0d0d0;">CIE 1931 xy</div>
<div class="t" style="left:48.0px;top:577.1px;width:1000px;text-align:right;font-size:15px;color:#d6d6d6;">0</div>
<div class="t" style="left:554.5px;top:593.6px;width:1000px;text-align:center;font-size:15px;color:#d6d6d6;">0</div>
<div class="t" style="left:48.0px;top:514.4px;width:1000px;text-align:right;font-size:15px;color:#d6d6d6;">0,1</div>
<div class="t" style="left:632.2px;top:593.6px;width:1000px;text-align:center;font-size:15px;color:#d6d6d6;">0,1</div>
<div class="t" style="left:48.0px;top:451.6px;width:1000px;text-align:right;font-size:15px;color:#d6d6d6;">0,2</div>
<div class="t" style="left:710.0px;top:593.6px;width:1000px;text-align:center;font-size:15px;color:#d6d6d6;">0,2</div>
<div class="t" style="left:48.0px;top:388.9px;width:1000px;text-align:right;font-size:15px;color:#d6d6d6;">0,3</div>
<div class="t" style="left:787.8px;top:593.6px;width:1000px;text-align:center;font-size:15px;color:#d6d6d6;">0,3</div>
<div class="t" style="left:48.0px;top:326.1px;width:1000px;text-align:right;font-size:15px;color:#d6d6d6;">0,4</div>
<div class="t" style="left:865.5px;top:593.6px;width:1000px;text-align:center;font-size:15px;color:#d6d6d6;">0,4</div>
<div class="t" style="left:48.0px;top:263.4px;width:1000px;text-align:right;font-size:15px;color:#d6d6d6;">0,5</div>
<div class="t" style="left:943.2px;top:593.6px;width:1000px;text-align:center;font-size:15px;color:#d6d6d6;">0,5</div>
<div class="t" style="left:48.0px;top:200.6px;width:1000px;text-align:right;font-size:15px;color:#d6d6d6;">0,6</div>
<div class="t" style="left:1021.0px;top:593.6px;width:1000px;text-align:center;font-size:15px;color:#d6d6d6;">0,6</div>
<div class="t" style="left:48.0px;top:137.9px;width:1000px;text-align:right;font-size:15px;color:#d6d6d6;">0,7</div>
<div class="t" style="left:1098.8px;top:593.6px;width:1000px;text-align:center;font-size:15px;color:#d6d6d6;">0,7</div>
<div class="t" style="left:48.0px;top:75.1px;width:1000px;text-align:right;font-size:15px;color:#d6d6d6;">0,8</div>
<div class="t" style="left:1176.5px;top:593.6px;width:1000px;text-align:center;font-size:15px;color:#d6d6d6;">0,8</div>
<div class="t" style="left:1065.0px;top:546.1px;width:1000px;text-align:center;font-size:20.5px;color:#f0f0f0;">RGB Triplet: 0, 133, 163</div>
<div class="t" style="left:14.2px;top:660.7px;font-size:30.5px;color:#f0f0f0;transform:scaleX(1.025);transform-origin:left;">Current Reading</div>
<div class="t" style="left:15.0px;top:710.6px;font-size:26px;color:#f0f0f0;">x: 0,2028</div>
<div class="t" style="left:15.0px;top:754.8px;font-size:26px;color:#f0f0f0;">y: 0,2429</div>
<div class="t" style="left:15.0px;top:799.0px;font-size:26px;color:#f0f0f0;">fL: 26,568</div>
<div class="t" style="left:15.0px;top:843.2px;font-size:26px;color:#f0f0f0;transform:scaleX(1.045);transform-origin:left;">cd/m²: 91,028</div>
<div class="t" style="left:425.2px;top:646.7px;font-size:17.5px;color:#f4f4f4;transform:scaleX(0.595);transform-origin:left;">White</div>
<div class="t" style="left:466.3px;top:646.7px;font-size:17.5px;color:#f4f4f4;transform:scaleX(0.595);transform-origin:left;">Gray 80</div>
<div class="t" style="left:508.7px;top:646.7px;font-size:17.5px;color:#f4f4f4;transform:scaleX(0.595);transform-origin:left;">Gray 65</div>
<div class="t" style="left:551.2px;top:646.7px;font-size:17.5px;color:#f4f4f4;transform:scaleX(0.595);transform-origin:left;">Gray 50</div>
<div class="t" style="left:593.7px;top:646.7px;font-size:17.5px;color:#f4f4f4;transform:scaleX(0.595);transform-origin:left;">Gray 35</div>
<div class="t" style="left:636.2px;top:646.7px;font-size:17.5px;color:#f4f4f4;transform:scaleX(0.595);transform-origin:left;">Black</div>
<div class="t" style="left:667.4px;top:646.7px;font-size:17.5px;color:#f4f4f4;transform:scaleX(0.595);transform-origin:left;">Dark Skin</div>
<div class="t" style="left:717.9px;top:646.7px;font-size:17.5px;color:#f4f4f4;transform:scaleX(0.595);transform-origin:left;">Light Skin</div>
<div class="t" style="left:769.2px;top:646.7px;font-size:17.5px;color:#f4f4f4;transform:scaleX(0.595);transform-origin:left;">Blue Sky</div>
<div class="t" style="left:815.3px;top:646.7px;font-size:17.5px;color:#f4f4f4;transform:scaleX(0.595);transform-origin:left;">Foliage</div>
<div class="t" style="left:854.9px;top:646.7px;font-size:17.5px;color:#f4f4f4;transform:scaleX(0.595);transform-origin:left;">Blue Flower</div>
<div class="t" style="left:917.2px;top:646.7px;font-size:17.5px;color:#f4f4f4;transform:scaleX(0.595);transform-origin:left;">Bluish Green</div>
<div class="t" style="left:984.0px;top:646.7px;font-size:17.5px;color:#f4f4f4;transform:scaleX(0.595);transform-origin:left;">Orange</div>
<div class="t" style="left:1025.2px;top:646.7px;font-size:17.5px;color:#f4f4f4;transform:scaleX(0.595);transform-origin:left;">Purplish Blue</div>
<div class="t" style="left:1093.6px;top:646.7px;font-size:17.5px;color:#f4f4f4;transform:scaleX(0.595);transform-origin:left;">Moderate Red</div>
<div class="t" style="left:1168.0px;top:646.7px;font-size:17.5px;color:#f4f4f4;transform:scaleX(0.595);transform-origin:left;">Purple</div>
<div class="t" style="left:1205.1px;top:646.7px;font-size:17.5px;color:#f4f4f4;transform:scaleX(0.595);transform-origin:left;">Yellow Green</div>
<div class="t" style="left:1273.9px;top:646.7px;font-size:17.5px;color:#f4f4f4;transform:scaleX(0.595);transform-origin:left;">Orange Yellow</div>
<div class="t" style="left:1347.6px;top:646.7px;font-size:17.5px;color:#f4f4f4;transform:scaleX(0.595);transform-origin:left;">Blue</div>
<div class="t" style="left:1382.4px;top:646.7px;font-size:17.5px;color:#f4f4f4;transform:scaleX(0.595);transform-origin:left;">Green</div>
<div class="t" style="left:1423.5px;top:646.7px;font-size:17.5px;color:#f4f4f4;transform:scaleX(0.595);transform-origin:left;">Red</div>
<div class="t" style="left:1458.3px;top:646.7px;font-size:17.5px;color:#f4f4f4;transform:scaleX(0.595);transform-origin:left;">Yellow</div>
<div class="t" style="left:1499.5px;top:646.7px;font-size:17.5px;color:#f4f4f4;transform:scaleX(0.595);transform-origin:left;">Magenta</div>
<div class="t" style="left:1547.9px;top:646.7px;font-size:17.5px;color:#f4f4f4;transform:scaleX(0.595);transform-origin:left;">Cyan</div>
<div class="t" style="left:344.6px;top:675.8px;font-size:17.5px;color:#eeeeee;transform:scaleX(0.612);transform-origin:left;">x: CIE31</div>
<div class="t" style="left:425.2px;top:675.8px;font-size:17.5px;color:#eeeeee;transform:scaleX(0.64);transform-origin:left;">0,30</div>
<div class="t" style="left:466.3px;top:675.8px;font-size:17.5px;color:#eeeeee;transform:scaleX(0.64);transform-origin:left;">0,30</div>
<div class="t" style="left:508.7px;top:675.8px;font-size:17.5px;color:#eeeeee;transform:scaleX(0.64);transform-origin:left;">0,30</div>
<div class="t" style="left:551.2px;top:675.8px;font-size:17.5px;color:#eeeeee;transform:scaleX(0.64);transform-origin:left;">0,30</div>
<div class="t" style="left:593.7px;top:675.8px;font-size:17.5px;color:#eeeeee;transform:scaleX(0.64);transform-origin:left;">0,30</div>
<div class="t" style="left:636.2px;top:675.8px;font-size:17.5px;color:#eeeeee;transform:scaleX(0.64);transform-origin:left;">0,23</div>
<div class="t" style="left:667.4px;top:675.8px;font-size:17.5px;color:#eeeeee;transform:scaleX(0.64);transform-origin:left;">0,38</div>
<div class="t" style="left:717.9px;top:675.8px;font-size:17.5px;color:#eeeeee;transform:scaleX(0.64);transform-origin:left;">0,35</div>
<div class="t" style="left:769.2px;top:675.8px;font-size:17.5px;color:#eeeeee;transform:scaleX(0.64);transform-origin:left;">0,23</div>
<div class="t" style="left:815.3px;top:675.8px;font-size:17.5px;color:#eeeeee;transform:scaleX(0.64);transform-origin:left;">0,33</div>
<div class="t" style="left:854.9px;top:675.8px;font-size:17.5px;color:#eeeeee;transform:scaleX(0.64);transform-origin:left;">0,25</div>
<div class="t" style="left:917.2px;top:675.8px;font-size:17.5px;color:#eeeeee;transform:scaleX(0.64);transform-origin:left;">0,25</div>
<div class="t" style="left:984.0px;top:675.8px;font-size:17.5px;color:#eeeeee;transform:scaleX(0.64);transform-origin:left;">0,48</div>
<div class="t" style="left:1025.2px;top:675.8px;font-size:17.5px;color:#eeeeee;transform:scaleX(0.64);transform-origin:left;">0,19</div>
<div class="t" style="left:1093.6px;top:675.8px;font-size:17.5px;color:#eeeeee;transform:scaleX(0.64);transform-origin:left;">0,46</div>
<div class="t" style="left:1168.0px;top:675.8px;font-size:17.5px;color:#eeeeee;transform:scaleX(0.64);transform-origin:left;">0,26</div>
<div class="t" style="left:1205.1px;top:675.8px;font-size:17.5px;color:#eeeeee;transform:scaleX(0.64);transform-origin:left;">0,36</div>
<div class="t" style="left:1273.9px;top:675.8px;font-size:17.5px;color:#eeeeee;transform:scaleX(0.64);transform-origin:left;">0,45</div>
<div class="t" style="left:1347.6px;top:675.8px;font-size:17.5px;color:#eeeeee;transform:scaleX(0.64);transform-origin:left;">0,17</div>
<div class="t" style="left:1382.4px;top:675.8px;font-size:17.5px;color:#eeeeee;transform:scaleX(0.64);transform-origin:left;">0,30</div>
<div class="t" style="left:1423.5px;top:675.8px;font-size:17.5px;color:#eeeeee;transform:scaleX(0.64);transform-origin:left;">0,55</div>
<div class="t" style="left:1458.3px;top:675.8px;font-size:17.5px;color:#eeeeee;transform:scaleX(0.64);transform-origin:left;">0,42</div>
<div class="t" style="left:1499.5px;top:675.8px;font-size:17.5px;color:#eeeeee;transform:scaleX(0.64);transform-origin:left;">0,35</div>
<div class="t" style="left:1547.9px;top:675.8px;font-size:17.5px;color:#eeeeee;transform:scaleX(0.64);transform-origin:left;">0,20</div>
<div class="t" style="left:344.6px;top:703.8px;font-size:17.5px;color:#eeeeee;transform:scaleX(0.612);transform-origin:left;">y: CIE31</div>
<div class="t" style="left:425.2px;top:703.8px;font-size:17.5px;color:#eeeeee;transform:scaleX(0.64);transform-origin:left;">0,32</div>
<div class="t" style="left:466.3px;top:703.8px;font-size:17.5px;color:#eeeeee;transform:scaleX(0.64);transform-origin:left;">0,32</div>
<div class="t" style="left:508.7px;top:703.8px;font-size:17.5px;color:#eeeeee;transform:scaleX(0.64);transform-origin:left;">0,32</div>
<div class="t" style="left:551.2px;top:703.8px;font-size:17.5px;color:#eeeeee;transform:scaleX(0.64);transform-origin:left;">0,32</div>
<div class="t" style="left:593.7px;top:703.8px;font-size:17.5px;color:#eeeeee;transform:scaleX(0.64);transform-origin:left;">0,32</div>
<div class="t" style="left:636.2px;top:703.8px;font-size:17.5px;color:#eeeeee;transform:scaleX(0.64);transform-origin:left;">0,24</div>
<div class="t" style="left:667.4px;top:703.8px;font-size:17.5px;color:#eeeeee;transform:scaleX(0.64);transform-origin:left;">0,37</div>
<div class="t" style="left:717.9px;top:703.8px;font-size:17.5px;color:#eeeeee;transform:scaleX(0.64);transform-origin:left;">0,35</div>
<div class="t" style="left:769.2px;top:703.8px;font-size:17.5px;color:#eeeeee;transform:scaleX(0.64);transform-origin:left;">0,24</div>
<div class="t" style="left:815.3px;top:703.8px;font-size:17.5px;color:#eeeeee;transform:scaleX(0.64);transform-origin:left;">0,46</div>
<div class="t" style="left:854.9px;top:703.8px;font-size:17.5px;color:#eeeeee;transform:scaleX(0.64);transform-origin:left;">0,22</div>
<div class="t" style="left:917.2px;top:703.8px;font-size:17.5px;color:#eeeeee;transform:scaleX(0.64);transform-origin:left;">0,36</div>
<div class="t" style="left:984.0px;top:703.8px;font-size:17.5px;color:#eeeeee;transform:scaleX(0.64);transform-origin:left;">0,43</div>
<div class="t" style="left:1025.2px;top:703.8px;font-size:17.5px;color:#eeeeee;transform:scaleX(0.64);transform-origin:left;">0,15</div>
<div class="t" style="left:1093.6px;top:703.8px;font-size:17.5px;color:#eeeeee;transform:scaleX(0.64);transform-origin:left;">0,31</div>
<div class="t" style="left:1168.0px;top:703.8px;font-size:17.5px;color:#eeeeee;transform:scaleX(0.64);transform-origin:left;">0,18</div>
<div class="t" style="left:1205.1px;top:703.8px;font-size:17.5px;color:#eeeeee;transform:scaleX(0.64);transform-origin:left;">0,53</div>
<div class="t" style="left:1273.9px;top:703.8px;font-size:17.5px;color:#eeeeee;transform:scaleX(0.64);transform-origin:left;">0,47</div>
<div class="t" style="left:1347.6px;top:703.8px;font-size:17.5px;color:#eeeeee;transform:scaleX(0.64);transform-origin:left;">0,10</div>
<div class="t" style="left:1382.4px;top:703.8px;font-size:17.5px;color:#eeeeee;transform:scaleX(0.64);transform-origin:left;">0,53</div>
<div class="t" style="left:1423.5px;top:703.8px;font-size:17.5px;color:#eeeeee;transform:scaleX(0.64);transform-origin:left;">0,32</div>
<div class="t" style="left:1458.3px;top:703.8px;font-size:17.5px;color:#eeeeee;transform:scaleX(0.64);transform-origin:left;">0,51</div>
<div class="t" style="left:1499.5px;top:703.8px;font-size:17.5px;color:#eeeeee;transform:scaleX(0.64);transform-origin:left;">0,22</div>
<div class="t" style="left:1547.9px;top:703.8px;font-size:17.5px;color:#eeeeee;transform:scaleX(0.64);transform-origin:left;">0,24</div>
<div class="t" style="left:344.6px;top:731.8px;font-size:17.5px;color:#eeeeee;transform:scaleX(0.612);transform-origin:left;">Y</div>
<div class="t" style="left:425.2px;top:731.8px;font-size:17.5px;color:#eeeeee;transform:scaleX(0.64);transform-origin:left;">350,46</div>
<div class="t" style="left:466.3px;top:731.8px;font-size:17.5px;color:#eeeeee;transform:scaleX(0.64);transform-origin:left;">289,49</div>
<div class="t" style="left:508.7px;top:731.8px;font-size:17.5px;color:#eeeeee;transform:scaleX(0.64);transform-origin:left;">241,71</div>
<div class="t" style="left:551.2px;top:731.8px;font-size:17.5px;color:#eeeeee;transform:scaleX(0.64);transform-origin:left;">188,46</div>
<div class="t" style="left:593.7px;top:731.8px;font-size:17.5px;color:#eeeeee;transform:scaleX(0.64);transform-origin:left;">136,49</div>
<div class="t" style="left:636.2px;top:731.8px;font-size:17.5px;color:#eeeeee;transform:scaleX(0.64);transform-origin:left;">0,33</div>
<div class="t" style="left:667.4px;top:731.8px;font-size:17.5px;color:#eeeeee;transform:scaleX(0.64);transform-origin:left;">41,00</div>
<div class="t" style="left:717.9px;top:731.8px;font-size:17.5px;color:#eeeeee;transform:scaleX(0.64);transform-origin:left;">134,86</div>
<div class="t" style="left:769.2px;top:731.8px;font-size:17.5px;color:#eeeeee;transform:scaleX(0.64);transform-origin:left;">79,90</div>
<div class="t" style="left:815.3px;top:731.8px;font-size:17.5px;color:#eeeeee;transform:scaleX(0.64);transform-origin:left;">55,89</div>
<div class="t" style="left:854.9px;top:731.8px;font-size:17.5px;color:#eeeeee;transform:scaleX(0.64);transform-origin:left;">96,22</div>
<div class="t" style="left:917.2px;top:731.8px;font-size:17.5px;color:#eeeeee;transform:scaleX(0.64);transform-origin:left;">170,39</div>
<div class="t" style="left:984.0px;top:731.8px;font-size:17.5px;color:#eeeeee;transform:scaleX(0.64);transform-origin:left;">106,07</div>
<div class="t" style="left:1025.2px;top:731.8px;font-size:17.5px;color:#eeeeee;transform:scaleX(0.64);transform-origin:left;">51,54</div>
<div class="t" style="left:1093.6px;top:731.8px;font-size:17.5px;color:#eeeeee;transform:scaleX(0.64);transform-origin:left;">73,73</div>
<div class="t" style="left:1168.0px;top:731.8px;font-size:17.5px;color:#eeeeee;transform:scaleX(0.64);transform-origin:left;">27,98</div>
<div class="t" style="left:1205.1px;top:731.8px;font-size:17.5px;color:#eeeeee;transform:scaleX(0.64);transform-origin:left;">170,15</div>
<div class="t" style="left:1273.9px;top:731.8px;font-size:17.5px;color:#eeeeee;transform:scaleX(0.64);transform-origin:left;">158,77</div>
<div class="t" style="left:1347.6px;top:731.8px;font-size:17.5px;color:#eeeeee;transform:scaleX(0.64);transform-origin:left;">29,53</div>
<div class="t" style="left:1382.4px;top:731.8px;font-size:17.5px;color:#eeeeee;transform:scaleX(0.64);transform-origin:left;">100,13</div>
<div class="t" style="left:1423.5px;top:731.8px;font-size:17.5px;color:#eeeeee;transform:scaleX(0.64);transform-origin:left;">49,17</div>
<div class="t" style="left:1458.3px;top:731.8px;font-size:17.5px;color:#eeeeee;transform:scaleX(0.64);transform-origin:left;">218,47</div>
<div class="t" style="left:1499.5px;top:731.8px;font-size:17.5px;color:#eeeeee;transform:scaleX(0.64);transform-origin:left;">75,34</div>
<div class="t" style="left:1547.9px;top:731.8px;font-size:17.5px;color:#eeeeee;transform:scaleX(0.64);transform-origin:left;">91,03</div>
<div class="t" style="left:344.6px;top:759.8px;font-size:17.5px;color:#eeeeee;transform:scaleX(0.612);transform-origin:left;">Target x:CIE31</div>
<div class="t" style="left:425.2px;top:759.8px;font-size:17.5px;color:#eeeeee;transform:scaleX(0.64);transform-origin:left;">0,31</div>
<div class="t" style="left:466.3px;top:759.8px;font-size:17.5px;color:#eeeeee;transform:scaleX(0.64);transform-origin:left;">0,31</div>
<div class="t" style="left:508.7px;top:759.8px;font-size:17.5px;color:#eeeeee;transform:scaleX(0.64);transform-origin:left;">0,31</div>
<div class="t" style="left:551.2px;top:759.8px;font-size:17.5px;color:#eeeeee;transform:scaleX(0.64);transform-origin:left;">0,31</div>
<div class="t" style="left:593.7px;top:759.8px;font-size:17.5px;color:#eeeeee;transform:scaleX(0.64);transform-origin:left;">0,31</div>
<div class="t" style="left:636.2px;top:759.8px;font-size:17.5px;color:#eeeeee;transform:scaleX(0.64);transform-origin:left;">0,31</div>
<div class="t" style="left:667.4px;top:759.8px;font-size:17.5px;color:#eeeeee;transform:scaleX(0.64);transform-origin:left;">0,40</div>
<div class="t" style="left:717.9px;top:759.8px;font-size:17.5px;color:#eeeeee;transform:scaleX(0.64);transform-origin:left;">0,38</div>
<div class="t" style="left:769.2px;top:759.8px;font-size:17.5px;color:#eeeeee;transform:scaleX(0.64);transform-origin:left;">0,25</div>
<div class="t" style="left:815.3px;top:759.8px;font-size:17.5px;color:#eeeeee;transform:scaleX(0.64);transform-origin:left;">0,34</div>
<div class="t" style="left:854.9px;top:759.8px;font-size:17.5px;color:#eeeeee;transform:scaleX(0.64);transform-origin:left;">0,27</div>
<div class="t" style="left:917.2px;top:759.8px;font-size:17.5px;color:#eeeeee;transform:scaleX(0.64);transform-origin:left;">0,26</div>
<div class="t" style="left:984.0px;top:759.8px;font-size:17.5px;color:#eeeeee;transform:scaleX(0.64);transform-origin:left;">0,51</div>
<div class="t" style="left:1025.2px;top:759.8px;font-size:17.5px;color:#eeeeee;transform:scaleX(0.64);transform-origin:left;">0,22</div>
<div class="t" style="left:1093.6px;top:759.8px;font-size:17.5px;color:#eeeeee;transform:scaleX(0.64);transform-origin:left;">0,46</div>
<div class="t" style="left:1168.0px;top:759.8px;font-size:17.5px;color:#eeeeee;transform:scaleX(0.64);transform-origin:left;">0,29</div>
<div class="t" style="left:1205.1px;top:759.8px;font-size:17.5px;color:#eeeeee;transform:scaleX(0.64);transform-origin:left;">0,38</div>
<div class="t" style="left:1273.9px;top:759.8px;font-size:17.5px;color:#eeeeee;transform:scaleX(0.64);transform-origin:left;">0,47</div>
<div class="t" style="left:1347.6px;top:759.8px;font-size:17.5px;color:#eeeeee;transform:scaleX(0.64);transform-origin:left;">0,19</div>
<div class="t" style="left:1382.4px;top:759.8px;font-size:17.5px;color:#eeeeee;transform:scaleX(0.64);transform-origin:left;">0,31</div>
<div class="t" style="left:1423.5px;top:759.8px;font-size:17.5px;color:#eeeeee;transform:scaleX(0.64);transform-origin:left;">0,54</div>
<div class="t" style="left:1458.3px;top:759.8px;font-size:17.5px;color:#eeeeee;transform:scaleX(0.64);transform-origin:left;">0,45</div>
<div class="t" style="left:1499.5px;top:759.8px;font-size:17.5px;color:#eeeeee;transform:scaleX(0.64);transform-origin:left;">0,37</div>
<div class="t" style="left:1547.9px;top:759.8px;font-size:17.5px;color:#eeeeee;transform:scaleX(0.64);transform-origin:left;">0,21</div>
<div class="t" style="left:344.6px;top:787.8px;font-size:17.5px;color:#eeeeee;transform:scaleX(0.612);transform-origin:left;">Target y:CIE31</div>
<div class="t" style="left:425.2px;top:787.8px;font-size:17.5px;color:#eeeeee;transform:scaleX(0.64);transform-origin:left;">0,33</div>
<div class="t" style="left:466.3px;top:787.8px;font-size:17.5px;color:#eeeeee;transform:scaleX(0.64);transform-origin:left;">0,33</div>
<div class="t" style="left:508.7px;top:787.8px;font-size:17.5px;color:#eeeeee;transform:scaleX(0.64);transform-origin:left;">0,33</div>
<div class="t" style="left:551.2px;top:787.8px;font-size:17.5px;color:#eeeeee;transform:scaleX(0.64);transform-origin:left;">0,33</div>
<div class="t" style="left:593.7px;top:787.8px;font-size:17.5px;color:#eeeeee;transform:scaleX(0.64);transform-origin:left;">0,33</div>
<div class="t" style="left:636.2px;top:787.8px;font-size:17.5px;color:#eeeeee;transform:scaleX(0.64);transform-origin:left;">0,33</div>
<div class="t" style="left:667.4px;top:787.8px;font-size:17.5px;color:#eeeeee;transform:scaleX(0.64);transform-origin:left;">0,36</div>
<div class="t" style="left:717.9px;top:787.8px;font-size:17.5px;color:#eeeeee;transform:scaleX(0.64);transform-origin:left;">0,36</div>
<div class="t" style="left:769.2px;top:787.8px;font-size:17.5px;color:#eeeeee;transform:scaleX(0.64);transform-origin:left;">0,27</div>
<div class="t" style="left:815.3px;top:787.8px;font-size:17.5px;color:#eeeeee;transform:scaleX(0.64);transform-origin:left;">0,43</div>
<div class="t" style="left:854.9px;top:787.8px;font-size:17.5px;color:#eeeeee;transform:scaleX(0.64);transform-origin:left;">0,25</div>
<div class="t" style="left:917.2px;top:787.8px;font-size:17.5px;color:#eeeeee;transform:scaleX(0.64);transform-origin:left;">0,36</div>
<div class="t" style="left:984.0px;top:787.8px;font-size:17.5px;color:#eeeeee;transform:scaleX(0.64);transform-origin:left;">0,41</div>
<div class="t" style="left:1025.2px;top:787.8px;font-size:17.5px;color:#eeeeee;transform:scaleX(0.64);transform-origin:left;">0,19</div>
<div class="t" style="left:1093.6px;top:787.8px;font-size:17.5px;color:#eeeeee;transform:scaleX(0.64);transform-origin:left;">0,31</div>
<div class="t" style="left:1168.0px;top:787.8px;font-size:17.5px;color:#eeeeee;transform:scaleX(0.64);transform-origin:left;">0,22</div>
<div class="t" style="left:1205.1px;top:787.8px;font-size:17.5px;color:#eeeeee;transform:scaleX(0.64);transform-origin:left;">0,49</div>
<div class="t" style="left:1273.9px;top:787.8px;font-size:17.5px;color:#eeeeee;transform:scaleX(0.64);transform-origin:left;">0,44</div>
<div class="t" style="left:1347.6px;top:787.8px;font-size:17.5px;color:#eeeeee;transform:scaleX(0.64);transform-origin:left;">0,14</div>
<div class="t" style="left:1382.4px;top:787.8px;font-size:17.5px;color:#eeeeee;transform:scaleX(0.64);transform-origin:left;">0,49</div>
<div class="t" style="left:1423.5px;top:787.8px;font-size:17.5px;color:#eeeeee;transform:scaleX(0.64);transform-origin:left;">0,32</div>
<div class="t" style="left:1458.3px;top:787.8px;font-size:17.5px;color:#eeeeee;transform:scaleX(0.64);transform-origin:left;">0,47</div>
<div class="t" style="left:1499.5px;top:787.8px;font-size:17.5px;color:#eeeeee;transform:scaleX(0.64);transform-origin:left;">0,25</div>
<div class="t" style="left:1547.9px;top:787.8px;font-size:17.5px;color:#eeeeee;transform:scaleX(0.64);transform-origin:left;">0,27</div>
<div class="t" style="left:344.6px;top:815.8px;font-size:17.5px;color:#eeeeee;transform:scaleX(0.612);transform-origin:left;">Target Y</div>
<div class="t" style="left:425.2px;top:815.8px;font-size:17.5px;color:#eeeeee;transform:scaleX(0.64);transform-origin:left;">350,46</div>
<div class="t" style="left:466.3px;top:815.8px;font-size:17.5px;color:#eeeeee;transform:scaleX(0.64);transform-origin:left;">277,32</div>
<div class="t" style="left:508.7px;top:815.8px;font-size:17.5px;color:#eeeeee;transform:scaleX(0.64);transform-origin:left;">223,45</div>
<div class="t" style="left:551.2px;top:815.8px;font-size:17.5px;color:#eeeeee;transform:scaleX(0.64);transform-origin:left;">172,08</div>
<div class="t" style="left:593.7px;top:815.8px;font-size:17.5px;color:#eeeeee;transform:scaleX(0.64);transform-origin:left;">119,83</div>
<div class="t" style="left:636.2px;top:815.8px;font-size:17.5px;color:#eeeeee;transform:scaleX(0.64);transform-origin:left;">0,00</div>
<div class="t" style="left:667.4px;top:815.8px;font-size:17.5px;color:#eeeeee;transform:scaleX(0.64);transform-origin:left;">35,30</div>
<div class="t" style="left:717.9px;top:815.8px;font-size:17.5px;color:#eeeeee;transform:scaleX(0.64);transform-origin:left;">122,29</div>
<div class="t" style="left:769.2px;top:815.8px;font-size:17.5px;color:#eeeeee;transform:scaleX(0.64);transform-origin:left;">65,53</div>
<div class="t" style="left:815.3px;top:815.8px;font-size:17.5px;color:#eeeeee;transform:scaleX(0.64);transform-origin:left;">45,67</div>
<div class="t" style="left:854.9px;top:815.8px;font-size:17.5px;color:#eeeeee;transform:scaleX(0.64);transform-origin:left;">81,72</div>
<div class="t" style="left:917.2px;top:815.8px;font-size:17.5px;color:#eeeeee;transform:scaleX(0.64);transform-origin:left;">146,75</div>
<div class="t" style="left:984.0px;top:815.8px;font-size:17.5px;color:#eeeeee;transform:scaleX(0.64);transform-origin:left;">99,35</div>
<div class="t" style="left:1025.2px;top:815.8px;font-size:17.5px;color:#eeeeee;transform:scaleX(0.64);transform-origin:left;">41,19</div>
<div class="t" style="left:1093.6px;top:815.8px;font-size:17.5px;color:#eeeeee;transform:scaleX(0.64);transform-origin:left;">65,45</div>
<div class="t" style="left:1168.0px;top:815.8px;font-size:17.5px;color:#eeeeee;transform:scaleX(0.64);transform-origin:left;">23,39</div>
<div class="t" style="left:1205.1px;top:815.8px;font-size:17.5px;color:#eeeeee;transform:scaleX(0.64);transform-origin:left;">149,85</div>
<div class="t" style="left:1273.9px;top:815.8px;font-size:17.5px;color:#eeeeee;transform:scaleX(0.64);transform-origin:left;">148,99</div>
<div class="t" style="left:1347.6px;top:815.8px;font-size:17.5px;color:#eeeeee;transform:scaleX(0.64);transform-origin:left;">21,88</div>
<div class="t" style="left:1382.4px;top:815.8px;font-size:17.5px;color:#eeeeee;transform:scaleX(0.64);transform-origin:left;">80,51</div>
<div class="t" style="left:1423.5px;top:815.8px;font-size:17.5px;color:#eeeeee;transform:scaleX(0.64);transform-origin:left;">40,87</div>
<div class="t" style="left:1458.3px;top:815.8px;font-size:17.5px;color:#eeeeee;transform:scaleX(0.64);transform-origin:left;">206,65</div>
<div class="t" style="left:1499.5px;top:815.8px;font-size:17.5px;color:#eeeeee;transform:scaleX(0.64);transform-origin:left;">65,98</div>
<div class="t" style="left:1547.9px;top:815.8px;font-size:17.5px;color:#eeeeee;transform:scaleX(0.64);transform-origin:left;">68,05</div>
<div class="t" style="left:344.6px;top:843.8px;font-size:17.5px;color:#eeeeee;transform:scaleX(0.612);transform-origin:left;">ΔE 2000</div>
<div class="t" style="left:425.2px;top:843.8px;font-size:17.5px;color:#eeeeee;transform:scaleX(0.64);transform-origin:left;">8,21</div>
<div class="t" style="left:466.3px;top:843.8px;font-size:17.5px;color:#eeeeee;transform:scaleX(0.64);transform-origin:left;">7,64</div>
<div class="t" style="left:508.7px;top:843.8px;font-size:17.5px;color:#eeeeee;transform:scaleX(0.64);transform-origin:left;">7,96</div>
<div class="t" style="left:551.2px;top:843.8px;font-size:17.5px;color:#eeeeee;transform:scaleX(0.64);transform-origin:left;">7,11</div>
<div class="t" style="left:593.7px;top:843.8px;font-size:17.5px;color:#eeeeee;transform:scaleX(0.64);transform-origin:left;">6,80</div>
<div class="t" style="left:636.2px;top:843.8px;font-size:17.5px;color:#eeeeee;transform:scaleX(0.64);transform-origin:left;">1,52</div>
<div class="t" style="left:667.4px;top:843.8px;font-size:17.5px;color:#eeeeee;transform:scaleX(0.64);transform-origin:left;">4,43</div>
<div class="t" style="left:717.9px;top:843.8px;font-size:17.5px;color:#eeeeee;transform:scaleX(0.64);transform-origin:left;">6,89</div>
<div class="t" style="left:769.2px;top:843.8px;font-size:17.5px;color:#eeeeee;transform:scaleX(0.64);transform-origin:left;">6,73</div>
<div class="t" style="left:815.3px;top:843.8px;font-size:17.5px;color:#eeeeee;transform:scaleX(0.64);transform-origin:left;">6,59</div>
<div class="t" style="left:854.9px;top:843.8px;font-size:17.5px;color:#eeeeee;transform:scaleX(0.64);transform-origin:left;">6,69</div>
<div class="t" style="left:917.2px;top:843.8px;font-size:17.5px;color:#eeeeee;transform:scaleX(0.64);transform-origin:left;">4,47</div>
<div class="t" style="left:984.0px;top:843.8px;font-size:17.5px;color:#eeeeee;transform:scaleX(0.64);transform-origin:left;">9,00</div>
<div class="t" style="left:1025.2px;top:843.8px;font-size:17.5px;color:#eeeeee;transform:scaleX(0.64);transform-origin:left;">8,44</div>
<div class="t" style="left:1093.6px;top:843.8px;font-size:17.5px;color:#eeeeee;transform:scaleX(0.64);transform-origin:left;">2,91</div>
<div class="t" style="left:1168.0px;top:843.8px;font-size:17.5px;color:#eeeeee;transform:scaleX(0.64);transform-origin:left;">6,94</div>
<div class="t" style="left:1205.1px;top:843.8px;font-size:17.5px;color:#eeeeee;transform:scaleX(0.64);transform-origin:left;">6,06</div>
<div class="t" style="left:1273.9px;top:843.8px;font-size:17.5px;color:#eeeeee;transform:scaleX(0.64);transform-origin:left;">10,15</div>
<div class="t" style="left:1347.6px;top:843.8px;font-size:17.5px;color:#eeeeee;transform:scaleX(0.64);transform-origin:left;">9,32</div>
<div class="t" style="left:1382.4px;top:843.8px;font-size:17.5px;color:#eeeeee;transform:scaleX(0.64);transform-origin:left;">6,77</div>
<div class="t" style="left:1423.5px;top:843.8px;font-size:17.5px;color:#eeeeee;transform:scaleX(0.64);transform-origin:left;">3,83</div>
<div class="t" style="left:1458.3px;top:843.8px;font-size:17.5px;color:#eeeeee;transform:scaleX(0.64);transform-origin:left;">9,44</div>
<div class="t" style="left:1499.5px;top:843.8px;font-size:17.5px;color:#eeeeee;transform:scaleX(0.64);transform-origin:left;">6,00</div>
<div class="t" style="left:1547.9px;top:843.8px;font-size:17.5px;color:#eeeeee;transform:scaleX(0.64);transform-origin:left;">9,21</div>
</body></html>
